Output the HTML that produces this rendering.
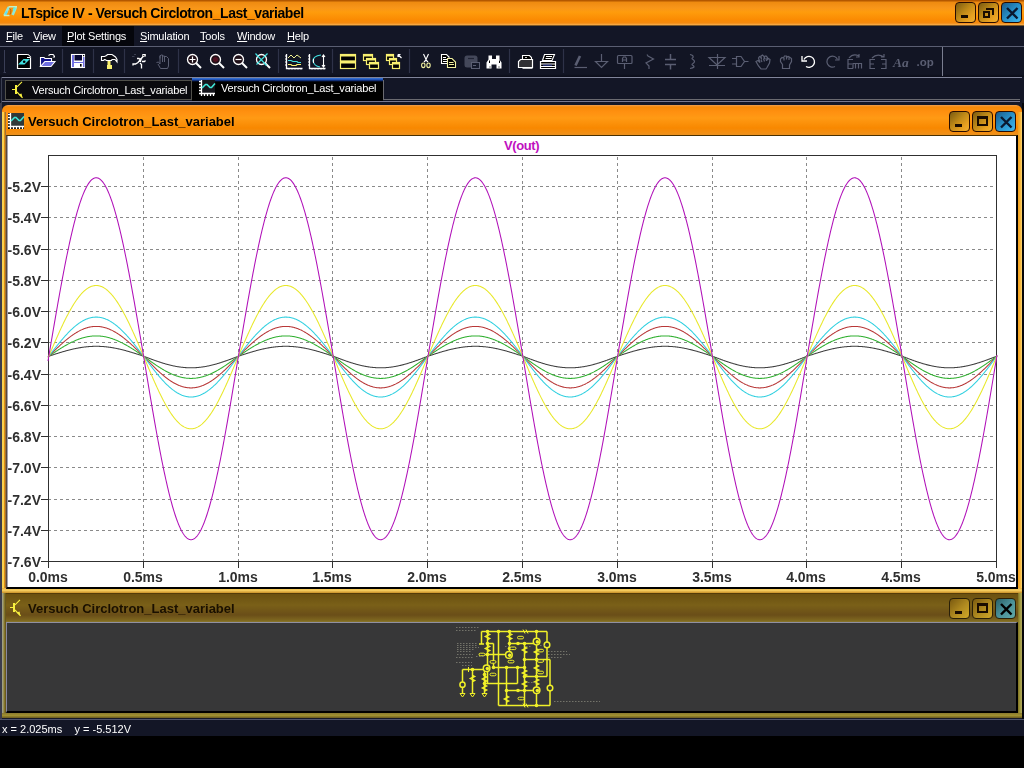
<!DOCTYPE html>
<html><head><meta charset="utf-8"><style>
*{margin:0;padding:0;box-sizing:border-box}
body{width:1024px;height:768px;overflow:hidden;background:#000;position:relative;font-family:"Liberation Sans",sans-serif;-webkit-font-smoothing:antialiased}
.mi,.tab,.wt,.yl,.xl,#ttl,#status div{will-change:transform}
.a{position:absolute}
.btn{width:21px;height:21px;border:1.5px solid #2a0c00;border-radius:4px}
#tb{left:0;top:0;width:1024px;height:26px;background:linear-gradient(#b45800 0,#b45800 1px,#ee8a10 2px,#f8961a 8px,#ff9c0c 12px,#fb8a02 20px,#f48a10 23px,#f8b050 25px,#000 26px)}
#ttl{left:21px;top:5px;font-size:14px;letter-spacing:-0.45px;font-weight:bold;color:#000;white-space:nowrap}
#menu{left:0;top:26px;width:1024px;height:20px;background:#131626}
.mi{position:absolute;top:4px;font-size:11px;color:#fff;white-space:nowrap;letter-spacing:-0.2px}
.mi u{text-decoration:underline}
#tool{left:0;top:46px;width:1024px;height:31px;background:linear-gradient(#121524 0,#121524 27px,#0a0c18 30px);border-top:1px solid #5a5e72}
#tabs{left:0;top:77px;width:1024px;height:27px;background:#131626}
#mdi{left:0;top:103px;width:1024px;height:617px;background:linear-gradient(90deg,#3c3c4c 0,#3c3c4c 2px,#151828 2px,#151828 1022px,#050508 1022px)}
.win{position:absolute;border-radius:6px 6px 0 0;overflow:hidden}
#w1{left:2px;top:105px;width:1020px;height:488px;background:linear-gradient(#f0a050 0,#f88a08 2px,#ff9010 7px,#ff9a14 13px,#f88800 23px,#f09018 29px,#e89020 30px)}
#w1in{left:4px;top:30px;width:1012px;height:454px;background:#fff;border-left:1px solid #5a4838;border-top:1px solid #4a3000;border-right:2px solid #000;border-bottom:2px solid #000;box-shadow:inset 1px 0 0 #a0a0b0}
#w2{left:2px;top:593px;width:1020px;height:125px;background:linear-gradient(#402800 0,#6a5010 1px,#7a6018 12px,#6a4e18 22px,#806a20 28px,#8a7a30 29px)}
#w2in{left:4px;top:29px;width:1012px;height:91px;background:#373738;border-top:1px solid #9090a0;border-left:1px solid #8888a0;border-right:2px solid #000;border-bottom:2px solid #000}
.lft{position:absolute;left:0;width:4px;background:linear-gradient(90deg,#f8d050 0,#f8d050 1.5px,#e09010 2.5px,#e09840 3px,#604830 4px)}
.rgt{position:absolute;right:0;width:4px;background:linear-gradient(90deg,#f0a020,#f8b030 50%,#f8d878)}
.bot{position:absolute;left:0;bottom:0;width:1020px;height:5px;background:linear-gradient(#e8b040,#f8d060 45%,#c89028)}
.wt{position:absolute;left:26px;top:9px;font-size:13px;font-weight:bold;white-space:nowrap}
#status{left:0;top:719px;width:1024px;height:17px;background:#131626;border-top:1px solid #50546a}
.yl{position:absolute;left:0;width:41px;text-align:right;font-size:14px;font-weight:bold;color:#303030}
.xl{position:absolute;top:431px;width:60px;text-align:center;font-size:14px;font-weight:bold;color:#303030}
.g{stroke:#8a8a8a;stroke-width:1;stroke-dasharray:3 3}
.f{stroke:#303030;stroke-width:1;fill:none}
.tab{position:absolute;font-size:11px;letter-spacing:-0.19px;color:#fff;white-space:nowrap}
</style></head><body>
<div id="tb" class="a"><div id="ttl" class="a">LTspice IV - Versuch Circlotron_Last_variabel</div>
<svg class="a" style="left:0;top:0" width="20" height="26"><path d="M4.5 15.5L8.8 7.2M16 7L12.6 15" stroke="#90e8d8" stroke-width="2.6" fill="none"/><path d="M8.5 6.8H17M3.8 15.6H9.5" stroke="#c8f0c0" stroke-width="1.5"/><path d="M14.8 7.5L13.5 10.5" stroke="#60f0e8" stroke-width="2"/><path d="M5.5 14.5L7 11.5" stroke="#60e0f0" stroke-width="2"/><path d="M9.6 8.4Q12 10 10 14.5" stroke="#a05010" stroke-width="0.8" fill="none"/></svg>
<div class="a btn" style="left:955px;top:2px;background:linear-gradient(135deg,#7a5a10,#c08a18 45%,#e8a020 75%,#f0b030);border-color:#2a0c00"><div class="a" style="left:5px;top:12px;width:7px;height:3px;background:#1a0c00"></div></div><div class="a btn" style="left:978px;top:2px;background:linear-gradient(135deg,#7a5a10,#c08a18 45%,#e8a020 75%,#f0b030);border-color:#2a0c00"><div class="a" style="left:7px;top:5px;width:8px;height:7px;border:2px solid #1a0c00;border-left:0;border-bottom:0"></div><div class="a" style="left:4px;top:8px;width:7px;height:7px;border:2px solid #1a0c00"></div></div><div class="a btn" style="left:1001px;top:2px;background:linear-gradient(135deg,#1a5a8a,#2890c8 50%,#40b8f0);border-color:#2a0c00"><svg class="a" style="left:0;top:0" width="21" height="21"><path d="M5 5L15.5 15.5M15.5 5L5 15.5" stroke="#0a1830" stroke-width="2.4"/></svg></div>
</div>
<div id="menu" class="a">
<div class="a" style="left:62px;top:0;width:72px;height:20px;background:#05060c"></div>
<div class="mi" style="left:6px"><u>F</u>ile</div>
<div class="mi" style="left:33px"><u>V</u>iew</div>
<div class="mi" style="left:67px"><u>P</u>lot Settings</div>
<div class="mi" style="left:140px"><u>S</u>imulation</div>
<div class="mi" style="left:200px"><u>T</u>ools</div>
<div class="mi" style="left:237px"><u>W</u>indow</div>
<div class="mi" style="left:287px"><u>H</u>elp</div>
</div>
<div id="tool" class="a"></div>
<div id="tabs" class="a">
 <div class="a" style="left:1px;top:0;width:1021px;height:1px;background:#80849a"></div>
 <div class="a" style="left:1px;top:0;width:1px;height:26px;background:#3a3e50"></div>
 <div class="a" style="left:383px;top:22px;width:637px;height:1px;background:#6a6a70"></div>
 <div class="a" style="left:383px;top:3px;width:1px;height:20px;background:#6a6a70"></div>
 <div class="a" style="left:5px;top:3px;width:187px;height:20px;background:#0a0a0e;border:1px solid #50504a"></div>
 <div class="tab" style="left:32px;top:7px">Versuch Circlotron_Last_variabel</div>
 <div class="a" style="left:192px;top:1px;width:191px;height:23px;background:linear-gradient(#3a78d8 0,#1848b0 2px,#0a1840 3px,#000 4px)"></div>
 <div class="a" style="left:2px;top:24px;width:1018px;height:1px;background:#7a7a90"></div>
 <div class="tab" style="left:221px;top:5px">Versuch Circlotron_Last_variabel</div>
 <svg class="a" style="left:0;top:-77px" width="240" height="104">
  <rect x="15" y="85" width="2" height="9" fill="#f8f040"/><path d="M12 89.5H15M17 86.8L22 81.8M17 92L22.5 97.8" stroke="#f8f040" stroke-width="1.1" fill="none"/><path d="M18.5 94.5L22.5 97.8L21.5 93.5z" fill="#f8f040"/>
  <rect x="202.0" y="80.0" width="13" height="13" fill="#16161c"/><path d="M201.5 80.0V96.0M199.0 93.5H215.0" stroke="#fff" stroke-width="1.3"/><path d="M199.0 81.5H201.5 M199.0 84.5H201.5 M199.0 87.5H201.5 M199.0 90.5H201.5 M204.5 93.5V96.0 M207.5 93.5V96.0 M210.5 93.5V96.0 M213.5 93.5V96.0" stroke="#fff" stroke-width="1.3"/><path d="M202.0 88.0L205.5 84.5H207.0L210.0 87.5H211.5L215.0 83.5" stroke="#40e8d8" stroke-width="1.6" fill="none"/>
 </svg>
</div>
<div id="mdi" class="a"></div>
<div id="w1" class="win">
 <div class="lft" style="top:7px;height:481px"></div><div class="rgt" style="top:7px;height:481px"></div><div class="bot"></div>
 <div class="wt">Versuch Circlotron_Last_variabel</div>
 <div id="w1in" class="a">
  <div class="a" style="left:497px;top:2px;font-size:13px;font-weight:bold;color:#c010c0;letter-spacing:-0.4px">V(out)</div>
 </div>
 <svg class="a" style="left:-2px;top:-105px" width="40" height="140">
  <rect x="8.0" y="113.0" width="16" height="16" fill="#000"/><rect x="11.0" y="113.0" width="13" height="13" fill="#303838"/><path d="M10.5 113.0V129.0M8.0 126.5H24.0" stroke="#fff" stroke-width="1.3"/><path d="M8.0 114.5H10.5 M8.0 117.5H10.5 M8.0 120.5H10.5 M8.0 123.5H10.5 M13.5 126.5V129.0 M16.5 126.5V129.0 M19.5 126.5V129.0 M22.5 126.5V129.0" stroke="#fff" stroke-width="1.3"/><path d="M11.0 121.0L14.5 117.5H16.0L19.0 120.5H20.5L24.0 116.5" stroke="#40e8d8" stroke-width="1.6" fill="none"/>
 </svg>
 <div class="a btn" style="left:947px;top:6px;background:linear-gradient(135deg,#7a5a10,#c08a18 45%,#e8a020 75%,#f0b030);border-color:#2a0c00"><div class="a" style="left:5px;top:12px;width:7px;height:3px;background:#1a0c00"></div></div><div class="a btn" style="left:970px;top:6px;background:linear-gradient(135deg,#7a5a10,#c08a18 45%,#e8a020 75%,#f0b030);border-color:#2a0c00"><div class="a" style="left:4px;top:4px;width:11px;height:10px;border:2px solid #1a0c00;border-top-width:3px"></div></div><div class="a btn" style="left:993px;top:6px;background:linear-gradient(135deg,#1a5a8a,#2890c8 50%,#40b8f0);border-color:#2a0c00"><svg class="a" style="left:0;top:0" width="21" height="21"><path d="M5 5L15.5 15.5M15.5 5L5 15.5" stroke="#0a1830" stroke-width="2.4"/></svg></div>
</div>
<div id="w2" class="win" style="border-radius:0">
 <div class="lft" style="top:0;height:125px;background:linear-gradient(90deg,#a0a080 0,#a0a080 1px,#8a7a30 2px,#807020 3px,#504020)"></div><div class="rgt" style="top:0;height:125px;background:linear-gradient(90deg,#807020,#a09a40 50%,#b0a860)"></div><div class="bot" style="height:5px;background:linear-gradient(#8a7a30,#a09030 50%,#6a5a20)"></div>
 <div class="wt" style="color:#1a1000;top:8px">Versuch Circlotron_Last_variabel</div>
 <div id="w2in" class="a"></div>
 <svg class="a" style="left:-2px;top:-593px" width="40" height="630">
  <rect x="13" y="603" width="2" height="9" fill="#f8f040"/><path d="M10 607.5H13M15 604.8L20 599.8M15 610L20.5 615.8" stroke="#f8f040" stroke-width="1.1" fill="none"/><path d="M16.5 612.5L20.5 615.8L19.5 611.5z" fill="#f8f040"/>
 </svg>
 <div class="a btn" style="left:947px;top:5px;background:linear-gradient(135deg,#7a5a10,#b08a20 55%,#d0a828);border-color:#2a2008"><div class="a" style="left:5px;top:12px;width:7px;height:3px;background:#1a0c00"></div></div><div class="a btn" style="left:970px;top:5px;background:linear-gradient(135deg,#7a5a10,#b08a20 55%,#d0a828);border-color:#2a2008"><div class="a" style="left:4px;top:4px;width:11px;height:10px;border:2px solid #1a0c00;border-top-width:3px"></div></div><div class="a btn" style="left:993px;top:5px;background:linear-gradient(135deg,#2a6068,#4a9098 50%,#60a8a8);border-color:#2a2008"><svg class="a" style="left:0;top:0" width="21" height="21"><path d="M5 5L15.5 15.5M15.5 5L5 15.5" stroke="#000" stroke-width="2.4"/></svg></div>
</div>
<svg class="a" style="left:0;top:0" width="1024" height="768">
<line x1="4.5" y1="50" x2="4.5" y2="73" stroke="#3a3e56" stroke-width="1"/>
<line x1="3.5" y1="72.5" x2="6" y2="72.5" stroke="#3a3e56"/>
<line x1="62.5" y1="49" x2="62.5" y2="73" stroke="#2e3248" stroke-width="1.2"/>
<line x1="93.5" y1="49" x2="93.5" y2="73" stroke="#2e3248" stroke-width="1.2"/>
<line x1="124.5" y1="49" x2="124.5" y2="73" stroke="#2e3248" stroke-width="1.2"/>
<line x1="178.5" y1="49" x2="178.5" y2="73" stroke="#2e3248" stroke-width="1.2"/>
<line x1="278.5" y1="49" x2="278.5" y2="73" stroke="#2e3248" stroke-width="1.2"/>
<line x1="332.5" y1="49" x2="332.5" y2="73" stroke="#2e3248" stroke-width="1.2"/>
<line x1="409.5" y1="49" x2="409.5" y2="73" stroke="#2e3248" stroke-width="1.2"/>
<line x1="509.5" y1="49" x2="509.5" y2="73" stroke="#2e3248" stroke-width="1.2"/>
<line x1="563.5" y1="49" x2="563.5" y2="73" stroke="#2e3248" stroke-width="1.2"/>
<line x1="942.5" y1="47" x2="942.5" y2="76" stroke="#7a7e90" stroke-width="1"/>
<path d="M17.5 54.5H28L30.5 57V68.5H17.5Z" fill="#000" stroke="#ffffff" stroke-width="1.2"/>
<path d="M27.5 54.5L31 58H27.5z" fill="#000"/><path d="M27 57.5h3.5" stroke="#ffffff" stroke-width="1"/>
<path d="M18 64.5L23.5 59H30L24.5 64.5Z" fill="#40e0e0"/><circle cx="24.2" cy="61.8" r="1.3" fill="#000"/>
<path d="M40.5 57.5h3.5l1 1h6.5v3h-6l-3 4.5h-2z" fill="#10108a" stroke="#ffffff" stroke-width="1.1"/>
<path d="M45 61.5H55L51 66.5H40.5Z" fill="#7070e0" stroke="#ffffff" stroke-width="1.1"/>
<path d="M48.5 55.5l1.5-1h3l1 1" fill="none" stroke="#ffffff" stroke-width="1.1"/><path d="M52.5 57.5h2.5v-2.5z" fill="#ffffff"/>
<rect x="71.5" y="54.5" width="13" height="13" fill="#ffffff" stroke="#ffffff" stroke-width="1.1"/>
<path d="M72 55h2v12h-2zM83 57h1.5v10h-1.5zM72 62h12.5v1h-12.5z" fill="#7070e0"/>
<rect x="74.5" y="55" width="7.5" height="5.5" fill="#080830"/><rect x="80" y="64" width="1.6" height="2.6" fill="#000"/><rect x="83" y="55" width="1.2" height="1.2" fill="#000"/>
<path d="M101.5 56.5H104.5L106.5 55.5L107.5 54.5H112L115.5 57L117 59.5V62L115 59.5H112L111.5 60.5H106.5L105 59.5H104.5L103.5 60.5H101.5Z" fill="#0a0a10" stroke="#ffffff" stroke-width="1.1"/>
<path d="M107.5 61h3v4h1.5v4h-5v-4h0.5z" fill="#f8f070"/>
<path d="M143.5 56L138 62.5L135.5 64H133V65.5M140 63L141.5 64.5V68.5M137 58.5H139L140 59.5M142 61.5H144.5L145.5 60.5" fill="none" stroke="#ffffff" stroke-width="1.3"/>
<rect x="142.3" y="54" width="3.5" height="2.6" fill="#ffffff"/><rect x="143.3" y="55" width="1" height="1" fill="#000"/><path d="M140 58.5L142 57.5L141 62L139 62z" fill="#ffffff"/>
<path d="M134 54.5h2M132 56.5h2.5" stroke="#3a3e50" stroke-width="1"/>
<path d="M156.5 62.5L158.5 62L160 64V55.5M160 58.5V56L161 55H162.5V62M162.5 56H164.5V62M164.5 56.5H166.5L168.5 58.5V66L167.5 68.5H160.5L158 64" fill="none" stroke="#5a5e72" stroke-width="1"/>
<circle cx="192.5" cy="59.5" r="5" fill="#201018" stroke="#ffffff" stroke-width="1.3"/>
<line x1="196.0" y1="63.0" x2="201.0" y2="68.0" stroke="#ffffff" stroke-width="2"/>
<path d="M189.5 59.5h6M192.5 56.5v6" stroke="#ffffff" stroke-width="1.2"/>
<circle cx="215.5" cy="59.5" r="5" fill="#201018" stroke="#ffffff" stroke-width="1.3"/>
<line x1="219.0" y1="63.0" x2="224.0" y2="68.0" stroke="#ffffff" stroke-width="2"/>
<circle cx="215.5" cy="59.5" r="2.5" fill="#501020"/>
<circle cx="238.5" cy="59.5" r="5" fill="#201018" stroke="#ffffff" stroke-width="1.3"/>
<line x1="242.0" y1="63.0" x2="247.0" y2="68.0" stroke="#ffffff" stroke-width="2"/>
<path d="M235.5 59.5h6" stroke="#ffffff" stroke-width="1.2"/>
<circle cx="261.5" cy="59.5" r="5" fill="#201018" stroke="#ffffff" stroke-width="1.3"/>
<line x1="265.0" y1="63.0" x2="270.0" y2="68.0" stroke="#ffffff" stroke-width="2"/>
<path d="M255.5 53.5l11 12M267.5 53.5l-11 11" stroke="#40e0e0" stroke-width="1.2"/>
<path d="M286.5 54v14.5h16" fill="none" stroke="#ffffff" stroke-width="1.3"/>
<path d="M288 58l3-3 3 3 3-3 4 3" fill="none" stroke="#f0f090" stroke-width="1"/>
<path d="M288 60.5h3l2 1h4l1 1h3" fill="none" stroke="#40e0e0" stroke-width="1.2"/>
<path d="M288 64.5h3l1 1h4l1-1h4" fill="none" stroke="#f8f070" stroke-width="1.2"/>
<path d="M285 56h1M285 59h1M285 62h1M285 65h1M289 69.5v-1M292 69.5v-1M295 69.5v-1M298 69.5v-1M301 69.5v-1" stroke="#ffffff" stroke-width="1"/>
<path d="M309.5 54v14.5h16" fill="none" stroke="#ffffff" stroke-width="1.3"/>
<path d="M321 55Q313 56 313 61Q314 66 320 67" fill="none" stroke="#40e0e0" stroke-width="1.2"/>
<path d="M323.5 55v12M322 57l1.5-2 1.5 2M322 65l1.5 2 1.5-2M313.5 59v4" fill="none" stroke="#ffffff" stroke-width="1.1"/>
<path d="M308 56h1M308 59h1M308 62h1M308 65h1M312 69.5v-1M315 69.5v-1M318 69.5v-1M321 69.5v-1M324 69.5v-1" stroke="#ffffff" stroke-width="1"/>
<rect x="340.5" y="54.5" width="15" height="6.5" fill="#000" stroke="#f8f070" stroke-width="1.2"/><rect x="340.5" y="54.5" width="15" height="2" fill="#f8f070"/>
<rect x="340.5" y="61.5" width="15" height="7" fill="#000" stroke="#f8f070" stroke-width="1.2"/><rect x="340.5" y="61.5" width="15" height="2" fill="#f8f070"/>
<rect x="363.5" y="54.5" width="9" height="6" fill="#000" stroke="#f8f070" stroke-width="1.2"/><rect x="363.5" y="54.5" width="9" height="2" fill="#f8f070"/>
<rect x="366.5" y="58.5" width="9" height="6" fill="#000" stroke="#f8f070" stroke-width="1.2"/><rect x="366.5" y="58.5" width="9" height="2" fill="#f8f070"/>
<rect x="369.5" y="62.5" width="9" height="6" fill="#000" stroke="#f8f070" stroke-width="1.2"/><rect x="369.5" y="62.5" width="9" height="2" fill="#f8f070"/>
<rect x="386.5" y="54.5" width="7" height="6" fill="#000" stroke="#f8f070" stroke-width="1.2"/><rect x="386.5" y="54.5" width="7" height="2" fill="#f8f070"/>
<rect x="389.5" y="58.5" width="7" height="6" fill="#000" stroke="#f8f070" stroke-width="1.2"/><rect x="389.5" y="58.5" width="7" height="2" fill="#f8f070"/>
<rect x="392.5" y="62.5" width="7" height="6" fill="#000" stroke="#f8f070" stroke-width="1.2"/><rect x="392.5" y="62.5" width="7" height="2" fill="#f8f070"/>
<path d="M398 54.5h2.5M398 54.5v2.5M398.5 55l3 3" stroke="#ffffff" stroke-width="1.2"/>
<path d="M423.5 54L426.5 60.5M428.5 54L425.5 60.5M424 62l1.5-1.5M428 62l-1.5-1.5" fill="none" stroke="#ffffff" stroke-width="1.1"/>
<ellipse cx="423.3" cy="65.3" rx="1.7" ry="2.3" fill="none" stroke="#f0f0a0" stroke-width="1.1"/><ellipse cx="428.5" cy="65.3" rx="1.7" ry="2.3" fill="none" stroke="#f0f0a0" stroke-width="1.1"/>
<path d="M441.5 54.5h5l2.5 2.5v6.5h-7.5z" fill="#000" stroke="#ffffff" stroke-width="1.1"/><path d="M443 57.5h3M443 59.5h4M443 61.5h4" stroke="#ffffff" stroke-width="1"/>
<path d="M447.5 58.5h4.5l3.5 3.5v5.5h-8z" fill="#000" stroke="#f0f0a0" stroke-width="1.1"/><path d="M449 62.5h4.5M449 64.5h5" stroke="#f0f0a0" stroke-width="1"/>
<rect x="464.5" y="55.5" width="13" height="12" rx="2.5" fill="#44485a"/><path d="M468 58.5h6" stroke="#202434" stroke-width="1.2"/><rect x="471.5" y="62.5" width="8" height="6" fill="#141828" stroke="#5a5e72" stroke-width="1"/><path d="M473 65.5h3" stroke="#5a5e72"/>
<path d="M488.5 55.5h3.5v3.5h4v-3.5h3.5v4l2 3v6h-5v-4h-5v4h-5v-6l2-3z" fill="#ffffff"/><path d="M489.5 60.5v2.5M499.5 60.5v2.5M490 66.5v1M499 66.5v1M494 56v2" stroke="#000" stroke-width="1"/>
<path d="M522.5 59V55.5H529.5L531.5 57.5V59" fill="#000" stroke="#ffffff" stroke-width="1.1"/><path d="M525 57l1 1 1-1" stroke="#ffffff" stroke-width="0.8" fill="none"/>
<path d="M520.5 59.5H532.5V67.5H518.5V61.5Z" fill="#303034" stroke="#ffffff" stroke-width="1.2"/><path d="M522.5 68h10" stroke="#ffffff" stroke-width="1.5"/>
<path d="M544.5 54.5H554.5L552 60.5H542.5Z" fill="#000" stroke="#ffffff" stroke-width="1.1"/><path d="M546 56.5h6M545.5 58.5h6" stroke="#ffffff" stroke-width="1"/>
<path d="M540.5 61.5H555.5V68.5H540.5Z" fill="#000" stroke="#ffffff" stroke-width="1.2"/><path d="M541 64h14M541 66.5h14" stroke="#ffffff" stroke-width="1"/><path d="M543 65.2h9" stroke="#3040a0"/>
<path d="M575.5 65.5L580 56" stroke="#5a5e72" stroke-width="2.6" fill="none"/><path d="M574.5 67.5h12.5" fill="none" stroke="#5a5e72" stroke-width="1.2"/>
<path d="M601.5 54v7.5M595.5 61.5h12l-6 6z" fill="none" stroke="#5a5e72" stroke-width="1.2"/>
<rect x="617.5" y="55.5" width="14.5" height="8" rx="1" fill="none" stroke="#5a5e72" stroke-width="1.2"/><path d="M622.5 62V58.5l1-1.5h2l1 1.5V62M622.5 60h4" fill="none" stroke="#5a5e72" stroke-width="1.2"/><path d="M624.5 64v5" fill="none" stroke="#5a5e72" stroke-width="1.2"/>
<path d="M647 54.5l1 1.5 5.5 3-7.5 4 3 3v3" fill="none" stroke="#5a5e72" stroke-width="1.2"/>
<path d="M670.5 54v5M670.5 64.5v5M665 59.5h11M665 64.5h11" fill="none" stroke="#5a5e72" stroke-width="1.5"/>
<path d="M690 54.5q4 1 3 3 -2 1 0 2 3 2 0 4 -2 1 0 2 3 2 -3 3" fill="none" stroke="#5a5e72" stroke-width="1.2"/>
<path d="M717.5 54v15M709 57.5h16l-8 7.5zM709 65.5h16" fill="none" stroke="#5a5e72" stroke-width="1.2"/>
<path d="M732 58.5h4M732 64h4M736.5 56.5v10h4.5l3.5-5-3.5-5zM744.5 61.5h4" fill="none" stroke="#5a5e72" stroke-width="1.2"/>
<path d="M756 61.5l2-1 2 2 -1.5-4.5 1-1.5 1.5 1 0.5 2 -0.5-3.5 1.5-1 1.5 1.5 0.5 2.5 0-2.5 1.5-0.5 1.5 1.5 0 2 1-1 1.5 1 -0.5 3.5 -2.5 4.5 -1 1.5h-5l-2.5-3z" fill="none" stroke="#5a5e72" stroke-width="1.2"/><path d="M761 60l1 2M763.5 58.5l1 3M766 58l0.5 3" fill="none" stroke="#5a5e72" stroke-width="1.2"/>
<path d="M782.5 64.5l-2-3 0-2.5 1.5-1.5 1.5 0.5 1-2h2l1 1 1-0.5 1.5 1 1.5 1v3l-2 3.5v3.5h-7z M784 58v2.5M786.5 56.5v3M789 57.5v2.5" fill="none" stroke="#5a5e72" stroke-width="1.2"/>
<path d="M804 59.5A5.5 5.5 0 1 1 806 66.5" fill="none" stroke="#ffffff" stroke-width="1.3"/><path d="M802 56v5h5" fill="none" stroke="#ffffff" stroke-width="1.3"/>
<path d="M837.5 59.5A5.5 5.5 0 1 0 835 66.5" fill="none" stroke="#5a5e72" stroke-width="1.2"/><path d="M839 56v4h-4" fill="none" stroke="#5a5e72" stroke-width="1.2"/>
<path d="M853 68.5h-5v-9h5M848 64h4M853 68.5v-5h8.5v5M855.5 63.5v5M858.5 63.5v5M849 58q4-5 10-2M859 54v3h-3" fill="none" stroke="#5a5e72" stroke-width="1.2"/>
<path d="M875 68.5h-5v-9h5M870 64h4M881 59.5h5v9h-5M886 64h-4M872 58q5-5 12-1M884 54v3h-3" fill="none" stroke="#5a5e72" stroke-width="1.2"/>
<text x="893" y="67" font-family="Liberation Serif" font-style="italic" font-weight="bold" font-size="13.5" fill="#5a5e72">Aa</text>
<text x="916.5" y="66" font-family="Liberation Sans" font-weight="bold" font-size="11.5" fill="#5a5e72">.op</text>
<line x1="48" y1="186.5" x2="996" y2="186.5" class="g"/>
<line x1="48" y1="217.5" x2="996" y2="217.5" class="g"/>
<line x1="48" y1="249.5" x2="996" y2="249.5" class="g"/>
<line x1="48" y1="280.5" x2="996" y2="280.5" class="g"/>
<line x1="48" y1="311.5" x2="996" y2="311.5" class="g"/>
<line x1="48" y1="342.5" x2="996" y2="342.5" class="g"/>
<line x1="48" y1="374.5" x2="996" y2="374.5" class="g"/>
<line x1="48" y1="405.5" x2="996" y2="405.5" class="g"/>
<line x1="48" y1="436.5" x2="996" y2="436.5" class="g"/>
<line x1="48" y1="467.5" x2="996" y2="467.5" class="g"/>
<line x1="48" y1="499.5" x2="996" y2="499.5" class="g"/>
<line x1="48" y1="530.5" x2="996" y2="530.5" class="g"/>
<line x1="143.5" y1="157" x2="143.5" y2="561" class="g"/>
<line x1="238.5" y1="157" x2="238.5" y2="561" class="g"/>
<line x1="332.5" y1="157" x2="332.5" y2="561" class="g"/>
<line x1="427.5" y1="157" x2="427.5" y2="561" class="g"/>
<line x1="522.5" y1="157" x2="522.5" y2="561" class="g"/>
<line x1="617.5" y1="157" x2="617.5" y2="561" class="g"/>
<line x1="712.5" y1="157" x2="712.5" y2="561" class="g"/>
<line x1="806.5" y1="157" x2="806.5" y2="561" class="g"/>
<line x1="901.5" y1="157" x2="901.5" y2="561" class="g"/>
<rect x="48.5" y="155.5" width="948" height="406" class="f"/>
<path d="M41 186.5H48 M41 217.5H48 M41 249.5H48 M41 280.5H48 M41 311.5H48 M41 342.5H48 M41 374.5H48 M41 405.5H48 M41 436.5H48 M41 467.5H48 M41 499.5H48 M41 530.5H48 M41 561.5H48 M48.5 561V568 M143.5 561V568 M238.5 561V568 M332.5 561V568 M427.5 561V568 M522.5 561V568 M617.5 561V568 M712.5 561V568 M806.5 561V568 M901.5 561V568 M996.5 561V568" class="f"/>
<polyline points="48.0,356.51 48.5,356.32 49.0,356.13 49.5,355.97 50.0,355.81 50.5,355.64 51.0,355.48 51.5,355.32 52.0,355.15 52.5,354.99 53.0,354.83 53.5,354.66 54.0,354.50 54.5,354.34 55.0,354.18 55.5,354.02 56.0,353.86 56.5,353.70 57.0,353.54 57.5,353.39 58.0,353.23 58.5,353.07 59.0,352.92 59.5,352.76 60.0,352.61 60.5,352.46 61.0,352.31 61.5,352.16 62.0,352.01 62.5,351.86 63.0,351.71 63.5,351.57 64.0,351.42 64.5,351.28 65.0,351.14 65.5,351.00 66.0,350.86 66.5,350.72 67.0,350.58 67.5,350.45 68.0,350.32 68.5,350.19 69.0,350.06 69.5,349.93 70.0,349.80 70.5,349.68 71.0,349.56 71.5,349.44 72.0,349.32 72.5,349.20 73.0,349.08 73.5,348.97 74.0,348.86 74.5,348.75 75.0,348.64 75.5,348.54 76.0,348.44 76.5,348.34 77.0,348.24 77.5,348.14 78.0,348.05 78.5,347.95 79.0,347.87 79.5,347.78 80.0,347.69 80.5,347.61 81.0,347.53 81.5,347.45 82.0,347.38 82.5,347.30 83.0,347.23 83.5,347.16 84.0,347.10 84.5,347.03 85.0,346.97 85.5,346.92 86.0,346.86 86.5,346.81 87.0,346.76 87.5,346.71 88.0,346.66 88.5,346.62 89.0,346.58 89.5,346.54 90.0,346.51 90.5,346.48 91.0,346.45 91.5,346.42 92.0,346.40 92.5,346.37 93.0,346.36 93.5,346.34 94.0,346.33 94.5,346.32 95.0,346.31 95.5,346.30 96.0,346.30 96.5,346.30 97.0,346.30 97.5,346.31 98.0,346.32 98.5,346.33 99.0,346.34 99.5,346.36 100.0,346.38 100.5,346.40 101.0,346.42 101.5,346.45 102.0,346.48 102.5,346.51 103.0,346.55 103.5,346.59 104.0,346.63 104.5,346.67 105.0,346.72 105.5,346.77 106.0,346.82 106.5,346.87 107.0,346.93 107.5,346.99 108.0,347.05 108.5,347.11 109.0,347.18 109.5,347.25 110.0,347.32 110.5,347.39 111.0,347.47 111.5,347.55 112.0,347.63 112.5,347.71 113.0,347.80 113.5,347.88 114.0,347.97 114.5,348.07 115.0,348.16 115.5,348.26 116.0,348.36 116.5,348.46 117.0,348.56 117.5,348.67 118.0,348.77 118.5,348.88 119.0,348.99 119.5,349.11 120.0,349.22 120.5,349.34 121.0,349.46 121.5,349.58 122.0,349.70 122.5,349.83 123.0,349.95 123.5,350.08 124.0,350.21 124.5,350.34 125.0,350.48 125.5,350.61 126.0,350.75 126.5,350.89 127.0,351.02 127.5,351.17 128.0,351.31 128.5,351.45 129.0,351.59 129.5,351.74 130.0,351.89 130.5,352.04 131.0,352.19 131.5,352.34 132.0,352.49 132.5,352.64 133.0,352.79 133.5,352.95 134.0,353.10 134.5,353.26 135.0,353.42 135.5,353.57 136.0,353.73 136.5,353.89 137.0,354.05 137.5,354.21 138.0,354.37 138.5,354.53 139.0,354.70 139.5,354.86 140.0,355.02 140.5,355.18 141.0,355.35 141.5,355.51 142.0,355.68 142.5,355.84 143.0,356.00 143.5,356.17 144.0,356.35 144.5,356.55 145.0,356.74 145.5,356.93 146.0,357.12 146.5,357.31 147.0,357.50 147.5,357.70 148.0,357.89 148.5,358.08 149.0,358.26 149.5,358.45 150.0,358.64 150.5,358.83 151.0,359.02 151.5,359.20 152.0,359.39 152.5,359.57 153.0,359.76 153.5,359.94 154.0,360.12 154.5,360.30 155.0,360.48 155.5,360.66 156.0,360.83 156.5,361.01 157.0,361.18 157.5,361.36 158.0,361.53 158.5,361.70 159.0,361.87 159.5,362.03 160.0,362.20 160.5,362.36 161.0,362.52 161.5,362.68 162.0,362.84 162.5,363.00 163.0,363.15 163.5,363.31 164.0,363.46 164.5,363.61 165.0,363.75 165.5,363.90 166.0,364.04 166.5,364.18 167.0,364.32 167.5,364.46 168.0,364.59 168.5,364.72 169.0,364.85 169.5,364.98 170.0,365.10 170.5,365.22 171.0,365.34 171.5,365.46 172.0,365.58 172.5,365.69 173.0,365.80 173.5,365.90 174.0,366.01 174.5,366.11 175.0,366.21 175.5,366.30 176.0,366.40 176.5,366.49 177.0,366.57 177.5,366.66 178.0,366.74 178.5,366.82 179.0,366.89 179.5,366.97 180.0,367.04 180.5,367.10 181.0,367.17 181.5,367.23 182.0,367.29 182.5,367.34 183.0,367.39 183.5,367.44 184.0,367.49 184.5,367.53 185.0,367.57 185.5,367.61 186.0,367.64 186.5,367.67 187.0,367.70 187.5,367.72 188.0,367.74 188.5,367.76 189.0,367.77 189.5,367.79 190.0,367.79 190.5,367.80 191.0,367.80 191.5,367.80 192.0,367.79 192.5,367.79 193.0,367.77 193.5,367.76 194.0,367.74 194.5,367.72 195.0,367.70 195.5,367.67 196.0,367.64 196.5,367.61 197.0,367.57 197.5,367.53 198.0,367.49 198.5,367.44 199.0,367.39 199.5,367.34 200.0,367.29 200.5,367.23 201.0,367.17 201.5,367.10 202.0,367.04 202.5,366.97 203.0,366.89 203.5,366.82 204.0,366.74 204.5,366.66 205.0,366.57 205.5,366.49 206.0,366.40 206.5,366.30 207.0,366.21 207.5,366.11 208.0,366.01 208.5,365.90 209.0,365.80 209.5,365.69 210.0,365.58 210.5,365.46 211.0,365.34 211.5,365.22 212.0,365.10 212.5,364.98 213.0,364.85 213.5,364.72 214.0,364.59 214.5,364.46 215.0,364.32 215.5,364.18 216.0,364.04 216.5,363.90 217.0,363.75 217.5,363.61 218.0,363.46 218.5,363.31 219.0,363.15 219.5,363.00 220.0,362.84 220.5,362.68 221.0,362.52 221.5,362.36 222.0,362.20 222.5,362.03 223.0,361.87 223.5,361.70 224.0,361.53 224.5,361.36 225.0,361.18 225.5,361.01 226.0,360.83 226.5,360.66 227.0,360.48 227.5,360.30 228.0,360.12 228.5,359.94 229.0,359.76 229.5,359.57 230.0,359.39 230.5,359.20 231.0,359.02 231.5,358.83 232.0,358.64 232.5,358.45 233.0,358.26 233.5,358.08 234.0,357.89 234.5,357.70 235.0,357.50 235.5,357.31 236.0,357.12 236.5,356.93 237.0,356.74 237.5,356.55 238.0,356.35 238.5,356.17 239.0,356.00 239.5,355.84 240.0,355.68 240.5,355.51 241.0,355.35 241.5,355.18 242.0,355.02 242.5,354.86 243.0,354.70 243.5,354.53 244.0,354.37 244.5,354.21 245.0,354.05 245.5,353.89 246.0,353.73 246.5,353.57 247.0,353.42 247.5,353.26 248.0,353.10 248.5,352.95 249.0,352.79 249.5,352.64 250.0,352.49 250.5,352.34 251.0,352.19 251.5,352.04 252.0,351.89 252.5,351.74 253.0,351.59 253.5,351.45 254.0,351.31 254.5,351.17 255.0,351.02 255.5,350.89 256.0,350.75 256.5,350.61 257.0,350.48 257.5,350.34 258.0,350.21 258.5,350.08 259.0,349.95 259.5,349.83 260.0,349.70 260.5,349.58 261.0,349.46 261.5,349.34 262.0,349.22 262.5,349.11 263.0,348.99 263.5,348.88 264.0,348.77 264.5,348.67 265.0,348.56 265.5,348.46 266.0,348.36 266.5,348.26 267.0,348.16 267.5,348.07 268.0,347.97 268.5,347.88 269.0,347.80 269.5,347.71 270.0,347.63 270.5,347.55 271.0,347.47 271.5,347.39 272.0,347.32 272.5,347.25 273.0,347.18 273.5,347.11 274.0,347.05 274.5,346.99 275.0,346.93 275.5,346.87 276.0,346.82 276.5,346.77 277.0,346.72 277.5,346.67 278.0,346.63 278.5,346.59 279.0,346.55 279.5,346.51 280.0,346.48 280.5,346.45 281.0,346.42 281.5,346.40 282.0,346.38 282.5,346.36 283.0,346.34 283.5,346.33 284.0,346.32 284.5,346.31 285.0,346.30 285.5,346.30 286.0,346.30 286.5,346.30 287.0,346.31 287.5,346.32 288.0,346.33 288.5,346.34 289.0,346.36 289.5,346.37 290.0,346.40 290.5,346.42 291.0,346.45 291.5,346.48 292.0,346.51 292.5,346.54 293.0,346.58 293.5,346.62 294.0,346.66 294.5,346.71 295.0,346.76 295.5,346.81 296.0,346.86 296.5,346.92 297.0,346.97 297.5,347.03 298.0,347.10 298.5,347.16 299.0,347.23 299.5,347.30 300.0,347.38 300.5,347.45 301.0,347.53 301.5,347.61 302.0,347.69 302.5,347.78 303.0,347.87 303.5,347.95 304.0,348.05 304.5,348.14 305.0,348.24 305.5,348.34 306.0,348.44 306.5,348.54 307.0,348.64 307.5,348.75 308.0,348.86 308.5,348.97 309.0,349.08 309.5,349.20 310.0,349.32 310.5,349.44 311.0,349.56 311.5,349.68 312.0,349.80 312.5,349.93 313.0,350.06 313.5,350.19 314.0,350.32 314.5,350.45 315.0,350.58 315.5,350.72 316.0,350.86 316.5,351.00 317.0,351.14 317.5,351.28 318.0,351.42 318.5,351.57 319.0,351.71 319.5,351.86 320.0,352.01 320.5,352.16 321.0,352.31 321.5,352.46 322.0,352.61 322.5,352.76 323.0,352.92 323.5,353.07 324.0,353.23 324.5,353.39 325.0,353.54 325.5,353.70 326.0,353.86 326.5,354.02 327.0,354.18 327.5,354.34 328.0,354.50 328.5,354.66 329.0,354.83 329.5,354.99 330.0,355.15 330.5,355.32 331.0,355.48 331.5,355.64 332.0,355.81 332.5,355.97 333.0,356.13 333.5,356.32 334.0,356.51 334.5,356.70 335.0,356.89 335.5,357.08 336.0,357.27 336.5,357.47 337.0,357.66 337.5,357.85 338.0,358.04 338.5,358.23 339.0,358.42 339.5,358.60 340.0,358.79 340.5,358.98 341.0,359.17 341.5,359.35 342.0,359.54 342.5,359.72 343.0,359.90 343.5,360.08 344.0,360.26 344.5,360.44 345.0,360.62 345.5,360.80 346.0,360.97 346.5,361.15 347.0,361.32 347.5,361.49 348.0,361.66 348.5,361.83 349.0,362.00 349.5,362.17 350.0,362.33 350.5,362.49 351.0,362.65 351.5,362.81 352.0,362.97 352.5,363.12 353.0,363.28 353.5,363.43 354.0,363.58 354.5,363.72 355.0,363.87 355.5,364.01 356.0,364.15 356.5,364.29 357.0,364.43 357.5,364.56 358.0,364.70 358.5,364.83 359.0,364.95 359.5,365.08 360.0,365.20 360.5,365.32 361.0,365.44 361.5,365.55 362.0,365.67 362.5,365.78 363.0,365.88 363.5,365.99 364.0,366.09 364.5,366.19 365.0,366.28 365.5,366.38 366.0,366.47 366.5,366.56 367.0,366.64 367.5,366.72 368.0,366.80 368.5,366.88 369.0,366.95 369.5,367.02 370.0,367.09 370.5,367.16 371.0,367.22 371.5,367.28 372.0,367.33 372.5,367.38 373.0,367.43 373.5,367.48 374.0,367.52 374.5,367.56 375.0,367.60 375.5,367.63 376.0,367.67 376.5,367.69 377.0,367.72 377.5,367.74 378.0,367.76 378.5,367.77 379.0,367.78 379.5,367.79 380.0,367.80 380.5,367.80 381.0,367.80 381.5,367.79 382.0,367.79 382.5,367.78 383.0,367.76 383.5,367.75 384.0,367.73 384.5,367.70 385.0,367.68 385.5,367.65 386.0,367.61 386.5,367.58 387.0,367.54 387.5,367.50 388.0,367.45 388.5,367.40 389.0,367.35 389.5,367.30 390.0,367.24 390.5,367.18 391.0,367.12 391.5,367.05 392.0,366.98 392.5,366.91 393.0,366.83 393.5,366.76 394.0,366.67 394.5,366.59 395.0,366.50 395.5,366.41 396.0,366.32 396.5,366.23 397.0,366.13 397.5,366.03 398.0,365.92 398.5,365.82 399.0,365.71 399.5,365.60 400.0,365.48 400.5,365.37 401.0,365.25 401.5,365.13 402.0,365.00 402.5,364.88 403.0,364.75 403.5,364.62 404.0,364.48 404.5,364.35 405.0,364.21 405.5,364.07 406.0,363.93 406.5,363.78 407.0,363.64 407.5,363.49 408.0,363.34 408.5,363.19 409.0,363.03 409.5,362.87 410.0,362.72 410.5,362.56 411.0,362.39 411.5,362.23 412.0,362.07 412.5,361.90 413.0,361.73 413.5,361.56 414.0,361.39 414.5,361.22 415.0,361.04 415.5,360.87 416.0,360.69 416.5,360.51 417.0,360.34 417.5,360.16 418.0,359.97 418.5,359.79 419.0,359.61 419.5,359.42 420.0,359.24 420.5,359.05 421.0,358.87 421.5,358.68 422.0,358.49 422.5,358.30 423.0,358.11 423.5,357.92 424.0,357.73 424.5,357.54 425.0,357.35 425.5,357.16 426.0,356.97 426.5,356.78 427.0,356.58 427.5,356.39 428.0,356.20 428.5,356.04 429.0,355.87 429.5,355.71 430.0,355.54 430.5,355.38 431.0,355.22 431.5,355.05 432.0,354.89 432.5,354.73 433.0,354.57 433.5,354.41 434.0,354.24 434.5,354.08 435.0,353.92 435.5,353.76 436.0,353.61 436.5,353.45 437.0,353.29 437.5,353.13 438.0,352.98 438.5,352.82 439.0,352.67 439.5,352.52 440.0,352.37 440.5,352.22 441.0,352.07 441.5,351.92 442.0,351.77 442.5,351.62 443.0,351.48 443.5,351.34 444.0,351.19 444.5,351.05 445.0,350.91 445.5,350.78 446.0,350.64 446.5,350.50 447.0,350.37 447.5,350.24 448.0,350.11 448.5,349.98 449.0,349.85 449.5,349.73 450.0,349.60 450.5,349.48 451.0,349.36 451.5,349.25 452.0,349.13 452.5,349.02 453.0,348.90 453.5,348.79 454.0,348.69 454.5,348.58 455.0,348.48 455.5,348.38 456.0,348.28 456.5,348.18 457.0,348.08 457.5,347.99 458.0,347.90 458.5,347.81 459.0,347.73 459.5,347.64 460.0,347.56 460.5,347.48 461.0,347.41 461.5,347.33 462.0,347.26 462.5,347.19 463.0,347.12 463.5,347.06 464.0,347.00 464.5,346.94 465.0,346.88 465.5,346.83 466.0,346.78 466.5,346.73 467.0,346.68 467.5,346.64 468.0,346.60 468.5,346.56 469.0,346.52 469.5,346.49 470.0,346.46 470.5,346.43 471.0,346.41 471.5,346.38 472.0,346.36 472.5,346.35 473.0,346.33 473.5,346.32 474.0,346.31 474.5,346.30 475.0,346.30 475.5,346.30 476.0,346.30 476.5,346.31 477.0,346.31 477.5,346.32 478.0,346.34 478.5,346.35 479.0,346.37 479.5,346.39 480.0,346.41 480.5,346.44 481.0,346.47 481.5,346.50 482.0,346.54 482.5,346.57 483.0,346.61 483.5,346.65 484.0,346.70 484.5,346.75 485.0,346.80 485.5,346.85 486.0,346.90 486.5,346.96 487.0,347.02 487.5,347.09 488.0,347.15 488.5,347.22 489.0,347.29 489.5,347.36 490.0,347.44 490.5,347.51 491.0,347.59 491.5,347.68 492.0,347.76 492.5,347.85 493.0,347.94 493.5,348.03 494.0,348.12 494.5,348.22 495.0,348.32 495.5,348.42 496.0,348.52 496.5,348.62 497.0,348.73 497.5,348.84 498.0,348.95 498.5,349.06 499.0,349.18 499.5,349.29 500.0,349.41 500.5,349.53 501.0,349.65 501.5,349.78 502.0,349.90 502.5,350.03 503.0,350.16 503.5,350.29 504.0,350.42 504.5,350.56 505.0,350.69 505.5,350.83 506.0,350.97 506.5,351.11 507.0,351.25 507.5,351.39 508.0,351.54 508.5,351.68 509.0,351.83 509.5,351.98 510.0,352.13 510.5,352.28 511.0,352.43 511.5,352.58 512.0,352.73 512.5,352.89 513.0,353.04 513.5,353.20 514.0,353.35 514.5,353.51 515.0,353.67 515.5,353.83 516.0,353.99 516.5,354.15 517.0,354.31 517.5,354.47 518.0,354.63 518.5,354.79 519.0,354.96 519.5,355.12 520.0,355.28 520.5,355.45 521.0,355.61 521.5,355.77 522.0,355.94 522.5,356.10 523.0,356.28 523.5,356.47 524.0,356.66 524.5,356.85 525.0,357.04 525.5,357.24 526.0,357.43 526.5,357.62 527.0,357.81 527.5,358.00 528.0,358.19 528.5,358.38 529.0,358.57 529.5,358.75 530.0,358.94 530.5,359.13 531.0,359.31 531.5,359.50 532.0,359.68 532.5,359.86 533.0,360.05 533.5,360.23 534.0,360.41 534.5,360.59 535.0,360.76 535.5,360.94 536.0,361.11 536.5,361.29 537.0,361.46 537.5,361.63 538.0,361.80 538.5,361.97 539.0,362.13 539.5,362.30 540.0,362.46 540.5,362.62 541.0,362.78 541.5,362.94 542.0,363.09 542.5,363.25 543.0,363.40 543.5,363.55 544.0,363.70 544.5,363.84 545.0,363.98 545.5,364.13 546.0,364.27 546.5,364.40 547.0,364.54 547.5,364.67 548.0,364.80 548.5,364.93 549.0,365.05 549.5,365.18 550.0,365.30 550.5,365.41 551.0,365.53 551.5,365.64 552.0,365.75 552.5,365.86 553.0,365.97 553.5,366.07 554.0,366.17 554.5,366.27 555.0,366.36 555.5,366.45 556.0,366.54 556.5,366.62 557.0,366.71 557.5,366.79 558.0,366.86 558.5,366.94 559.0,367.01 559.5,367.08 560.0,367.14 560.5,367.21 561.0,367.27 561.5,367.32 562.0,367.37 562.5,367.42 563.0,367.47 563.5,367.52 564.0,367.56 564.5,367.59 565.0,367.63 565.5,367.66 566.0,367.69 566.5,367.71 567.0,367.73 567.5,367.75 568.0,367.77 568.5,367.78 569.0,367.79 569.5,367.80 570.0,367.80 570.5,367.80 571.0,367.80 571.5,367.79 572.0,367.78 572.5,367.77 573.0,367.75 573.5,367.73 574.0,367.71 574.5,367.68 575.0,367.65 575.5,367.62 576.0,367.59 576.5,367.55 577.0,367.51 577.5,367.46 578.0,367.41 578.5,367.36 579.0,367.31 579.5,367.25 580.0,367.19 580.5,367.13 581.0,367.06 581.5,367.00 582.0,366.92 582.5,366.85 583.0,366.77 583.5,366.69 584.0,366.61 584.5,366.52 585.0,366.43 585.5,366.34 586.0,366.25 586.5,366.15 587.0,366.05 587.5,365.95 588.0,365.84 588.5,365.73 589.0,365.62 589.5,365.51 590.0,365.39 590.5,365.27 591.0,365.15 591.5,365.03 592.0,364.90 592.5,364.77 593.0,364.64 593.5,364.51 594.0,364.38 594.5,364.24 595.0,364.10 595.5,363.96 596.0,363.81 596.5,363.67 597.0,363.52 597.5,363.37 598.0,363.22 598.5,363.06 599.0,362.91 599.5,362.75 600.0,362.59 600.5,362.43 601.0,362.26 601.5,362.10 602.0,361.93 602.5,361.77 603.0,361.60 603.5,361.43 604.0,361.25 604.5,361.08 605.0,360.90 605.5,360.73 606.0,360.55 606.5,360.37 607.0,360.19 607.5,360.01 608.0,359.83 608.5,359.65 609.0,359.46 609.5,359.28 610.0,359.09 610.5,358.90 611.0,358.72 611.5,358.53 612.0,358.34 612.5,358.15 613.0,357.96 613.5,357.77 614.0,357.58 614.5,357.39 615.0,357.20 615.5,357.01 616.0,356.81 616.5,356.62 617.0,356.43 617.5,356.24 618.0,356.07 618.5,355.90 619.0,355.74 619.5,355.58 620.0,355.41 620.5,355.25 621.0,355.09 621.5,354.92 622.0,354.76 622.5,354.60 623.0,354.44 623.5,354.28 624.0,354.12 624.5,353.96 625.0,353.80 625.5,353.64 626.0,353.48 626.5,353.32 627.0,353.17 627.5,353.01 628.0,352.86 628.5,352.70 629.0,352.55 629.5,352.40 630.0,352.25 630.5,352.10 631.0,351.95 631.5,351.80 632.0,351.65 632.5,351.51 633.0,351.36 633.5,351.22 634.0,351.08 634.5,350.94 635.0,350.80 635.5,350.67 636.0,350.53 636.5,350.40 637.0,350.26 637.5,350.13 638.0,350.01 638.5,349.88 639.0,349.75 639.5,349.63 640.0,349.51 640.5,349.39 641.0,349.27 641.5,349.15 642.0,349.04 642.5,348.93 643.0,348.82 643.5,348.71 644.0,348.60 644.5,348.50 645.0,348.40 645.5,348.30 646.0,348.20 646.5,348.10 647.0,348.01 647.5,347.92 648.0,347.83 648.5,347.74 649.0,347.66 649.5,347.58 650.0,347.50 650.5,347.42 651.0,347.35 651.5,347.27 652.0,347.20 652.5,347.14 653.0,347.07 653.5,347.01 654.0,346.95 654.5,346.89 655.0,346.84 655.5,346.79 656.0,346.74 656.5,346.69 657.0,346.65 657.5,346.60 658.0,346.57 658.5,346.53 659.0,346.50 659.5,346.46 660.0,346.44 660.5,346.41 661.0,346.39 661.5,346.37 662.0,346.35 662.5,346.33 663.0,346.32 663.5,346.31 664.0,346.31 664.5,346.30 665.0,346.30 665.5,346.30 666.0,346.31 666.5,346.31 667.0,346.32 667.5,346.33 668.0,346.35 668.5,346.37 669.0,346.39 669.5,346.41 670.0,346.44 670.5,346.46 671.0,346.50 671.5,346.53 672.0,346.57 672.5,346.60 673.0,346.65 673.5,346.69 674.0,346.74 674.5,346.79 675.0,346.84 675.5,346.89 676.0,346.95 676.5,347.01 677.0,347.07 677.5,347.14 678.0,347.20 678.5,347.27 679.0,347.35 679.5,347.42 680.0,347.50 680.5,347.58 681.0,347.66 681.5,347.74 682.0,347.83 682.5,347.92 683.0,348.01 683.5,348.10 684.0,348.20 684.5,348.30 685.0,348.40 685.5,348.50 686.0,348.60 686.5,348.71 687.0,348.82 687.5,348.93 688.0,349.04 688.5,349.15 689.0,349.27 689.5,349.39 690.0,349.51 690.5,349.63 691.0,349.75 691.5,349.88 692.0,350.01 692.5,350.13 693.0,350.26 693.5,350.40 694.0,350.53 694.5,350.67 695.0,350.80 695.5,350.94 696.0,351.08 696.5,351.22 697.0,351.36 697.5,351.51 698.0,351.65 698.5,351.80 699.0,351.95 699.5,352.10 700.0,352.25 700.5,352.40 701.0,352.55 701.5,352.70 702.0,352.86 702.5,353.01 703.0,353.17 703.5,353.32 704.0,353.48 704.5,353.64 705.0,353.80 705.5,353.96 706.0,354.12 706.5,354.28 707.0,354.44 707.5,354.60 708.0,354.76 708.5,354.92 709.0,355.09 709.5,355.25 710.0,355.41 710.5,355.58 711.0,355.74 711.5,355.90 712.0,356.07 712.5,356.24 713.0,356.43 713.5,356.62 714.0,356.81 714.5,357.01 715.0,357.20 715.5,357.39 716.0,357.58 716.5,357.77 717.0,357.96 717.5,358.15 718.0,358.34 718.5,358.53 719.0,358.72 719.5,358.90 720.0,359.09 720.5,359.28 721.0,359.46 721.5,359.65 722.0,359.83 722.5,360.01 723.0,360.19 723.5,360.37 724.0,360.55 724.5,360.73 725.0,360.90 725.5,361.08 726.0,361.25 726.5,361.43 727.0,361.60 727.5,361.77 728.0,361.93 728.5,362.10 729.0,362.26 729.5,362.43 730.0,362.59 730.5,362.75 731.0,362.91 731.5,363.06 732.0,363.22 732.5,363.37 733.0,363.52 733.5,363.67 734.0,363.81 734.5,363.96 735.0,364.10 735.5,364.24 736.0,364.38 736.5,364.51 737.0,364.64 737.5,364.77 738.0,364.90 738.5,365.03 739.0,365.15 739.5,365.27 740.0,365.39 740.5,365.51 741.0,365.62 741.5,365.73 742.0,365.84 742.5,365.95 743.0,366.05 743.5,366.15 744.0,366.25 744.5,366.34 745.0,366.43 745.5,366.52 746.0,366.61 746.5,366.69 747.0,366.77 747.5,366.85 748.0,366.92 748.5,367.00 749.0,367.06 749.5,367.13 750.0,367.19 750.5,367.25 751.0,367.31 751.5,367.36 752.0,367.41 752.5,367.46 753.0,367.51 753.5,367.55 754.0,367.59 754.5,367.62 755.0,367.65 755.5,367.68 756.0,367.71 756.5,367.73 757.0,367.75 757.5,367.77 758.0,367.78 758.5,367.79 759.0,367.80 759.5,367.80 760.0,367.80 760.5,367.80 761.0,367.79 761.5,367.78 762.0,367.77 762.5,367.75 763.0,367.73 763.5,367.71 764.0,367.69 764.5,367.66 765.0,367.63 765.5,367.59 766.0,367.56 766.5,367.52 767.0,367.47 767.5,367.42 768.0,367.37 768.5,367.32 769.0,367.27 769.5,367.21 770.0,367.14 770.5,367.08 771.0,367.01 771.5,366.94 772.0,366.86 772.5,366.79 773.0,366.71 773.5,366.62 774.0,366.54 774.5,366.45 775.0,366.36 775.5,366.27 776.0,366.17 776.5,366.07 777.0,365.97 777.5,365.86 778.0,365.75 778.5,365.64 779.0,365.53 779.5,365.41 780.0,365.30 780.5,365.18 781.0,365.05 781.5,364.93 782.0,364.80 782.5,364.67 783.0,364.54 783.5,364.40 784.0,364.27 784.5,364.13 785.0,363.98 785.5,363.84 786.0,363.70 786.5,363.55 787.0,363.40 787.5,363.25 788.0,363.09 788.5,362.94 789.0,362.78 789.5,362.62 790.0,362.46 790.5,362.30 791.0,362.13 791.5,361.97 792.0,361.80 792.5,361.63 793.0,361.46 793.5,361.29 794.0,361.11 794.5,360.94 795.0,360.76 795.5,360.59 796.0,360.41 796.5,360.23 797.0,360.05 797.5,359.86 798.0,359.68 798.5,359.50 799.0,359.31 799.5,359.13 800.0,358.94 800.5,358.75 801.0,358.57 801.5,358.38 802.0,358.19 802.5,358.00 803.0,357.81 803.5,357.62 804.0,357.43 804.5,357.24 805.0,357.04 805.5,356.85 806.0,356.66 806.5,356.47 807.0,356.28 807.5,356.10 808.0,355.94 808.5,355.77 809.0,355.61 809.5,355.45 810.0,355.28 810.5,355.12 811.0,354.96 811.5,354.79 812.0,354.63 812.5,354.47 813.0,354.31 813.5,354.15 814.0,353.99 814.5,353.83 815.0,353.67 815.5,353.51 816.0,353.35 816.5,353.20 817.0,353.04 817.5,352.89 818.0,352.73 818.5,352.58 819.0,352.43 819.5,352.28 820.0,352.13 820.5,351.98 821.0,351.83 821.5,351.68 822.0,351.54 822.5,351.39 823.0,351.25 823.5,351.11 824.0,350.97 824.5,350.83 825.0,350.69 825.5,350.56 826.0,350.42 826.5,350.29 827.0,350.16 827.5,350.03 828.0,349.90 828.5,349.78 829.0,349.65 829.5,349.53 830.0,349.41 830.5,349.29 831.0,349.18 831.5,349.06 832.0,348.95 832.5,348.84 833.0,348.73 833.5,348.62 834.0,348.52 834.5,348.42 835.0,348.32 835.5,348.22 836.0,348.12 836.5,348.03 837.0,347.94 837.5,347.85 838.0,347.76 838.5,347.68 839.0,347.59 839.5,347.51 840.0,347.44 840.5,347.36 841.0,347.29 841.5,347.22 842.0,347.15 842.5,347.09 843.0,347.02 843.5,346.96 844.0,346.90 844.5,346.85 845.0,346.80 845.5,346.75 846.0,346.70 846.5,346.65 847.0,346.61 847.5,346.57 848.0,346.54 848.5,346.50 849.0,346.47 849.5,346.44 850.0,346.41 850.5,346.39 851.0,346.37 851.5,346.35 852.0,346.34 852.5,346.32 853.0,346.31 853.5,346.31 854.0,346.30 854.5,346.30 855.0,346.30 855.5,346.30 856.0,346.31 856.5,346.32 857.0,346.33 857.5,346.35 858.0,346.36 858.5,346.38 859.0,346.41 859.5,346.43 860.0,346.46 860.5,346.49 861.0,346.52 861.5,346.56 862.0,346.60 862.5,346.64 863.0,346.68 863.5,346.73 864.0,346.78 864.5,346.83 865.0,346.88 865.5,346.94 866.0,347.00 866.5,347.06 867.0,347.12 867.5,347.19 868.0,347.26 868.5,347.33 869.0,347.41 869.5,347.48 870.0,347.56 870.5,347.64 871.0,347.73 871.5,347.81 872.0,347.90 872.5,347.99 873.0,348.08 873.5,348.18 874.0,348.28 874.5,348.38 875.0,348.48 875.5,348.58 876.0,348.69 876.5,348.79 877.0,348.90 877.5,349.02 878.0,349.13 878.5,349.25 879.0,349.36 879.5,349.48 880.0,349.60 880.5,349.73 881.0,349.85 881.5,349.98 882.0,350.11 882.5,350.24 883.0,350.37 883.5,350.50 884.0,350.64 884.5,350.78 885.0,350.91 885.5,351.05 886.0,351.19 886.5,351.34 887.0,351.48 887.5,351.62 888.0,351.77 888.5,351.92 889.0,352.07 889.5,352.22 890.0,352.37 890.5,352.52 891.0,352.67 891.5,352.82 892.0,352.98 892.5,353.13 893.0,353.29 893.5,353.45 894.0,353.61 894.5,353.76 895.0,353.92 895.5,354.08 896.0,354.24 896.5,354.41 897.0,354.57 897.5,354.73 898.0,354.89 898.5,355.05 899.0,355.22 899.5,355.38 900.0,355.54 900.5,355.71 901.0,355.87 901.5,356.04 902.0,356.20 902.5,356.39 903.0,356.58 903.5,356.78 904.0,356.97 904.5,357.16 905.0,357.35 905.5,357.54 906.0,357.73 906.5,357.92 907.0,358.11 907.5,358.30 908.0,358.49 908.5,358.68 909.0,358.87 909.5,359.05 910.0,359.24 910.5,359.42 911.0,359.61 911.5,359.79 912.0,359.97 912.5,360.16 913.0,360.34 913.5,360.51 914.0,360.69 914.5,360.87 915.0,361.04 915.5,361.22 916.0,361.39 916.5,361.56 917.0,361.73 917.5,361.90 918.0,362.07 918.5,362.23 919.0,362.39 919.5,362.56 920.0,362.72 920.5,362.87 921.0,363.03 921.5,363.19 922.0,363.34 922.5,363.49 923.0,363.64 923.5,363.78 924.0,363.93 924.5,364.07 925.0,364.21 925.5,364.35 926.0,364.48 926.5,364.62 927.0,364.75 927.5,364.88 928.0,365.00 928.5,365.13 929.0,365.25 929.5,365.37 930.0,365.48 930.5,365.60 931.0,365.71 931.5,365.82 932.0,365.92 932.5,366.03 933.0,366.13 933.5,366.23 934.0,366.32 934.5,366.41 935.0,366.50 935.5,366.59 936.0,366.67 936.5,366.76 937.0,366.83 937.5,366.91 938.0,366.98 938.5,367.05 939.0,367.12 939.5,367.18 940.0,367.24 940.5,367.30 941.0,367.35 941.5,367.40 942.0,367.45 942.5,367.50 943.0,367.54 943.5,367.58 944.0,367.61 944.5,367.65 945.0,367.68 945.5,367.70 946.0,367.73 946.5,367.75 947.0,367.76 947.5,367.78 948.0,367.79 948.5,367.79 949.0,367.80 949.5,367.80 950.0,367.80 950.5,367.79 951.0,367.78 951.5,367.77 952.0,367.76 952.5,367.74 953.0,367.72 953.5,367.69 954.0,367.67 954.5,367.63 955.0,367.60 955.5,367.56 956.0,367.52 956.5,367.48 957.0,367.43 957.5,367.38 958.0,367.33 958.5,367.28 959.0,367.22 959.5,367.16 960.0,367.09 960.5,367.02 961.0,366.95 961.5,366.88 962.0,366.80 962.5,366.72 963.0,366.64 963.5,366.56 964.0,366.47 964.5,366.38 965.0,366.28 965.5,366.19 966.0,366.09 966.5,365.99 967.0,365.88 967.5,365.78 968.0,365.67 968.5,365.55 969.0,365.44 969.5,365.32 970.0,365.20 970.5,365.08 971.0,364.95 971.5,364.83 972.0,364.70 972.5,364.56 973.0,364.43 973.5,364.29 974.0,364.15 974.5,364.01 975.0,363.87 975.5,363.72 976.0,363.58 976.5,363.43 977.0,363.28 977.5,363.12 978.0,362.97 978.5,362.81 979.0,362.65 979.5,362.49 980.0,362.33 980.5,362.17 981.0,362.00 981.5,361.83 982.0,361.66 982.5,361.49 983.0,361.32 983.5,361.15 984.0,360.97 984.5,360.80 985.0,360.62 985.5,360.44 986.0,360.26 986.5,360.08 987.0,359.90 987.5,359.72 988.0,359.54 988.5,359.35 989.0,359.17 989.5,358.98 990.0,358.79 990.5,358.60 991.0,358.42 991.5,358.23 992.0,358.04 992.5,357.85 993.0,357.66 993.5,357.47 994.0,357.27 994.5,357.08 995.0,356.89 995.5,356.70 996.0,356.51 996.5,356.32 997.0,356.13" fill="none" stroke="#404040" stroke-width="1.05"/>
<polyline points="48.0,356.79 48.5,356.42 49.0,356.07 49.5,355.73 50.0,355.39 50.5,355.06 51.0,354.72 51.5,354.39 52.0,354.05 52.5,353.72 53.0,353.38 53.5,353.05 54.0,352.72 54.5,352.39 55.0,352.06 55.5,351.73 56.0,351.40 56.5,351.08 57.0,350.75 57.5,350.43 58.0,350.11 58.5,349.79 59.0,349.47 59.5,349.15 60.0,348.84 60.5,348.52 61.0,348.21 61.5,347.91 62.0,347.60 62.5,347.30 63.0,347.00 63.5,346.70 64.0,346.40 64.5,346.11 65.0,345.82 65.5,345.53 66.0,345.25 66.5,344.96 67.0,344.69 67.5,344.41 68.0,344.14 68.5,343.87 69.0,343.60 69.5,343.34 70.0,343.08 70.5,342.83 71.0,342.58 71.5,342.33 72.0,342.09 72.5,341.85 73.0,341.61 73.5,341.38 74.0,341.15 74.5,340.93 75.0,340.71 75.5,340.49 76.0,340.28 76.5,340.07 77.0,339.87 77.5,339.67 78.0,339.48 78.5,339.29 79.0,339.11 79.5,338.93 80.0,338.76 80.5,338.59 81.0,338.42 81.5,338.26 82.0,338.11 82.5,337.96 83.0,337.81 83.5,337.67 84.0,337.54 84.5,337.41 85.0,337.28 85.5,337.16 86.0,337.05 86.5,336.94 87.0,336.84 87.5,336.74 88.0,336.64 88.5,336.56 89.0,336.48 89.5,336.40 90.0,336.33 90.5,336.26 91.0,336.20 91.5,336.15 92.0,336.10 92.5,336.05 93.0,336.01 93.5,335.98 94.0,335.95 94.5,335.93 95.0,335.92 95.5,335.91 96.0,335.90 96.5,335.90 97.0,335.91 97.5,335.92 98.0,335.94 98.5,335.96 99.0,335.99 99.5,336.02 100.0,336.06 100.5,336.11 101.0,336.16 101.5,336.21 102.0,336.27 102.5,336.34 103.0,336.41 103.5,336.49 104.0,336.57 104.5,336.66 105.0,336.76 105.5,336.86 106.0,336.96 106.5,337.07 107.0,337.19 107.5,337.31 108.0,337.43 108.5,337.56 109.0,337.70 109.5,337.84 110.0,337.99 110.5,338.14 111.0,338.29 111.5,338.45 112.0,338.62 112.5,338.79 113.0,338.97 113.5,339.15 114.0,339.33 114.5,339.52 115.0,339.71 115.5,339.91 116.0,340.12 116.5,340.32 117.0,340.53 117.5,340.75 118.0,340.97 118.5,341.20 119.0,341.42 119.5,341.66 120.0,341.89 120.5,342.13 121.0,342.38 121.5,342.63 122.0,342.88 122.5,343.13 123.0,343.39 123.5,343.66 124.0,343.92 124.5,344.19 125.0,344.46 125.5,344.74 126.0,345.02 126.5,345.30 127.0,345.59 127.5,345.88 128.0,346.17 128.5,346.46 129.0,346.76 129.5,347.06 130.0,347.36 130.5,347.66 131.0,347.97 131.5,348.28 132.0,348.59 132.5,348.90 133.0,349.21 133.5,349.53 134.0,349.85 134.5,350.17 135.0,350.49 135.5,350.82 136.0,351.14 136.5,351.47 137.0,351.80 137.5,352.12 138.0,352.45 138.5,352.79 139.0,353.12 139.5,353.45 140.0,353.78 140.5,354.12 141.0,354.45 141.5,354.79 142.0,355.12 142.5,355.46 143.0,355.80 143.5,356.13 144.0,356.49 144.5,356.86 145.0,357.23 145.5,357.60 146.0,357.96 146.5,358.33 147.0,358.70 147.5,359.06 148.0,359.43 148.5,359.79 149.0,360.15 149.5,360.51 150.0,360.87 150.5,361.23 151.0,361.59 151.5,361.95 152.0,362.30 152.5,362.65 153.0,363.00 153.5,363.35 154.0,363.70 154.5,364.05 155.0,364.39 155.5,364.73 156.0,365.07 156.5,365.40 157.0,365.74 157.5,366.07 158.0,366.40 158.5,366.72 159.0,367.04 159.5,367.36 160.0,367.68 160.5,367.99 161.0,368.30 161.5,368.61 162.0,368.91 162.5,369.21 163.0,369.51 163.5,369.80 164.0,370.09 164.5,370.38 165.0,370.66 165.5,370.93 166.0,371.21 166.5,371.48 167.0,371.74 167.5,372.00 168.0,372.26 168.5,372.51 169.0,372.76 169.5,373.00 170.0,373.24 170.5,373.47 171.0,373.70 171.5,373.92 172.0,374.14 172.5,374.36 173.0,374.57 173.5,374.77 174.0,374.97 174.5,375.16 175.0,375.35 175.5,375.54 176.0,375.71 176.5,375.89 177.0,376.05 177.5,376.22 178.0,376.37 178.5,376.52 179.0,376.67 179.5,376.81 180.0,376.94 180.5,377.07 181.0,377.19 181.5,377.31 182.0,377.42 182.5,377.53 183.0,377.62 183.5,377.72 184.0,377.81 184.5,377.89 185.0,377.96 185.5,378.03 186.0,378.10 186.5,378.15 187.0,378.21 187.5,378.25 188.0,378.29 188.5,378.32 189.0,378.35 189.5,378.37 190.0,378.39 190.5,378.40 191.0,378.40 191.5,378.40 192.0,378.39 192.5,378.37 193.0,378.35 193.5,378.32 194.0,378.29 194.5,378.25 195.0,378.21 195.5,378.15 196.0,378.10 196.5,378.03 197.0,377.96 197.5,377.89 198.0,377.81 198.5,377.72 199.0,377.62 199.5,377.53 200.0,377.42 200.5,377.31 201.0,377.19 201.5,377.07 202.0,376.94 202.5,376.81 203.0,376.67 203.5,376.52 204.0,376.37 204.5,376.22 205.0,376.05 205.5,375.89 206.0,375.71 206.5,375.54 207.0,375.35 207.5,375.16 208.0,374.97 208.5,374.77 209.0,374.57 209.5,374.36 210.0,374.14 210.5,373.92 211.0,373.70 211.5,373.47 212.0,373.24 212.5,373.00 213.0,372.76 213.5,372.51 214.0,372.26 214.5,372.00 215.0,371.74 215.5,371.48 216.0,371.21 216.5,370.93 217.0,370.66 217.5,370.38 218.0,370.09 218.5,369.80 219.0,369.51 219.5,369.21 220.0,368.91 220.5,368.61 221.0,368.30 221.5,367.99 222.0,367.68 222.5,367.36 223.0,367.04 223.5,366.72 224.0,366.40 224.5,366.07 225.0,365.74 225.5,365.40 226.0,365.07 226.5,364.73 227.0,364.39 227.5,364.05 228.0,363.70 228.5,363.35 229.0,363.00 229.5,362.65 230.0,362.30 230.5,361.95 231.0,361.59 231.5,361.23 232.0,360.87 232.5,360.51 233.0,360.15 233.5,359.79 234.0,359.43 234.5,359.06 235.0,358.70 235.5,358.33 236.0,357.96 236.5,357.60 237.0,357.23 237.5,356.86 238.0,356.49 238.5,356.13 239.0,355.80 239.5,355.46 240.0,355.12 240.5,354.79 241.0,354.45 241.5,354.12 242.0,353.78 242.5,353.45 243.0,353.12 243.5,352.79 244.0,352.45 244.5,352.12 245.0,351.80 245.5,351.47 246.0,351.14 246.5,350.82 247.0,350.49 247.5,350.17 248.0,349.85 248.5,349.53 249.0,349.21 249.5,348.90 250.0,348.59 250.5,348.28 251.0,347.97 251.5,347.66 252.0,347.36 252.5,347.06 253.0,346.76 253.5,346.46 254.0,346.17 254.5,345.88 255.0,345.59 255.5,345.30 256.0,345.02 256.5,344.74 257.0,344.46 257.5,344.19 258.0,343.92 258.5,343.66 259.0,343.39 259.5,343.13 260.0,342.88 260.5,342.63 261.0,342.38 261.5,342.13 262.0,341.89 262.5,341.66 263.0,341.42 263.5,341.20 264.0,340.97 264.5,340.75 265.0,340.53 265.5,340.32 266.0,340.12 266.5,339.91 267.0,339.71 267.5,339.52 268.0,339.33 268.5,339.15 269.0,338.97 269.5,338.79 270.0,338.62 270.5,338.45 271.0,338.29 271.5,338.14 272.0,337.99 272.5,337.84 273.0,337.70 273.5,337.56 274.0,337.43 274.5,337.31 275.0,337.19 275.5,337.07 276.0,336.96 276.5,336.86 277.0,336.76 277.5,336.66 278.0,336.57 278.5,336.49 279.0,336.41 279.5,336.34 280.0,336.27 280.5,336.21 281.0,336.16 281.5,336.11 282.0,336.06 282.5,336.02 283.0,335.99 283.5,335.96 284.0,335.94 284.5,335.92 285.0,335.91 285.5,335.90 286.0,335.90 286.5,335.91 287.0,335.92 287.5,335.93 288.0,335.95 288.5,335.98 289.0,336.01 289.5,336.05 290.0,336.10 290.5,336.15 291.0,336.20 291.5,336.26 292.0,336.33 292.5,336.40 293.0,336.48 293.5,336.56 294.0,336.64 294.5,336.74 295.0,336.84 295.5,336.94 296.0,337.05 296.5,337.16 297.0,337.28 297.5,337.41 298.0,337.54 298.5,337.67 299.0,337.81 299.5,337.96 300.0,338.11 300.5,338.26 301.0,338.42 301.5,338.59 302.0,338.76 302.5,338.93 303.0,339.11 303.5,339.29 304.0,339.48 304.5,339.67 305.0,339.87 305.5,340.07 306.0,340.28 306.5,340.49 307.0,340.71 307.5,340.93 308.0,341.15 308.5,341.38 309.0,341.61 309.5,341.85 310.0,342.09 310.5,342.33 311.0,342.58 311.5,342.83 312.0,343.08 312.5,343.34 313.0,343.60 313.5,343.87 314.0,344.14 314.5,344.41 315.0,344.69 315.5,344.96 316.0,345.25 316.5,345.53 317.0,345.82 317.5,346.11 318.0,346.40 318.5,346.70 319.0,347.00 319.5,347.30 320.0,347.60 320.5,347.91 321.0,348.21 321.5,348.52 322.0,348.84 322.5,349.15 323.0,349.47 323.5,349.79 324.0,350.11 324.5,350.43 325.0,350.75 325.5,351.08 326.0,351.40 326.5,351.73 327.0,352.06 327.5,352.39 328.0,352.72 328.5,353.05 329.0,353.38 329.5,353.72 330.0,354.05 330.5,354.39 331.0,354.72 331.5,355.06 332.0,355.39 332.5,355.73 333.0,356.07 333.5,356.42 334.0,356.79 334.5,357.16 335.0,357.52 335.5,357.89 336.0,358.26 336.5,358.62 337.0,358.99 337.5,359.35 338.0,359.72 338.5,360.08 339.0,360.44 339.5,360.80 340.0,361.16 340.5,361.52 341.0,361.87 341.5,362.23 342.0,362.58 342.5,362.93 343.0,363.28 343.5,363.63 344.0,363.98 344.5,364.32 345.0,364.66 345.5,365.00 346.0,365.34 346.5,365.67 347.0,366.00 347.5,366.33 348.0,366.66 348.5,366.98 349.0,367.30 349.5,367.62 350.0,367.93 350.5,368.24 351.0,368.55 351.5,368.85 352.0,369.15 352.5,369.45 353.0,369.74 353.5,370.03 354.0,370.32 354.5,370.60 355.0,370.88 355.5,371.15 356.0,371.42 356.5,371.69 357.0,371.95 357.5,372.21 358.0,372.46 358.5,372.71 359.0,372.95 359.5,373.19 360.0,373.42 360.5,373.65 361.0,373.88 361.5,374.10 362.0,374.31 362.5,374.52 363.0,374.73 363.5,374.93 364.0,375.12 364.5,375.31 365.0,375.50 365.5,375.68 366.0,375.85 366.5,376.02 367.0,376.18 367.5,376.34 368.0,376.49 368.5,376.64 369.0,376.78 369.5,376.91 370.0,377.04 370.5,377.17 371.0,377.29 371.5,377.40 372.0,377.50 372.5,377.61 373.0,377.70 373.5,377.79 374.0,377.87 374.5,377.95 375.0,378.02 375.5,378.08 376.0,378.14 376.5,378.20 377.0,378.24 377.5,378.28 378.0,378.32 378.5,378.35 379.0,378.37 379.5,378.39 380.0,378.40 380.5,378.40 381.0,378.40 381.5,378.39 382.0,378.38 382.5,378.36 383.0,378.33 383.5,378.30 384.0,378.26 384.5,378.21 385.0,378.16 385.5,378.11 386.0,378.05 386.5,377.98 387.0,377.90 387.5,377.82 388.0,377.74 388.5,377.64 389.0,377.55 389.5,377.44 390.0,377.33 390.5,377.22 391.0,377.09 391.5,376.97 392.0,376.83 392.5,376.70 393.0,376.55 393.5,376.40 394.0,376.25 394.5,376.09 395.0,375.92 395.5,375.75 396.0,375.57 396.5,375.39 397.0,375.20 397.5,375.01 398.0,374.81 398.5,374.61 399.0,374.40 399.5,374.19 400.0,373.97 400.5,373.75 401.0,373.52 401.5,373.28 402.0,373.05 402.5,372.81 403.0,372.56 403.5,372.31 404.0,372.05 404.5,371.79 405.0,371.53 405.5,371.26 406.0,370.99 406.5,370.71 407.0,370.43 407.5,370.15 408.0,369.86 408.5,369.57 409.0,369.27 409.5,368.97 410.0,368.67 410.5,368.36 411.0,368.06 411.5,367.74 412.0,367.43 412.5,367.11 413.0,366.79 413.5,366.46 414.0,366.13 414.5,365.80 415.0,365.47 415.5,365.14 416.0,364.80 416.5,364.46 417.0,364.11 417.5,363.77 418.0,363.42 418.5,363.07 419.0,362.72 419.5,362.37 420.0,362.02 420.5,361.66 421.0,361.30 421.5,360.95 422.0,360.59 422.5,360.22 423.0,359.86 423.5,359.50 424.0,359.13 424.5,358.77 425.0,358.40 425.5,358.04 426.0,357.67 426.5,357.30 427.0,356.94 427.5,356.57 428.0,356.20 428.5,355.86 429.0,355.53 429.5,355.19 430.0,354.86 430.5,354.52 431.0,354.19 431.5,353.85 432.0,353.52 432.5,353.18 433.0,352.85 433.5,352.52 434.0,352.19 434.5,351.86 435.0,351.53 435.5,351.21 436.0,350.88 436.5,350.56 437.0,350.23 437.5,349.91 438.0,349.60 438.5,349.28 439.0,348.96 439.5,348.65 440.0,348.34 440.5,348.03 441.0,347.72 441.5,347.42 442.0,347.12 442.5,346.82 443.0,346.52 443.5,346.23 444.0,345.93 444.5,345.64 445.0,345.36 445.5,345.08 446.0,344.80 446.5,344.52 447.0,344.25 447.5,343.98 448.0,343.71 448.5,343.45 449.0,343.19 449.5,342.93 450.0,342.68 450.5,342.43 451.0,342.18 451.5,341.94 452.0,341.70 452.5,341.47 453.0,341.24 453.5,341.02 454.0,340.79 454.5,340.58 455.0,340.36 455.5,340.16 456.0,339.95 456.5,339.75 457.0,339.56 457.5,339.37 458.0,339.18 458.5,339.00 459.0,338.82 459.5,338.65 460.0,338.49 460.5,338.32 461.0,338.17 461.5,338.02 462.0,337.87 462.5,337.73 463.0,337.59 463.5,337.46 464.0,337.33 464.5,337.21 465.0,337.09 465.5,336.98 466.0,336.88 466.5,336.78 467.0,336.68 467.5,336.59 468.0,336.51 468.5,336.43 469.0,336.35 469.5,336.29 470.0,336.22 470.5,336.17 471.0,336.12 471.5,336.07 472.0,336.03 472.5,335.99 473.0,335.96 473.5,335.94 474.0,335.92 474.5,335.91 475.0,335.90 475.5,335.90 476.0,335.90 476.5,335.91 477.0,335.93 477.5,335.95 478.0,335.98 478.5,336.01 479.0,336.04 479.5,336.09 480.0,336.14 480.5,336.19 481.0,336.25 481.5,336.31 482.0,336.38 482.5,336.46 483.0,336.54 483.5,336.63 484.0,336.72 484.5,336.82 485.0,336.92 485.5,337.03 486.0,337.14 486.5,337.26 487.0,337.38 487.5,337.51 488.0,337.64 488.5,337.78 489.0,337.93 489.5,338.08 490.0,338.23 490.5,338.39 491.0,338.55 491.5,338.72 492.0,338.89 492.5,339.07 493.0,339.26 493.5,339.44 494.0,339.64 494.5,339.83 495.0,340.03 495.5,340.24 496.0,340.45 496.5,340.66 497.0,340.88 497.5,341.11 498.0,341.33 498.5,341.56 499.0,341.80 499.5,342.04 500.0,342.28 500.5,342.53 501.0,342.78 501.5,343.03 502.0,343.29 502.5,343.55 503.0,343.82 503.5,344.08 504.0,344.36 504.5,344.63 505.0,344.91 505.5,345.19 506.0,345.47 506.5,345.76 507.0,346.05 507.5,346.34 508.0,346.64 508.5,346.94 509.0,347.24 509.5,347.54 510.0,347.85 510.5,348.15 511.0,348.46 511.5,348.77 512.0,349.09 512.5,349.40 513.0,349.72 513.5,350.04 514.0,350.36 514.5,350.69 515.0,351.01 515.5,351.34 516.0,351.66 516.5,351.99 517.0,352.32 517.5,352.65 518.0,352.98 518.5,353.32 519.0,353.65 519.5,353.98 520.0,354.32 520.5,354.65 521.0,354.99 521.5,355.33 522.0,355.66 522.5,356.00 523.0,356.35 523.5,356.71 524.0,357.08 524.5,357.45 525.0,357.82 525.5,358.18 526.0,358.55 526.5,358.92 527.0,359.28 527.5,359.64 528.0,360.01 528.5,360.37 529.0,360.73 529.5,361.09 530.0,361.45 530.5,361.80 531.0,362.16 531.5,362.51 532.0,362.86 532.5,363.21 533.0,363.56 533.5,363.91 534.0,364.25 534.5,364.59 535.0,364.93 535.5,365.27 536.0,365.60 536.5,365.94 537.0,366.27 537.5,366.59 538.0,366.92 538.5,367.24 539.0,367.55 539.5,367.87 540.0,368.18 540.5,368.49 541.0,368.79 541.5,369.09 542.0,369.39 542.5,369.69 543.0,369.98 543.5,370.26 544.0,370.54 544.5,370.82 545.0,371.10 545.5,371.37 546.0,371.64 546.5,371.90 547.0,372.16 547.5,372.41 548.0,372.66 548.5,372.90 549.0,373.14 549.5,373.38 550.0,373.61 550.5,373.83 551.0,374.06 551.5,374.27 552.0,374.48 552.5,374.69 553.0,374.89 553.5,375.09 554.0,375.28 554.5,375.46 555.0,375.64 555.5,375.82 556.0,375.99 556.5,376.15 557.0,376.31 557.5,376.46 558.0,376.61 558.5,376.75 559.0,376.89 559.5,377.02 560.0,377.14 560.5,377.26 561.0,377.38 561.5,377.48 562.0,377.59 562.5,377.68 563.0,377.77 563.5,377.86 564.0,377.93 564.5,378.01 565.0,378.07 565.5,378.13 566.0,378.19 566.5,378.23 567.0,378.28 567.5,378.31 568.0,378.34 568.5,378.36 569.0,378.38 569.5,378.39 570.0,378.40 570.5,378.40 571.0,378.39 571.5,378.38 572.0,378.36 572.5,378.34 573.0,378.30 573.5,378.27 574.0,378.22 574.5,378.17 575.0,378.12 575.5,378.06 576.0,377.99 576.5,377.92 577.0,377.84 577.5,377.75 578.0,377.66 578.5,377.57 579.0,377.46 579.5,377.35 580.0,377.24 580.5,377.12 581.0,376.99 581.5,376.86 582.0,376.72 582.5,376.58 583.0,376.43 583.5,376.28 584.0,376.12 584.5,375.95 585.0,375.78 585.5,375.61 586.0,375.43 586.5,375.24 587.0,375.05 587.5,374.85 588.0,374.65 588.5,374.44 589.0,374.23 589.5,374.01 590.0,373.79 590.5,373.56 591.0,373.33 591.5,373.10 592.0,372.85 592.5,372.61 593.0,372.36 593.5,372.10 594.0,371.85 594.5,371.58 595.0,371.32 595.5,371.04 596.0,370.77 596.5,370.49 597.0,370.21 597.5,369.92 598.0,369.63 598.5,369.33 599.0,369.03 599.5,368.73 600.0,368.43 600.5,368.12 601.0,367.81 601.5,367.49 602.0,367.17 602.5,366.85 603.0,366.53 603.5,366.20 604.0,365.87 604.5,365.54 605.0,365.20 605.5,364.87 606.0,364.53 606.5,364.18 607.0,363.84 607.5,363.49 608.0,363.14 608.5,362.79 609.0,362.44 609.5,362.09 610.0,361.73 610.5,361.38 611.0,361.02 611.5,360.66 612.0,360.30 612.5,359.93 613.0,359.57 613.5,359.21 614.0,358.84 614.5,358.48 615.0,358.11 615.5,357.74 616.0,357.38 616.5,357.01 617.0,356.64 617.5,356.27 618.0,355.93 618.5,355.59 619.0,355.26 619.5,354.92 620.0,354.59 620.5,354.25 621.0,353.92 621.5,353.58 622.0,353.25 622.5,352.92 623.0,352.59 623.5,352.26 624.0,351.93 624.5,351.60 625.0,351.27 625.5,350.95 626.0,350.62 626.5,350.30 627.0,349.98 627.5,349.66 628.0,349.34 628.5,349.03 629.0,348.71 629.5,348.40 630.0,348.09 630.5,347.78 631.0,347.48 631.5,347.18 632.0,346.88 632.5,346.58 633.0,346.28 633.5,345.99 634.0,345.70 634.5,345.42 635.0,345.13 635.5,344.85 636.0,344.57 636.5,344.30 637.0,344.03 637.5,343.76 638.0,343.50 638.5,343.24 639.0,342.98 639.5,342.73 640.0,342.48 640.5,342.23 641.0,341.99 641.5,341.75 642.0,341.52 642.5,341.29 643.0,341.06 643.5,340.84 644.0,340.62 644.5,340.41 645.0,340.20 645.5,339.99 646.0,339.79 646.5,339.60 647.0,339.41 647.5,339.22 648.0,339.04 648.5,338.86 649.0,338.69 649.5,338.52 650.0,338.36 650.5,338.20 651.0,338.05 651.5,337.90 652.0,337.75 652.5,337.62 653.0,337.48 653.5,337.36 654.0,337.23 654.5,337.12 655.0,337.00 655.5,336.90 656.0,336.80 656.5,336.70 657.0,336.61 657.5,336.52 658.0,336.44 658.5,336.37 659.0,336.30 659.5,336.24 660.0,336.18 660.5,336.13 661.0,336.08 661.5,336.04 662.0,336.00 662.5,335.97 663.0,335.94 663.5,335.93 664.0,335.91 664.5,335.90 665.0,335.90 665.5,335.90 666.0,335.91 666.5,335.93 667.0,335.94 667.5,335.97 668.0,336.00 668.5,336.04 669.0,336.08 669.5,336.13 670.0,336.18 670.5,336.24 671.0,336.30 671.5,336.37 672.0,336.44 672.5,336.52 673.0,336.61 673.5,336.70 674.0,336.80 674.5,336.90 675.0,337.00 675.5,337.12 676.0,337.23 676.5,337.36 677.0,337.48 677.5,337.62 678.0,337.75 678.5,337.90 679.0,338.05 679.5,338.20 680.0,338.36 680.5,338.52 681.0,338.69 681.5,338.86 682.0,339.04 682.5,339.22 683.0,339.41 683.5,339.60 684.0,339.79 684.5,339.99 685.0,340.20 685.5,340.41 686.0,340.62 686.5,340.84 687.0,341.06 687.5,341.29 688.0,341.52 688.5,341.75 689.0,341.99 689.5,342.23 690.0,342.48 690.5,342.73 691.0,342.98 691.5,343.24 692.0,343.50 692.5,343.76 693.0,344.03 693.5,344.30 694.0,344.57 694.5,344.85 695.0,345.13 695.5,345.42 696.0,345.70 696.5,345.99 697.0,346.28 697.5,346.58 698.0,346.88 698.5,347.18 699.0,347.48 699.5,347.78 700.0,348.09 700.5,348.40 701.0,348.71 701.5,349.03 702.0,349.34 702.5,349.66 703.0,349.98 703.5,350.30 704.0,350.62 704.5,350.95 705.0,351.27 705.5,351.60 706.0,351.93 706.5,352.26 707.0,352.59 707.5,352.92 708.0,353.25 708.5,353.58 709.0,353.92 709.5,354.25 710.0,354.59 710.5,354.92 711.0,355.26 711.5,355.59 712.0,355.93 712.5,356.27 713.0,356.64 713.5,357.01 714.0,357.38 714.5,357.74 715.0,358.11 715.5,358.48 716.0,358.84 716.5,359.21 717.0,359.57 717.5,359.93 718.0,360.30 718.5,360.66 719.0,361.02 719.5,361.38 720.0,361.73 720.5,362.09 721.0,362.44 721.5,362.79 722.0,363.14 722.5,363.49 723.0,363.84 723.5,364.18 724.0,364.53 724.5,364.87 725.0,365.20 725.5,365.54 726.0,365.87 726.5,366.20 727.0,366.53 727.5,366.85 728.0,367.17 728.5,367.49 729.0,367.81 729.5,368.12 730.0,368.43 730.5,368.73 731.0,369.03 731.5,369.33 732.0,369.63 732.5,369.92 733.0,370.21 733.5,370.49 734.0,370.77 734.5,371.04 735.0,371.32 735.5,371.58 736.0,371.85 736.5,372.10 737.0,372.36 737.5,372.61 738.0,372.85 738.5,373.10 739.0,373.33 739.5,373.56 740.0,373.79 740.5,374.01 741.0,374.23 741.5,374.44 742.0,374.65 742.5,374.85 743.0,375.05 743.5,375.24 744.0,375.43 744.5,375.61 745.0,375.78 745.5,375.95 746.0,376.12 746.5,376.28 747.0,376.43 747.5,376.58 748.0,376.72 748.5,376.86 749.0,376.99 749.5,377.12 750.0,377.24 750.5,377.35 751.0,377.46 751.5,377.57 752.0,377.66 752.5,377.75 753.0,377.84 753.5,377.92 754.0,377.99 754.5,378.06 755.0,378.12 755.5,378.17 756.0,378.22 756.5,378.27 757.0,378.30 757.5,378.34 758.0,378.36 758.5,378.38 759.0,378.39 759.5,378.40 760.0,378.40 760.5,378.39 761.0,378.38 761.5,378.36 762.0,378.34 762.5,378.31 763.0,378.28 763.5,378.23 764.0,378.19 764.5,378.13 765.0,378.07 765.5,378.01 766.0,377.93 766.5,377.86 767.0,377.77 767.5,377.68 768.0,377.59 768.5,377.48 769.0,377.38 769.5,377.26 770.0,377.14 770.5,377.02 771.0,376.89 771.5,376.75 772.0,376.61 772.5,376.46 773.0,376.31 773.5,376.15 774.0,375.99 774.5,375.82 775.0,375.64 775.5,375.46 776.0,375.28 776.5,375.09 777.0,374.89 777.5,374.69 778.0,374.48 778.5,374.27 779.0,374.06 779.5,373.83 780.0,373.61 780.5,373.38 781.0,373.14 781.5,372.90 782.0,372.66 782.5,372.41 783.0,372.16 783.5,371.90 784.0,371.64 784.5,371.37 785.0,371.10 785.5,370.82 786.0,370.54 786.5,370.26 787.0,369.98 787.5,369.69 788.0,369.39 788.5,369.09 789.0,368.79 789.5,368.49 790.0,368.18 790.5,367.87 791.0,367.55 791.5,367.24 792.0,366.92 792.5,366.59 793.0,366.27 793.5,365.94 794.0,365.60 794.5,365.27 795.0,364.93 795.5,364.59 796.0,364.25 796.5,363.91 797.0,363.56 797.5,363.21 798.0,362.86 798.5,362.51 799.0,362.16 799.5,361.80 800.0,361.45 800.5,361.09 801.0,360.73 801.5,360.37 802.0,360.01 802.5,359.64 803.0,359.28 803.5,358.92 804.0,358.55 804.5,358.18 805.0,357.82 805.5,357.45 806.0,357.08 806.5,356.71 807.0,356.35 807.5,356.00 808.0,355.66 808.5,355.33 809.0,354.99 809.5,354.65 810.0,354.32 810.5,353.98 811.0,353.65 811.5,353.32 812.0,352.98 812.5,352.65 813.0,352.32 813.5,351.99 814.0,351.66 814.5,351.34 815.0,351.01 815.5,350.69 816.0,350.36 816.5,350.04 817.0,349.72 817.5,349.40 818.0,349.09 818.5,348.77 819.0,348.46 819.5,348.15 820.0,347.85 820.5,347.54 821.0,347.24 821.5,346.94 822.0,346.64 822.5,346.34 823.0,346.05 823.5,345.76 824.0,345.47 824.5,345.19 825.0,344.91 825.5,344.63 826.0,344.36 826.5,344.08 827.0,343.82 827.5,343.55 828.0,343.29 828.5,343.03 829.0,342.78 829.5,342.53 830.0,342.28 830.5,342.04 831.0,341.80 831.5,341.56 832.0,341.33 832.5,341.11 833.0,340.88 833.5,340.66 834.0,340.45 834.5,340.24 835.0,340.03 835.5,339.83 836.0,339.64 836.5,339.44 837.0,339.26 837.5,339.07 838.0,338.89 838.5,338.72 839.0,338.55 839.5,338.39 840.0,338.23 840.5,338.08 841.0,337.93 841.5,337.78 842.0,337.64 842.5,337.51 843.0,337.38 843.5,337.26 844.0,337.14 844.5,337.03 845.0,336.92 845.5,336.82 846.0,336.72 846.5,336.63 847.0,336.54 847.5,336.46 848.0,336.38 848.5,336.31 849.0,336.25 849.5,336.19 850.0,336.14 850.5,336.09 851.0,336.04 851.5,336.01 852.0,335.98 852.5,335.95 853.0,335.93 853.5,335.91 854.0,335.90 854.5,335.90 855.0,335.90 855.5,335.91 856.0,335.92 856.5,335.94 857.0,335.96 857.5,335.99 858.0,336.03 858.5,336.07 859.0,336.12 859.5,336.17 860.0,336.22 860.5,336.29 861.0,336.35 861.5,336.43 862.0,336.51 862.5,336.59 863.0,336.68 863.5,336.78 864.0,336.88 864.5,336.98 865.0,337.09 865.5,337.21 866.0,337.33 866.5,337.46 867.0,337.59 867.5,337.73 868.0,337.87 868.5,338.02 869.0,338.17 869.5,338.32 870.0,338.49 870.5,338.65 871.0,338.82 871.5,339.00 872.0,339.18 872.5,339.37 873.0,339.56 873.5,339.75 874.0,339.95 874.5,340.16 875.0,340.36 875.5,340.58 876.0,340.79 876.5,341.02 877.0,341.24 877.5,341.47 878.0,341.70 878.5,341.94 879.0,342.18 879.5,342.43 880.0,342.68 880.5,342.93 881.0,343.19 881.5,343.45 882.0,343.71 882.5,343.98 883.0,344.25 883.5,344.52 884.0,344.80 884.5,345.08 885.0,345.36 885.5,345.64 886.0,345.93 886.5,346.23 887.0,346.52 887.5,346.82 888.0,347.12 888.5,347.42 889.0,347.72 889.5,348.03 890.0,348.34 890.5,348.65 891.0,348.96 891.5,349.28 892.0,349.60 892.5,349.91 893.0,350.23 893.5,350.56 894.0,350.88 894.5,351.21 895.0,351.53 895.5,351.86 896.0,352.19 896.5,352.52 897.0,352.85 897.5,353.18 898.0,353.52 898.5,353.85 899.0,354.19 899.5,354.52 900.0,354.86 900.5,355.19 901.0,355.53 901.5,355.86 902.0,356.20 902.5,356.57 903.0,356.94 903.5,357.30 904.0,357.67 904.5,358.04 905.0,358.40 905.5,358.77 906.0,359.13 906.5,359.50 907.0,359.86 907.5,360.22 908.0,360.59 908.5,360.95 909.0,361.30 909.5,361.66 910.0,362.02 910.5,362.37 911.0,362.72 911.5,363.07 912.0,363.42 912.5,363.77 913.0,364.11 913.5,364.46 914.0,364.80 914.5,365.14 915.0,365.47 915.5,365.80 916.0,366.13 916.5,366.46 917.0,366.79 917.5,367.11 918.0,367.43 918.5,367.74 919.0,368.06 919.5,368.36 920.0,368.67 920.5,368.97 921.0,369.27 921.5,369.57 922.0,369.86 922.5,370.15 923.0,370.43 923.5,370.71 924.0,370.99 924.5,371.26 925.0,371.53 925.5,371.79 926.0,372.05 926.5,372.31 927.0,372.56 927.5,372.81 928.0,373.05 928.5,373.28 929.0,373.52 929.5,373.75 930.0,373.97 930.5,374.19 931.0,374.40 931.5,374.61 932.0,374.81 932.5,375.01 933.0,375.20 933.5,375.39 934.0,375.57 934.5,375.75 935.0,375.92 935.5,376.09 936.0,376.25 936.5,376.40 937.0,376.55 937.5,376.70 938.0,376.83 938.5,376.97 939.0,377.09 939.5,377.22 940.0,377.33 940.5,377.44 941.0,377.55 941.5,377.64 942.0,377.74 942.5,377.82 943.0,377.90 943.5,377.98 944.0,378.05 944.5,378.11 945.0,378.16 945.5,378.21 946.0,378.26 946.5,378.30 947.0,378.33 947.5,378.36 948.0,378.38 948.5,378.39 949.0,378.40 949.5,378.40 950.0,378.40 950.5,378.39 951.0,378.37 951.5,378.35 952.0,378.32 952.5,378.28 953.0,378.24 953.5,378.20 954.0,378.14 954.5,378.08 955.0,378.02 955.5,377.95 956.0,377.87 956.5,377.79 957.0,377.70 957.5,377.61 958.0,377.50 958.5,377.40 959.0,377.29 959.5,377.17 960.0,377.04 960.5,376.91 961.0,376.78 961.5,376.64 962.0,376.49 962.5,376.34 963.0,376.18 963.5,376.02 964.0,375.85 964.5,375.68 965.0,375.50 965.5,375.31 966.0,375.12 966.5,374.93 967.0,374.73 967.5,374.52 968.0,374.31 968.5,374.10 969.0,373.88 969.5,373.65 970.0,373.42 970.5,373.19 971.0,372.95 971.5,372.71 972.0,372.46 972.5,372.21 973.0,371.95 973.5,371.69 974.0,371.42 974.5,371.15 975.0,370.88 975.5,370.60 976.0,370.32 976.5,370.03 977.0,369.74 977.5,369.45 978.0,369.15 978.5,368.85 979.0,368.55 979.5,368.24 980.0,367.93 980.5,367.62 981.0,367.30 981.5,366.98 982.0,366.66 982.5,366.33 983.0,366.00 983.5,365.67 984.0,365.34 984.5,365.00 985.0,364.66 985.5,364.32 986.0,363.98 986.5,363.63 987.0,363.28 987.5,362.93 988.0,362.58 988.5,362.23 989.0,361.87 989.5,361.52 990.0,361.16 990.5,360.80 991.0,360.44 991.5,360.08 992.0,359.72 992.5,359.35 993.0,358.99 993.5,358.62 994.0,358.26 994.5,357.89 995.0,357.52 995.5,357.16 996.0,356.79 996.5,356.42 997.0,356.07" fill="none" stroke="#30b030" stroke-width="1.05"/>
<polyline points="48.0,357.04 48.5,356.52 49.0,356.00 49.5,355.51 50.0,355.02 50.5,354.52 51.0,354.03 51.5,353.54 52.0,353.05 52.5,352.56 53.0,352.07 53.5,351.58 54.0,351.09 54.5,350.60 55.0,350.12 55.5,349.64 56.0,349.16 56.5,348.68 57.0,348.20 57.5,347.73 58.0,347.25 58.5,346.78 59.0,346.32 59.5,345.85 60.0,345.39 60.5,344.93 61.0,344.48 61.5,344.03 62.0,343.58 62.5,343.13 63.0,342.69 63.5,342.25 64.0,341.82 64.5,341.39 65.0,340.96 65.5,340.54 66.0,340.12 66.5,339.71 67.0,339.30 67.5,338.89 68.0,338.49 68.5,338.10 69.0,337.71 69.5,337.32 70.0,336.94 70.5,336.57 71.0,336.20 71.5,335.84 72.0,335.48 72.5,335.13 73.0,334.78 73.5,334.44 74.0,334.11 74.5,333.78 75.0,333.46 75.5,333.14 76.0,332.83 76.5,332.53 77.0,332.23 77.5,331.94 78.0,331.66 78.5,331.38 79.0,331.11 79.5,330.85 80.0,330.59 80.5,330.34 81.0,330.10 81.5,329.87 82.0,329.64 82.5,329.42 83.0,329.21 83.5,329.00 84.0,328.80 84.5,328.61 85.0,328.43 85.5,328.25 86.0,328.09 86.5,327.93 87.0,327.77 87.5,327.63 88.0,327.49 88.5,327.36 89.0,327.24 89.5,327.13 90.0,327.03 90.5,326.93 91.0,326.84 91.5,326.76 92.0,326.69 92.5,326.62 93.0,326.57 93.5,326.52 94.0,326.48 94.5,326.45 95.0,326.42 95.5,326.41 96.0,326.40 96.5,326.40 97.0,326.41 97.5,326.43 98.0,326.45 98.5,326.49 99.0,326.53 99.5,326.58 100.0,326.64 100.5,326.70 101.0,326.78 101.5,326.86 102.0,326.95 102.5,327.05 103.0,327.15 103.5,327.27 104.0,327.39 104.5,327.52 105.0,327.66 105.5,327.80 106.0,327.96 106.5,328.12 107.0,328.29 107.5,328.47 108.0,328.65 108.5,328.84 109.0,329.04 109.5,329.25 110.0,329.46 110.5,329.68 111.0,329.91 111.5,330.15 112.0,330.39 112.5,330.64 113.0,330.90 113.5,331.16 114.0,331.44 114.5,331.71 115.0,332.00 115.5,332.29 116.0,332.59 116.5,332.89 117.0,333.20 117.5,333.52 118.0,333.84 118.5,334.17 119.0,334.51 119.5,334.85 120.0,335.20 120.5,335.55 121.0,335.91 121.5,336.27 122.0,336.64 122.5,337.02 123.0,337.40 123.5,337.79 124.0,338.18 124.5,338.57 125.0,338.97 125.5,339.38 126.0,339.79 126.5,340.20 127.0,340.62 127.5,341.04 128.0,341.47 128.5,341.90 129.0,342.34 129.5,342.78 130.0,343.22 130.5,343.67 131.0,344.12 131.5,344.57 132.0,345.02 132.5,345.48 133.0,345.95 133.5,346.41 134.0,346.88 134.5,347.35 135.0,347.82 135.5,348.30 136.0,348.77 136.5,349.25 137.0,349.73 137.5,350.22 138.0,350.70 138.5,351.19 139.0,351.67 139.5,352.16 140.0,352.65 140.5,353.14 141.0,353.64 141.5,354.13 142.0,354.62 142.5,355.11 143.0,355.61 143.5,356.10 144.0,356.62 144.5,357.15 145.0,357.67 145.5,358.19 146.0,358.72 146.5,359.24 147.0,359.76 147.5,360.29 148.0,360.81 148.5,361.32 149.0,361.84 149.5,362.36 150.0,362.87 150.5,363.39 151.0,363.90 151.5,364.40 152.0,364.91 152.5,365.41 153.0,365.92 153.5,366.41 154.0,366.91 154.5,367.40 155.0,367.89 155.5,368.38 156.0,368.86 156.5,369.34 157.0,369.82 157.5,370.29 158.0,370.76 158.5,371.22 159.0,371.68 159.5,372.14 160.0,372.59 160.5,373.04 161.0,373.48 161.5,373.92 162.0,374.35 162.5,374.78 163.0,375.20 163.5,375.62 164.0,376.03 164.5,376.44 165.0,376.84 165.5,377.24 166.0,377.63 166.5,378.01 167.0,378.39 167.5,378.76 168.0,379.13 168.5,379.49 169.0,379.84 169.5,380.19 170.0,380.53 170.5,380.86 171.0,381.19 171.5,381.51 172.0,381.82 172.5,382.13 173.0,382.43 173.5,382.72 174.0,383.00 174.5,383.28 175.0,383.55 175.5,383.81 176.0,384.06 176.5,384.31 177.0,384.55 177.5,384.78 178.0,385.00 178.5,385.22 179.0,385.43 179.5,385.63 180.0,385.82 180.5,386.00 181.0,386.18 181.5,386.34 182.0,386.50 182.5,386.65 183.0,386.79 183.5,386.93 184.0,387.05 184.5,387.17 185.0,387.28 185.5,387.37 186.0,387.47 186.5,387.55 187.0,387.62 187.5,387.69 188.0,387.74 188.5,387.79 189.0,387.83 189.5,387.86 190.0,387.88 190.5,387.90 191.0,387.90 191.5,387.90 192.0,387.88 192.5,387.86 193.0,387.83 193.5,387.79 194.0,387.74 194.5,387.69 195.0,387.62 195.5,387.55 196.0,387.47 196.5,387.37 197.0,387.28 197.5,387.17 198.0,387.05 198.5,386.93 199.0,386.79 199.5,386.65 200.0,386.50 200.5,386.34 201.0,386.18 201.5,386.00 202.0,385.82 202.5,385.63 203.0,385.43 203.5,385.22 204.0,385.00 204.5,384.78 205.0,384.55 205.5,384.31 206.0,384.06 206.5,383.81 207.0,383.55 207.5,383.28 208.0,383.00 208.5,382.72 209.0,382.43 209.5,382.13 210.0,381.82 210.5,381.51 211.0,381.19 211.5,380.86 212.0,380.53 212.5,380.19 213.0,379.84 213.5,379.49 214.0,379.13 214.5,378.76 215.0,378.39 215.5,378.01 216.0,377.63 216.5,377.24 217.0,376.84 217.5,376.44 218.0,376.03 218.5,375.62 219.0,375.20 219.5,374.78 220.0,374.35 220.5,373.92 221.0,373.48 221.5,373.04 222.0,372.59 222.5,372.14 223.0,371.68 223.5,371.22 224.0,370.76 224.5,370.29 225.0,369.82 225.5,369.34 226.0,368.86 226.5,368.38 227.0,367.89 227.5,367.40 228.0,366.91 228.5,366.41 229.0,365.92 229.5,365.41 230.0,364.91 230.5,364.40 231.0,363.90 231.5,363.39 232.0,362.87 232.5,362.36 233.0,361.84 233.5,361.32 234.0,360.81 234.5,360.29 235.0,359.76 235.5,359.24 236.0,358.72 236.5,358.19 237.0,357.67 237.5,357.15 238.0,356.62 238.5,356.10 239.0,355.61 239.5,355.11 240.0,354.62 240.5,354.13 241.0,353.64 241.5,353.14 242.0,352.65 242.5,352.16 243.0,351.67 243.5,351.19 244.0,350.70 244.5,350.22 245.0,349.73 245.5,349.25 246.0,348.77 246.5,348.30 247.0,347.82 247.5,347.35 248.0,346.88 248.5,346.41 249.0,345.95 249.5,345.48 250.0,345.02 250.5,344.57 251.0,344.12 251.5,343.67 252.0,343.22 252.5,342.78 253.0,342.34 253.5,341.90 254.0,341.47 254.5,341.04 255.0,340.62 255.5,340.20 256.0,339.79 256.5,339.38 257.0,338.97 257.5,338.57 258.0,338.18 258.5,337.79 259.0,337.40 259.5,337.02 260.0,336.64 260.5,336.27 261.0,335.91 261.5,335.55 262.0,335.20 262.5,334.85 263.0,334.51 263.5,334.17 264.0,333.84 264.5,333.52 265.0,333.20 265.5,332.89 266.0,332.59 266.5,332.29 267.0,332.00 267.5,331.71 268.0,331.44 268.5,331.16 269.0,330.90 269.5,330.64 270.0,330.39 270.5,330.15 271.0,329.91 271.5,329.68 272.0,329.46 272.5,329.25 273.0,329.04 273.5,328.84 274.0,328.65 274.5,328.47 275.0,328.29 275.5,328.12 276.0,327.96 276.5,327.80 277.0,327.66 277.5,327.52 278.0,327.39 278.5,327.27 279.0,327.15 279.5,327.05 280.0,326.95 280.5,326.86 281.0,326.78 281.5,326.70 282.0,326.64 282.5,326.58 283.0,326.53 283.5,326.49 284.0,326.45 284.5,326.43 285.0,326.41 285.5,326.40 286.0,326.40 286.5,326.41 287.0,326.42 287.5,326.45 288.0,326.48 288.5,326.52 289.0,326.57 289.5,326.62 290.0,326.69 290.5,326.76 291.0,326.84 291.5,326.93 292.0,327.03 292.5,327.13 293.0,327.24 293.5,327.36 294.0,327.49 294.5,327.63 295.0,327.77 295.5,327.93 296.0,328.09 296.5,328.25 297.0,328.43 297.5,328.61 298.0,328.80 298.5,329.00 299.0,329.21 299.5,329.42 300.0,329.64 300.5,329.87 301.0,330.10 301.5,330.34 302.0,330.59 302.5,330.85 303.0,331.11 303.5,331.38 304.0,331.66 304.5,331.94 305.0,332.23 305.5,332.53 306.0,332.83 306.5,333.14 307.0,333.46 307.5,333.78 308.0,334.11 308.5,334.44 309.0,334.78 309.5,335.13 310.0,335.48 310.5,335.84 311.0,336.20 311.5,336.57 312.0,336.94 312.5,337.32 313.0,337.71 313.5,338.10 314.0,338.49 314.5,338.89 315.0,339.30 315.5,339.71 316.0,340.12 316.5,340.54 317.0,340.96 317.5,341.39 318.0,341.82 318.5,342.25 319.0,342.69 319.5,343.13 320.0,343.58 320.5,344.03 321.0,344.48 321.5,344.93 322.0,345.39 322.5,345.85 323.0,346.32 323.5,346.78 324.0,347.25 324.5,347.73 325.0,348.20 325.5,348.68 326.0,349.16 326.5,349.64 327.0,350.12 327.5,350.60 328.0,351.09 328.5,351.58 329.0,352.07 329.5,352.56 330.0,353.05 330.5,353.54 331.0,354.03 331.5,354.52 332.0,355.02 332.5,355.51 333.0,356.00 333.5,356.52 334.0,357.04 334.5,357.57 335.0,358.09 335.5,358.61 336.0,359.14 336.5,359.66 337.0,360.18 337.5,360.70 338.0,361.22 338.5,361.74 339.0,362.26 339.5,362.77 340.0,363.28 340.5,363.79 341.0,364.30 341.5,364.81 342.0,365.31 342.5,365.82 343.0,366.31 343.5,366.81 344.0,367.30 344.5,367.80 345.0,368.28 345.5,368.77 346.0,369.25 346.5,369.72 347.0,370.20 347.5,370.67 348.0,371.13 348.5,371.59 349.0,372.05 349.5,372.50 350.0,372.95 350.5,373.39 351.0,373.83 351.5,374.27 352.0,374.70 352.5,375.12 353.0,375.54 353.5,375.95 354.0,376.36 354.5,376.76 355.0,377.16 355.5,377.55 356.0,377.94 356.5,378.32 357.0,378.69 357.5,379.06 358.0,379.42 358.5,379.77 359.0,380.12 359.5,380.46 360.0,380.80 360.5,381.12 361.0,381.44 361.5,381.76 362.0,382.07 362.5,382.37 363.0,382.66 363.5,382.94 364.0,383.22 364.5,383.49 365.0,383.76 365.5,384.01 366.0,384.26 366.5,384.50 367.0,384.73 367.5,384.96 368.0,385.18 368.5,385.39 369.0,385.59 369.5,385.78 370.0,385.96 370.5,386.14 371.0,386.31 371.5,386.47 372.0,386.62 372.5,386.76 373.0,386.90 373.5,387.03 374.0,387.14 374.5,387.25 375.0,387.36 375.5,387.45 376.0,387.53 376.5,387.61 377.0,387.67 377.5,387.73 378.0,387.78 378.5,387.82 379.0,387.86 379.5,387.88 380.0,387.89 380.5,387.90 381.0,387.90 381.5,387.89 382.0,387.87 382.5,387.84 383.0,387.80 383.5,387.75 384.0,387.70 384.5,387.64 385.0,387.56 385.5,387.48 386.0,387.39 386.5,387.30 387.0,387.19 387.5,387.07 388.0,386.95 388.5,386.82 389.0,386.68 389.5,386.53 390.0,386.37 390.5,386.21 391.0,386.04 391.5,385.85 392.0,385.66 392.5,385.47 393.0,385.26 393.5,385.05 394.0,384.83 394.5,384.60 395.0,384.36 395.5,384.11 396.0,383.86 396.5,383.60 397.0,383.33 397.5,383.06 398.0,382.77 398.5,382.48 399.0,382.19 399.5,381.88 400.0,381.57 400.5,381.25 401.0,380.93 401.5,380.60 402.0,380.26 402.5,379.91 403.0,379.56 403.5,379.20 404.0,378.84 404.5,378.47 405.0,378.09 405.5,377.71 406.0,377.32 406.5,376.92 407.0,376.52 407.5,376.12 408.0,375.71 408.5,375.29 409.0,374.87 409.5,374.44 410.0,374.01 410.5,373.57 411.0,373.13 411.5,372.68 412.0,372.23 412.5,371.78 413.0,371.32 413.5,370.85 414.0,370.39 414.5,369.91 415.0,369.44 415.5,368.96 416.0,368.48 416.5,367.99 417.0,367.50 417.5,367.01 418.0,366.51 418.5,366.02 419.0,365.52 419.5,365.01 420.0,364.51 420.5,364.00 421.0,363.49 421.5,362.98 422.0,362.46 422.5,361.95 423.0,361.43 423.5,360.91 424.0,360.39 424.5,359.87 425.0,359.35 425.5,358.82 426.0,358.30 426.5,357.78 427.0,357.25 427.5,356.73 428.0,356.20 428.5,355.71 429.0,355.21 429.5,354.72 430.0,354.23 430.5,353.73 431.0,353.24 431.5,352.75 432.0,352.26 432.5,351.77 433.0,351.28 433.5,350.80 434.0,350.31 434.5,349.83 435.0,349.35 435.5,348.87 436.0,348.39 436.5,347.92 437.0,347.44 437.5,346.97 438.0,346.50 438.5,346.04 439.0,345.58 439.5,345.12 440.0,344.66 440.5,344.21 441.0,343.76 441.5,343.31 442.0,342.87 442.5,342.43 443.0,341.99 443.5,341.56 444.0,341.13 444.5,340.71 445.0,340.29 445.5,339.87 446.0,339.46 446.5,339.05 447.0,338.65 447.5,338.26 448.0,337.86 448.5,337.48 449.0,337.10 449.5,336.72 450.0,336.35 450.5,335.98 451.0,335.62 451.5,335.27 452.0,334.92 452.5,334.58 453.0,334.24 453.5,333.91 454.0,333.58 454.5,333.27 455.0,332.95 455.5,332.65 456.0,332.35 456.5,332.06 457.0,331.77 457.5,331.49 458.0,331.22 458.5,330.95 459.0,330.69 459.5,330.44 460.0,330.20 460.5,329.96 461.0,329.73 461.5,329.51 462.0,329.29 462.5,329.08 463.0,328.88 463.5,328.69 464.0,328.50 464.5,328.32 465.0,328.15 465.5,327.99 466.0,327.83 466.5,327.69 467.0,327.55 467.5,327.42 468.0,327.29 468.5,327.18 469.0,327.07 469.5,326.97 470.0,326.88 470.5,326.79 471.0,326.72 471.5,326.65 472.0,326.59 472.5,326.54 473.0,326.49 473.5,326.46 474.0,326.43 474.5,326.41 475.0,326.40 475.5,326.40 476.0,326.41 476.5,326.42 477.0,326.44 477.5,326.47 478.0,326.51 478.5,326.56 479.0,326.61 479.5,326.67 480.0,326.75 480.5,326.82 481.0,326.91 481.5,327.01 482.0,327.11 482.5,327.22 483.0,327.34 483.5,327.47 484.0,327.60 484.5,327.74 485.0,327.90 485.5,328.05 486.0,328.22 486.5,328.39 487.0,328.57 487.5,328.76 488.0,328.96 488.5,329.16 489.0,329.38 489.5,329.59 490.0,329.82 490.5,330.05 491.0,330.29 491.5,330.54 492.0,330.80 492.5,331.06 493.0,331.33 493.5,331.60 494.0,331.88 494.5,332.17 495.0,332.47 495.5,332.77 496.0,333.08 496.5,333.39 497.0,333.71 497.5,334.04 498.0,334.37 498.5,334.71 499.0,335.06 499.5,335.41 500.0,335.77 500.5,336.13 501.0,336.50 501.5,336.87 502.0,337.25 502.5,337.63 503.0,338.02 503.5,338.41 504.0,338.81 504.5,339.22 505.0,339.62 505.5,340.04 506.0,340.45 506.5,340.87 507.0,341.30 507.5,341.73 508.0,342.16 508.5,342.60 509.0,343.04 509.5,343.49 510.0,343.94 510.5,344.39 511.0,344.84 511.5,345.30 512.0,345.76 512.5,346.22 513.0,346.69 513.5,347.16 514.0,347.63 514.5,348.11 515.0,348.58 515.5,349.06 516.0,349.54 516.5,350.02 517.0,350.51 517.5,350.99 518.0,351.48 518.5,351.97 519.0,352.46 519.5,352.95 520.0,353.44 520.5,353.93 521.0,354.42 521.5,354.92 522.0,355.41 522.5,355.90 523.0,356.41 523.5,356.94 524.0,357.46 524.5,357.98 525.0,358.51 525.5,359.03 526.0,359.56 526.5,360.08 527.0,360.60 527.5,361.12 528.0,361.64 528.5,362.15 529.0,362.67 529.5,363.18 530.0,363.69 530.5,364.20 531.0,364.71 531.5,365.21 532.0,365.72 532.5,366.22 533.0,366.71 533.5,367.21 534.0,367.70 534.5,368.19 535.0,368.67 535.5,369.15 536.0,369.63 536.5,370.10 537.0,370.57 537.5,371.04 538.0,371.50 538.5,371.96 539.0,372.41 539.5,372.86 540.0,373.31 540.5,373.75 541.0,374.18 541.5,374.61 542.0,375.04 542.5,375.46 543.0,375.87 543.5,376.28 544.0,376.68 544.5,377.08 545.0,377.47 545.5,377.86 546.0,378.24 546.5,378.62 547.0,378.98 547.5,379.35 548.0,379.70 548.5,380.05 549.0,380.39 549.5,380.73 550.0,381.06 550.5,381.38 551.0,381.70 551.5,382.01 552.0,382.31 552.5,382.60 553.0,382.89 553.5,383.17 554.0,383.44 554.5,383.71 555.0,383.96 555.5,384.21 556.0,384.45 556.5,384.69 557.0,384.92 557.5,385.13 558.0,385.34 558.5,385.55 559.0,385.74 559.5,385.93 560.0,386.11 560.5,386.28 561.0,386.44 561.5,386.59 562.0,386.74 562.5,386.87 563.0,387.00 563.5,387.12 564.0,387.23 564.5,387.34 565.0,387.43 565.5,387.52 566.0,387.59 566.5,387.66 567.0,387.72 567.5,387.77 568.0,387.82 568.5,387.85 569.0,387.87 569.5,387.89 570.0,387.90 570.5,387.90 571.0,387.89 571.5,387.87 572.0,387.84 572.5,387.81 573.0,387.76 573.5,387.71 574.0,387.65 574.5,387.58 575.0,387.50 575.5,387.41 576.0,387.32 576.5,387.21 577.0,387.10 577.5,386.98 578.0,386.85 578.5,386.71 579.0,386.56 579.5,386.41 580.0,386.24 580.5,386.07 581.0,385.89 581.5,385.70 582.0,385.51 582.5,385.30 583.0,385.09 583.5,384.87 584.0,384.64 584.5,384.41 585.0,384.16 585.5,383.91 586.0,383.65 586.5,383.39 587.0,383.11 587.5,382.83 588.0,382.54 588.5,382.25 589.0,381.94 589.5,381.63 590.0,381.32 590.5,380.99 591.0,380.66 591.5,380.33 592.0,379.98 592.5,379.63 593.0,379.27 593.5,378.91 594.0,378.54 594.5,378.17 595.0,377.78 595.5,377.40 596.0,377.00 596.5,376.60 597.0,376.20 597.5,375.79 598.0,375.37 598.5,374.95 599.0,374.53 599.5,374.09 600.0,373.66 600.5,373.22 601.0,372.77 601.5,372.32 602.0,371.87 602.5,371.41 603.0,370.95 603.5,370.48 604.0,370.01 604.5,369.53 605.0,369.06 605.5,368.57 606.0,368.09 606.5,367.60 607.0,367.11 607.5,366.61 608.0,366.12 608.5,365.62 609.0,365.11 609.5,364.61 610.0,364.10 610.5,363.59 611.0,363.08 611.5,362.56 612.0,362.05 612.5,361.53 613.0,361.01 613.5,360.49 614.0,359.97 614.5,359.45 615.0,358.93 615.5,358.40 616.0,357.88 616.5,357.36 617.0,356.83 617.5,356.31 618.0,355.80 618.5,355.31 619.0,354.82 619.5,354.32 620.0,353.83 620.5,353.34 621.0,352.85 621.5,352.36 622.0,351.87 622.5,351.38 623.0,350.90 623.5,350.41 624.0,349.93 624.5,349.45 625.0,348.97 625.5,348.49 626.0,348.01 626.5,347.54 627.0,347.07 627.5,346.60 628.0,346.13 628.5,345.67 629.0,345.21 629.5,344.75 630.0,344.30 630.5,343.85 631.0,343.40 631.5,342.95 632.0,342.51 632.5,342.08 633.0,341.64 633.5,341.21 634.0,340.79 634.5,340.37 635.0,339.95 635.5,339.54 636.0,339.13 636.5,338.73 637.0,338.33 637.5,337.94 638.0,337.55 638.5,337.17 639.0,336.79 639.5,336.42 640.0,336.06 640.5,335.69 641.0,335.34 641.5,334.99 642.0,334.65 642.5,334.31 643.0,333.98 643.5,333.65 644.0,333.33 644.5,333.02 645.0,332.71 645.5,332.41 646.0,332.11 646.5,331.83 647.0,331.55 647.5,331.27 648.0,331.01 648.5,330.74 649.0,330.49 649.5,330.25 650.0,330.01 650.5,329.77 651.0,329.55 651.5,329.33 652.0,329.12 652.5,328.92 653.0,328.73 653.5,328.54 654.0,328.36 654.5,328.19 655.0,328.02 655.5,327.86 656.0,327.72 656.5,327.57 657.0,327.44 657.5,327.32 658.0,327.20 658.5,327.09 659.0,326.99 659.5,326.89 660.0,326.81 660.5,326.73 661.0,326.66 661.5,326.60 662.0,326.55 662.5,326.50 663.0,326.47 663.5,326.44 664.0,326.42 664.5,326.40 665.0,326.40 665.5,326.40 666.0,326.42 666.5,326.44 667.0,326.47 667.5,326.50 668.0,326.55 668.5,326.60 669.0,326.66 669.5,326.73 670.0,326.81 670.5,326.89 671.0,326.99 671.5,327.09 672.0,327.20 672.5,327.32 673.0,327.44 673.5,327.57 674.0,327.72 674.5,327.86 675.0,328.02 675.5,328.19 676.0,328.36 676.5,328.54 677.0,328.73 677.5,328.92 678.0,329.12 678.5,329.33 679.0,329.55 679.5,329.77 680.0,330.01 680.5,330.25 681.0,330.49 681.5,330.74 682.0,331.01 682.5,331.27 683.0,331.55 683.5,331.83 684.0,332.11 684.5,332.41 685.0,332.71 685.5,333.02 686.0,333.33 686.5,333.65 687.0,333.98 687.5,334.31 688.0,334.65 688.5,334.99 689.0,335.34 689.5,335.69 690.0,336.06 690.5,336.42 691.0,336.79 691.5,337.17 692.0,337.55 692.5,337.94 693.0,338.33 693.5,338.73 694.0,339.13 694.5,339.54 695.0,339.95 695.5,340.37 696.0,340.79 696.5,341.21 697.0,341.64 697.5,342.08 698.0,342.51 698.5,342.95 699.0,343.40 699.5,343.85 700.0,344.30 700.5,344.75 701.0,345.21 701.5,345.67 702.0,346.13 702.5,346.60 703.0,347.07 703.5,347.54 704.0,348.01 704.5,348.49 705.0,348.97 705.5,349.45 706.0,349.93 706.5,350.41 707.0,350.90 707.5,351.38 708.0,351.87 708.5,352.36 709.0,352.85 709.5,353.34 710.0,353.83 710.5,354.32 711.0,354.82 711.5,355.31 712.0,355.80 712.5,356.31 713.0,356.83 713.5,357.36 714.0,357.88 714.5,358.40 715.0,358.93 715.5,359.45 716.0,359.97 716.5,360.49 717.0,361.01 717.5,361.53 718.0,362.05 718.5,362.56 719.0,363.08 719.5,363.59 720.0,364.10 720.5,364.61 721.0,365.11 721.5,365.62 722.0,366.12 722.5,366.61 723.0,367.11 723.5,367.60 724.0,368.09 724.5,368.57 725.0,369.06 725.5,369.53 726.0,370.01 726.5,370.48 727.0,370.95 727.5,371.41 728.0,371.87 728.5,372.32 729.0,372.77 729.5,373.22 730.0,373.66 730.5,374.09 731.0,374.53 731.5,374.95 732.0,375.37 732.5,375.79 733.0,376.20 733.5,376.60 734.0,377.00 734.5,377.40 735.0,377.78 735.5,378.17 736.0,378.54 736.5,378.91 737.0,379.27 737.5,379.63 738.0,379.98 738.5,380.33 739.0,380.66 739.5,380.99 740.0,381.32 740.5,381.63 741.0,381.94 741.5,382.25 742.0,382.54 742.5,382.83 743.0,383.11 743.5,383.39 744.0,383.65 744.5,383.91 745.0,384.16 745.5,384.41 746.0,384.64 746.5,384.87 747.0,385.09 747.5,385.30 748.0,385.51 748.5,385.70 749.0,385.89 749.5,386.07 750.0,386.24 750.5,386.41 751.0,386.56 751.5,386.71 752.0,386.85 752.5,386.98 753.0,387.10 753.5,387.21 754.0,387.32 754.5,387.41 755.0,387.50 755.5,387.58 756.0,387.65 756.5,387.71 757.0,387.76 757.5,387.81 758.0,387.84 758.5,387.87 759.0,387.89 759.5,387.90 760.0,387.90 760.5,387.89 761.0,387.87 761.5,387.85 762.0,387.82 762.5,387.77 763.0,387.72 763.5,387.66 764.0,387.59 764.5,387.52 765.0,387.43 765.5,387.34 766.0,387.23 766.5,387.12 767.0,387.00 767.5,386.87 768.0,386.74 768.5,386.59 769.0,386.44 769.5,386.28 770.0,386.11 770.5,385.93 771.0,385.74 771.5,385.55 772.0,385.34 772.5,385.13 773.0,384.92 773.5,384.69 774.0,384.45 774.5,384.21 775.0,383.96 775.5,383.71 776.0,383.44 776.5,383.17 777.0,382.89 777.5,382.60 778.0,382.31 778.5,382.01 779.0,381.70 779.5,381.38 780.0,381.06 780.5,380.73 781.0,380.39 781.5,380.05 782.0,379.70 782.5,379.35 783.0,378.98 783.5,378.62 784.0,378.24 784.5,377.86 785.0,377.47 785.5,377.08 786.0,376.68 786.5,376.28 787.0,375.87 787.5,375.46 788.0,375.04 788.5,374.61 789.0,374.18 789.5,373.75 790.0,373.31 790.5,372.86 791.0,372.41 791.5,371.96 792.0,371.50 792.5,371.04 793.0,370.57 793.5,370.10 794.0,369.63 794.5,369.15 795.0,368.67 795.5,368.19 796.0,367.70 796.5,367.21 797.0,366.71 797.5,366.22 798.0,365.72 798.5,365.21 799.0,364.71 799.5,364.20 800.0,363.69 800.5,363.18 801.0,362.67 801.5,362.15 802.0,361.64 802.5,361.12 803.0,360.60 803.5,360.08 804.0,359.56 804.5,359.03 805.0,358.51 805.5,357.98 806.0,357.46 806.5,356.94 807.0,356.41 807.5,355.90 808.0,355.41 808.5,354.92 809.0,354.42 809.5,353.93 810.0,353.44 810.5,352.95 811.0,352.46 811.5,351.97 812.0,351.48 812.5,350.99 813.0,350.51 813.5,350.02 814.0,349.54 814.5,349.06 815.0,348.58 815.5,348.11 816.0,347.63 816.5,347.16 817.0,346.69 817.5,346.22 818.0,345.76 818.5,345.30 819.0,344.84 819.5,344.39 820.0,343.94 820.5,343.49 821.0,343.04 821.5,342.60 822.0,342.16 822.5,341.73 823.0,341.30 823.5,340.87 824.0,340.45 824.5,340.04 825.0,339.62 825.5,339.22 826.0,338.81 826.5,338.41 827.0,338.02 827.5,337.63 828.0,337.25 828.5,336.87 829.0,336.50 829.5,336.13 830.0,335.77 830.5,335.41 831.0,335.06 831.5,334.71 832.0,334.37 832.5,334.04 833.0,333.71 833.5,333.39 834.0,333.08 834.5,332.77 835.0,332.47 835.5,332.17 836.0,331.88 836.5,331.60 837.0,331.33 837.5,331.06 838.0,330.80 838.5,330.54 839.0,330.29 839.5,330.05 840.0,329.82 840.5,329.59 841.0,329.38 841.5,329.16 842.0,328.96 842.5,328.76 843.0,328.57 843.5,328.39 844.0,328.22 844.5,328.05 845.0,327.90 845.5,327.74 846.0,327.60 846.5,327.47 847.0,327.34 847.5,327.22 848.0,327.11 848.5,327.01 849.0,326.91 849.5,326.82 850.0,326.75 850.5,326.67 851.0,326.61 851.5,326.56 852.0,326.51 852.5,326.47 853.0,326.44 853.5,326.42 854.0,326.41 854.5,326.40 855.0,326.40 855.5,326.41 856.0,326.43 856.5,326.46 857.0,326.49 857.5,326.54 858.0,326.59 858.5,326.65 859.0,326.72 859.5,326.79 860.0,326.88 860.5,326.97 861.0,327.07 861.5,327.18 862.0,327.29 862.5,327.42 863.0,327.55 863.5,327.69 864.0,327.83 864.5,327.99 865.0,328.15 865.5,328.32 866.0,328.50 866.5,328.69 867.0,328.88 867.5,329.08 868.0,329.29 868.5,329.51 869.0,329.73 869.5,329.96 870.0,330.20 870.5,330.44 871.0,330.69 871.5,330.95 872.0,331.22 872.5,331.49 873.0,331.77 873.5,332.06 874.0,332.35 874.5,332.65 875.0,332.95 875.5,333.27 876.0,333.58 876.5,333.91 877.0,334.24 877.5,334.58 878.0,334.92 878.5,335.27 879.0,335.62 879.5,335.98 880.0,336.35 880.5,336.72 881.0,337.10 881.5,337.48 882.0,337.86 882.5,338.26 883.0,338.65 883.5,339.05 884.0,339.46 884.5,339.87 885.0,340.29 885.5,340.71 886.0,341.13 886.5,341.56 887.0,341.99 887.5,342.43 888.0,342.87 888.5,343.31 889.0,343.76 889.5,344.21 890.0,344.66 890.5,345.12 891.0,345.58 891.5,346.04 892.0,346.50 892.5,346.97 893.0,347.44 893.5,347.92 894.0,348.39 894.5,348.87 895.0,349.35 895.5,349.83 896.0,350.31 896.5,350.80 897.0,351.28 897.5,351.77 898.0,352.26 898.5,352.75 899.0,353.24 899.5,353.73 900.0,354.23 900.5,354.72 901.0,355.21 901.5,355.71 902.0,356.20 902.5,356.73 903.0,357.25 903.5,357.78 904.0,358.30 904.5,358.82 905.0,359.35 905.5,359.87 906.0,360.39 906.5,360.91 907.0,361.43 907.5,361.95 908.0,362.46 908.5,362.98 909.0,363.49 909.5,364.00 910.0,364.51 910.5,365.01 911.0,365.52 911.5,366.02 912.0,366.51 912.5,367.01 913.0,367.50 913.5,367.99 914.0,368.48 914.5,368.96 915.0,369.44 915.5,369.91 916.0,370.39 916.5,370.85 917.0,371.32 917.5,371.78 918.0,372.23 918.5,372.68 919.0,373.13 919.5,373.57 920.0,374.01 920.5,374.44 921.0,374.87 921.5,375.29 922.0,375.71 922.5,376.12 923.0,376.52 923.5,376.92 924.0,377.32 924.5,377.71 925.0,378.09 925.5,378.47 926.0,378.84 926.5,379.20 927.0,379.56 927.5,379.91 928.0,380.26 928.5,380.60 929.0,380.93 929.5,381.25 930.0,381.57 930.5,381.88 931.0,382.19 931.5,382.48 932.0,382.77 932.5,383.06 933.0,383.33 933.5,383.60 934.0,383.86 934.5,384.11 935.0,384.36 935.5,384.60 936.0,384.83 936.5,385.05 937.0,385.26 937.5,385.47 938.0,385.66 938.5,385.85 939.0,386.04 939.5,386.21 940.0,386.37 940.5,386.53 941.0,386.68 941.5,386.82 942.0,386.95 942.5,387.07 943.0,387.19 943.5,387.30 944.0,387.39 944.5,387.48 945.0,387.56 945.5,387.64 946.0,387.70 946.5,387.75 947.0,387.80 947.5,387.84 948.0,387.87 948.5,387.89 949.0,387.90 949.5,387.90 950.0,387.89 950.5,387.88 951.0,387.86 951.5,387.82 952.0,387.78 952.5,387.73 953.0,387.67 953.5,387.61 954.0,387.53 954.5,387.45 955.0,387.36 955.5,387.25 956.0,387.14 956.5,387.03 957.0,386.90 957.5,386.76 958.0,386.62 958.5,386.47 959.0,386.31 959.5,386.14 960.0,385.96 960.5,385.78 961.0,385.59 961.5,385.39 962.0,385.18 962.5,384.96 963.0,384.73 963.5,384.50 964.0,384.26 964.5,384.01 965.0,383.76 965.5,383.49 966.0,383.22 966.5,382.94 967.0,382.66 967.5,382.37 968.0,382.07 968.5,381.76 969.0,381.44 969.5,381.12 970.0,380.80 970.5,380.46 971.0,380.12 971.5,379.77 972.0,379.42 972.5,379.06 973.0,378.69 973.5,378.32 974.0,377.94 974.5,377.55 975.0,377.16 975.5,376.76 976.0,376.36 976.5,375.95 977.0,375.54 977.5,375.12 978.0,374.70 978.5,374.27 979.0,373.83 979.5,373.39 980.0,372.95 980.5,372.50 981.0,372.05 981.5,371.59 982.0,371.13 982.5,370.67 983.0,370.20 983.5,369.72 984.0,369.25 984.5,368.77 985.0,368.28 985.5,367.80 986.0,367.30 986.5,366.81 987.0,366.31 987.5,365.82 988.0,365.31 988.5,364.81 989.0,364.30 989.5,363.79 990.0,363.28 990.5,362.77 991.0,362.26 991.5,361.74 992.0,361.22 992.5,360.70 993.0,360.18 993.5,359.66 994.0,359.14 994.5,358.61 995.0,358.09 995.5,357.57 996.0,357.04 996.5,356.52 997.0,356.00" fill="none" stroke="#b83838" stroke-width="1.05"/>
<polyline points="48.0,357.28 48.5,356.61 49.0,355.94 49.5,355.29 50.0,354.65 50.5,354.00 51.0,353.35 51.5,352.71 52.0,352.06 52.5,351.42 53.0,350.78 53.5,350.13 54.0,349.50 54.5,348.86 55.0,348.22 55.5,347.59 56.0,346.96 56.5,346.33 57.0,345.71 57.5,345.08 58.0,344.46 58.5,343.85 59.0,343.23 59.5,342.62 60.0,342.02 60.5,341.42 61.0,340.82 61.5,340.23 62.0,339.64 62.5,339.05 63.0,338.47 63.5,337.90 64.0,337.33 64.5,336.76 65.0,336.20 65.5,335.65 66.0,335.10 66.5,334.56 67.0,334.02 67.5,333.49 68.0,332.97 68.5,332.45 69.0,331.94 69.5,331.43 70.0,330.93 70.5,330.44 71.0,329.96 71.5,329.48 72.0,329.01 72.5,328.55 73.0,328.10 73.5,327.65 74.0,327.21 74.5,326.78 75.0,326.36 75.5,325.94 76.0,325.54 76.5,325.14 77.0,324.75 77.5,324.37 78.0,324.00 78.5,323.64 79.0,323.28 79.5,322.94 80.0,322.60 80.5,322.27 81.0,321.96 81.5,321.65 82.0,321.35 82.5,321.06 83.0,320.78 83.5,320.51 84.0,320.25 84.5,320.00 85.0,319.76 85.5,319.53 86.0,319.31 86.5,319.10 87.0,318.90 87.5,318.71 88.0,318.53 88.5,318.37 89.0,318.21 89.5,318.06 90.0,317.92 90.5,317.80 91.0,317.68 91.5,317.57 92.0,317.48 92.5,317.39 93.0,317.32 93.5,317.26 94.0,317.20 94.5,317.16 95.0,317.13 95.5,317.11 96.0,317.10 96.5,317.10 97.0,317.11 97.5,317.14 98.0,317.17 98.5,317.21 99.0,317.27 99.5,317.33 100.0,317.41 100.5,317.50 101.0,317.59 101.5,317.70 102.0,317.82 102.5,317.95 103.0,318.09 103.5,318.24 104.0,318.40 104.5,318.57 105.0,318.75 105.5,318.94 106.0,319.14 106.5,319.36 107.0,319.58 107.5,319.81 108.0,320.05 108.5,320.30 109.0,320.57 109.5,320.84 110.0,321.12 110.5,321.41 111.0,321.71 111.5,322.02 112.0,322.34 112.5,322.67 113.0,323.00 113.5,323.35 114.0,323.71 114.5,324.07 115.0,324.45 115.5,324.83 116.0,325.22 116.5,325.62 117.0,326.03 117.5,326.44 118.0,326.87 118.5,327.30 119.0,327.74 119.5,328.19 120.0,328.64 120.5,329.11 121.0,329.58 121.5,330.06 122.0,330.54 122.5,331.03 123.0,331.53 123.5,332.04 124.0,332.55 124.5,333.07 125.0,333.60 125.5,334.13 126.0,334.67 126.5,335.21 127.0,335.76 127.5,336.31 128.0,336.87 128.5,337.44 129.0,338.01 129.5,338.59 130.0,339.17 130.5,339.75 131.0,340.34 131.5,340.94 132.0,341.54 132.5,342.14 133.0,342.75 133.5,343.36 134.0,343.97 134.5,344.59 135.0,345.21 135.5,345.83 136.0,346.46 136.5,347.08 137.0,347.72 137.5,348.35 138.0,348.99 138.5,349.62 139.0,350.26 139.5,350.90 140.0,351.55 140.5,352.19 141.0,352.84 141.5,353.48 142.0,354.13 142.5,354.78 143.0,355.42 143.5,356.07 144.0,356.74 144.5,357.42 145.0,358.09 145.5,358.77 146.0,359.44 146.5,360.11 147.0,360.79 147.5,361.46 148.0,362.13 148.5,362.80 149.0,363.46 149.5,364.13 150.0,364.79 150.5,365.45 151.0,366.11 151.5,366.76 152.0,367.41 152.5,368.06 153.0,368.70 153.5,369.35 154.0,369.98 154.5,370.62 155.0,371.25 155.5,371.88 156.0,372.50 156.5,373.12 157.0,373.73 157.5,374.34 158.0,374.94 158.5,375.54 159.0,376.13 159.5,376.72 160.0,377.30 160.5,377.87 161.0,378.44 161.5,379.01 162.0,379.56 162.5,380.12 163.0,380.66 163.5,381.20 164.0,381.73 164.5,382.25 165.0,382.77 165.5,383.28 166.0,383.78 166.5,384.28 167.0,384.76 167.5,385.24 168.0,385.71 168.5,386.17 169.0,386.63 169.5,387.07 170.0,387.51 170.5,387.94 171.0,388.36 171.5,388.77 172.0,389.18 172.5,389.57 173.0,389.95 173.5,390.33 174.0,390.69 174.5,391.05 175.0,391.40 175.5,391.73 176.0,392.06 176.5,392.38 177.0,392.69 177.5,392.98 178.0,393.27 178.5,393.55 179.0,393.82 179.5,394.07 180.0,394.32 180.5,394.55 181.0,394.78 181.5,394.99 182.0,395.20 182.5,395.39 183.0,395.57 183.5,395.75 184.0,395.91 184.5,396.06 185.0,396.20 185.5,396.32 186.0,396.44 186.5,396.55 187.0,396.64 187.5,396.73 188.0,396.80 188.5,396.86 189.0,396.91 189.5,396.95 190.0,396.98 190.5,396.99 191.0,397.00 191.5,396.99 192.0,396.98 192.5,396.95 193.0,396.91 193.5,396.86 194.0,396.80 194.5,396.73 195.0,396.64 195.5,396.55 196.0,396.44 196.5,396.32 197.0,396.20 197.5,396.06 198.0,395.91 198.5,395.75 199.0,395.57 199.5,395.39 200.0,395.20 200.5,394.99 201.0,394.78 201.5,394.55 202.0,394.32 202.5,394.07 203.0,393.82 203.5,393.55 204.0,393.27 204.5,392.98 205.0,392.69 205.5,392.38 206.0,392.06 206.5,391.73 207.0,391.40 207.5,391.05 208.0,390.69 208.5,390.33 209.0,389.95 209.5,389.57 210.0,389.18 210.5,388.77 211.0,388.36 211.5,387.94 212.0,387.51 212.5,387.07 213.0,386.63 213.5,386.17 214.0,385.71 214.5,385.24 215.0,384.76 215.5,384.28 216.0,383.78 216.5,383.28 217.0,382.77 217.5,382.25 218.0,381.73 218.5,381.20 219.0,380.66 219.5,380.12 220.0,379.56 220.5,379.01 221.0,378.44 221.5,377.87 222.0,377.30 222.5,376.72 223.0,376.13 223.5,375.54 224.0,374.94 224.5,374.34 225.0,373.73 225.5,373.12 226.0,372.50 226.5,371.88 227.0,371.25 227.5,370.62 228.0,369.98 228.5,369.35 229.0,368.70 229.5,368.06 230.0,367.41 230.5,366.76 231.0,366.11 231.5,365.45 232.0,364.79 232.5,364.13 233.0,363.46 233.5,362.80 234.0,362.13 234.5,361.46 235.0,360.79 235.5,360.11 236.0,359.44 236.5,358.77 237.0,358.09 237.5,357.42 238.0,356.74 238.5,356.07 239.0,355.42 239.5,354.78 240.0,354.13 240.5,353.48 241.0,352.84 241.5,352.19 242.0,351.55 242.5,350.90 243.0,350.26 243.5,349.62 244.0,348.99 244.5,348.35 245.0,347.72 245.5,347.08 246.0,346.46 246.5,345.83 247.0,345.21 247.5,344.59 248.0,343.97 248.5,343.36 249.0,342.75 249.5,342.14 250.0,341.54 250.5,340.94 251.0,340.34 251.5,339.75 252.0,339.17 252.5,338.59 253.0,338.01 253.5,337.44 254.0,336.87 254.5,336.31 255.0,335.76 255.5,335.21 256.0,334.67 256.5,334.13 257.0,333.60 257.5,333.07 258.0,332.55 258.5,332.04 259.0,331.53 259.5,331.03 260.0,330.54 260.5,330.06 261.0,329.58 261.5,329.11 262.0,328.64 262.5,328.19 263.0,327.74 263.5,327.30 264.0,326.87 264.5,326.44 265.0,326.03 265.5,325.62 266.0,325.22 266.5,324.83 267.0,324.45 267.5,324.07 268.0,323.71 268.5,323.35 269.0,323.00 269.5,322.67 270.0,322.34 270.5,322.02 271.0,321.71 271.5,321.41 272.0,321.12 272.5,320.84 273.0,320.57 273.5,320.30 274.0,320.05 274.5,319.81 275.0,319.58 275.5,319.36 276.0,319.14 276.5,318.94 277.0,318.75 277.5,318.57 278.0,318.40 278.5,318.24 279.0,318.09 279.5,317.95 280.0,317.82 280.5,317.70 281.0,317.59 281.5,317.50 282.0,317.41 282.5,317.33 283.0,317.27 283.5,317.21 284.0,317.17 284.5,317.14 285.0,317.11 285.5,317.10 286.0,317.10 286.5,317.11 287.0,317.13 287.5,317.16 288.0,317.20 288.5,317.26 289.0,317.32 289.5,317.39 290.0,317.48 290.5,317.57 291.0,317.68 291.5,317.80 292.0,317.92 292.5,318.06 293.0,318.21 293.5,318.37 294.0,318.53 294.5,318.71 295.0,318.90 295.5,319.10 296.0,319.31 296.5,319.53 297.0,319.76 297.5,320.00 298.0,320.25 298.5,320.51 299.0,320.78 299.5,321.06 300.0,321.35 300.5,321.65 301.0,321.96 301.5,322.27 302.0,322.60 302.5,322.94 303.0,323.28 303.5,323.64 304.0,324.00 304.5,324.37 305.0,324.75 305.5,325.14 306.0,325.54 306.5,325.94 307.0,326.36 307.5,326.78 308.0,327.21 308.5,327.65 309.0,328.10 309.5,328.55 310.0,329.01 310.5,329.48 311.0,329.96 311.5,330.44 312.0,330.93 312.5,331.43 313.0,331.94 313.5,332.45 314.0,332.97 314.5,333.49 315.0,334.02 315.5,334.56 316.0,335.10 316.5,335.65 317.0,336.20 317.5,336.76 318.0,337.33 318.5,337.90 319.0,338.47 319.5,339.05 320.0,339.64 320.5,340.23 321.0,340.82 321.5,341.42 322.0,342.02 322.5,342.62 323.0,343.23 323.5,343.85 324.0,344.46 324.5,345.08 325.0,345.71 325.5,346.33 326.0,346.96 326.5,347.59 327.0,348.22 327.5,348.86 328.0,349.50 328.5,350.13 329.0,350.78 329.5,351.42 330.0,352.06 330.5,352.71 331.0,353.35 331.5,354.00 332.0,354.65 332.5,355.29 333.0,355.94 333.5,356.61 334.0,357.28 334.5,357.96 335.0,358.63 335.5,359.31 336.0,359.98 336.5,360.65 337.0,361.32 337.5,361.99 338.0,362.66 338.5,363.33 339.0,363.99 339.5,364.66 340.0,365.32 340.5,365.97 341.0,366.63 341.5,367.28 342.0,367.93 342.5,368.58 343.0,369.22 343.5,369.86 344.0,370.49 344.5,371.12 345.0,371.75 345.5,372.37 346.0,372.99 346.5,373.61 347.0,374.22 347.5,374.82 348.0,375.42 348.5,376.01 349.0,376.60 349.5,377.18 350.0,377.76 350.5,378.33 351.0,378.90 351.5,379.45 352.0,380.01 352.5,380.55 353.0,381.09 353.5,381.62 354.0,382.15 354.5,382.67 355.0,383.18 355.5,383.68 356.0,384.18 356.5,384.67 357.0,385.15 357.5,385.62 358.0,386.08 358.5,386.54 359.0,386.99 359.5,387.43 360.0,387.86 360.5,388.28 361.0,388.69 361.5,389.10 362.0,389.49 362.5,389.88 363.0,390.25 363.5,390.62 364.0,390.98 364.5,391.33 365.0,391.67 365.5,392.00 366.0,392.32 366.5,392.63 367.0,392.93 367.5,393.22 368.0,393.49 368.5,393.76 369.0,394.02 369.5,394.27 370.0,394.51 370.5,394.74 371.0,394.95 371.5,395.16 372.0,395.35 372.5,395.54 373.0,395.71 373.5,395.88 374.0,396.03 374.5,396.17 375.0,396.30 375.5,396.42 376.0,396.53 376.5,396.62 377.0,396.71 377.5,396.78 378.0,396.85 378.5,396.90 379.0,396.94 379.5,396.97 380.0,396.99 380.5,397.00 381.0,397.00 381.5,396.98 382.0,396.96 382.5,396.92 383.0,396.87 383.5,396.81 384.0,396.74 384.5,396.66 385.0,396.57 385.5,396.46 386.0,396.35 386.5,396.22 387.0,396.09 387.5,395.94 388.0,395.78 388.5,395.61 389.0,395.43 389.5,395.24 390.0,395.04 390.5,394.82 391.0,394.60 391.5,394.37 392.0,394.12 392.5,393.87 393.0,393.60 393.5,393.33 394.0,393.04 394.5,392.75 395.0,392.44 395.5,392.13 396.0,391.80 396.5,391.47 397.0,391.12 397.5,390.77 398.0,390.40 398.5,390.03 399.0,389.65 399.5,389.26 400.0,388.85 400.5,388.44 401.0,388.03 401.5,387.60 402.0,387.16 402.5,386.72 403.0,386.27 403.5,385.80 404.0,385.34 404.5,384.86 405.0,384.37 405.5,383.88 406.0,383.38 406.5,382.87 407.0,382.36 407.5,381.83 408.0,381.30 408.5,380.77 409.0,380.23 409.5,379.68 410.0,379.12 410.5,378.56 411.0,377.99 411.5,377.41 412.0,376.83 412.5,376.25 413.0,375.66 413.5,375.06 414.0,374.46 414.5,373.85 415.0,373.24 415.5,372.62 416.0,372.00 416.5,371.38 417.0,370.75 417.5,370.11 418.0,369.47 418.5,368.83 419.0,368.19 419.5,367.54 420.0,366.89 420.5,366.24 421.0,365.58 421.5,364.92 422.0,364.26 422.5,363.60 423.0,362.93 423.5,362.26 424.0,361.59 424.5,360.92 425.0,360.25 425.5,359.58 426.0,358.90 426.5,358.23 427.0,357.55 427.5,356.88 428.0,356.20 428.5,355.55 429.0,354.90 429.5,354.26 430.0,353.61 430.5,352.96 431.0,352.32 431.5,351.68 432.0,351.03 432.5,350.39 433.0,349.75 433.5,349.11 434.0,348.48 434.5,347.84 435.0,347.21 435.5,346.58 436.0,345.96 436.5,345.33 437.0,344.71 437.5,344.09 438.0,343.48 438.5,342.87 439.0,342.26 439.5,341.66 440.0,341.06 440.5,340.46 441.0,339.87 441.5,339.29 442.0,338.70 442.5,338.13 443.0,337.55 443.5,336.99 444.0,336.43 444.5,335.87 445.0,335.32 445.5,334.77 446.0,334.24 446.5,333.70 447.0,333.18 447.5,332.66 448.0,332.14 448.5,331.63 449.0,331.13 449.5,330.64 450.0,330.15 450.5,329.67 451.0,329.20 451.5,328.74 452.0,328.28 452.5,327.83 453.0,327.39 453.5,326.95 454.0,326.53 454.5,326.11 455.0,325.70 455.5,325.30 456.0,324.91 456.5,324.52 457.0,324.15 457.5,323.78 458.0,323.42 458.5,323.07 459.0,322.73 459.5,322.40 460.0,322.08 460.5,321.77 461.0,321.47 461.5,321.18 462.0,320.89 462.5,320.62 463.0,320.36 463.5,320.10 464.0,319.86 464.5,319.62 465.0,319.40 465.5,319.19 466.0,318.98 466.5,318.79 467.0,318.61 467.5,318.43 468.0,318.27 468.5,318.12 469.0,317.98 469.5,317.84 470.0,317.72 470.5,317.61 471.0,317.51 471.5,317.43 472.0,317.35 472.5,317.28 473.0,317.22 473.5,317.18 474.0,317.14 474.5,317.12 475.0,317.10 475.5,317.10 476.0,317.11 476.5,317.13 477.0,317.15 477.5,317.19 478.0,317.25 478.5,317.31 479.0,317.38 479.5,317.46 480.0,317.55 480.5,317.66 481.0,317.77 481.5,317.90 482.0,318.03 482.5,318.18 483.0,318.33 483.5,318.50 484.0,318.68 484.5,318.86 485.0,319.06 485.5,319.27 486.0,319.49 486.5,319.72 487.0,319.95 487.5,320.20 488.0,320.46 488.5,320.73 489.0,321.00 489.5,321.29 490.0,321.59 490.5,321.89 491.0,322.21 491.5,322.53 492.0,322.87 492.5,323.21 493.0,323.56 493.5,323.93 494.0,324.30 494.5,324.67 495.0,325.06 495.5,325.46 496.0,325.86 496.5,326.28 497.0,326.70 497.5,327.13 498.0,327.56 498.5,328.01 499.0,328.46 499.5,328.92 500.0,329.39 500.5,329.86 501.0,330.35 501.5,330.84 502.0,331.33 502.5,331.84 503.0,332.35 503.5,332.86 504.0,333.39 504.5,333.91 505.0,334.45 505.5,334.99 506.0,335.54 506.5,336.09 507.0,336.65 507.5,337.21 508.0,337.78 508.5,338.36 509.0,338.94 509.5,339.52 510.0,340.11 510.5,340.70 511.0,341.30 511.5,341.90 512.0,342.50 512.5,343.11 513.0,343.72 513.5,344.34 514.0,344.96 514.5,345.58 515.0,346.21 515.5,346.83 516.0,347.46 516.5,348.10 517.0,348.73 517.5,349.37 518.0,350.01 518.5,350.65 519.0,351.29 519.5,351.93 520.0,352.58 520.5,353.22 521.0,353.87 521.5,354.52 522.0,355.16 522.5,355.81 523.0,356.47 523.5,357.15 524.0,357.82 524.5,358.50 525.0,359.17 525.5,359.85 526.0,360.52 526.5,361.19 527.0,361.86 527.5,362.53 528.0,363.20 528.5,363.86 529.0,364.52 529.5,365.18 530.0,365.84 530.5,366.50 531.0,367.15 531.5,367.80 532.0,368.45 532.5,369.09 533.0,369.73 533.5,370.37 534.0,371.00 534.5,371.63 535.0,372.25 535.5,372.87 536.0,373.48 536.5,374.09 537.0,374.70 537.5,375.30 538.0,375.89 538.5,376.48 539.0,377.07 539.5,377.64 540.0,378.22 540.5,378.78 541.0,379.34 541.5,379.90 542.0,380.44 542.5,380.98 543.0,381.52 543.5,382.04 544.0,382.56 544.5,383.08 545.0,383.58 545.5,384.08 546.0,384.57 546.5,385.05 547.0,385.52 547.5,385.99 548.0,386.45 548.5,386.90 549.0,387.34 549.5,387.77 550.0,388.19 550.5,388.61 551.0,389.02 551.5,389.41 552.0,389.80 552.5,390.18 553.0,390.55 553.5,390.91 554.0,391.26 554.5,391.60 555.0,391.93 555.5,392.25 556.0,392.57 556.5,392.87 557.0,393.16 557.5,393.44 558.0,393.71 558.5,393.97 559.0,394.22 559.5,394.46 560.0,394.69 560.5,394.91 561.0,395.12 561.5,395.32 562.0,395.50 562.5,395.68 563.0,395.84 563.5,396.00 564.0,396.14 564.5,396.27 565.0,396.40 565.5,396.51 566.0,396.61 566.5,396.69 567.0,396.77 567.5,396.84 568.0,396.89 568.5,396.94 569.0,396.97 569.5,396.99 570.0,397.00 570.5,397.00 571.0,396.99 571.5,396.96 572.0,396.93 572.5,396.88 573.0,396.82 573.5,396.76 574.0,396.68 574.5,396.59 575.0,396.48 575.5,396.37 576.0,396.25 576.5,396.11 577.0,395.97 577.5,395.81 578.0,395.64 578.5,395.47 579.0,395.28 579.5,395.08 580.0,394.87 580.5,394.65 581.0,394.41 581.5,394.17 582.0,393.92 582.5,393.66 583.0,393.38 583.5,393.10 584.0,392.81 584.5,392.50 585.0,392.19 585.5,391.87 586.0,391.53 586.5,391.19 587.0,390.84 587.5,390.48 588.0,390.11 588.5,389.72 589.0,389.33 589.5,388.94 590.0,388.53 590.5,388.11 591.0,387.69 591.5,387.25 592.0,386.81 592.5,386.36 593.0,385.90 593.5,385.43 594.0,384.95 594.5,384.47 595.0,383.98 595.5,383.48 596.0,382.97 596.5,382.46 597.0,381.94 597.5,381.41 598.0,380.88 598.5,380.33 599.0,379.79 599.5,379.23 600.0,378.67 600.5,378.10 601.0,377.53 601.5,376.95 602.0,376.37 602.5,375.77 603.0,375.18 603.5,374.58 604.0,373.97 604.5,373.36 605.0,372.75 605.5,372.13 606.0,371.50 606.5,370.87 607.0,370.24 607.5,369.60 608.0,368.96 608.5,368.32 609.0,367.67 609.5,367.02 610.0,366.37 610.5,365.71 611.0,365.05 611.5,364.39 612.0,363.73 612.5,363.06 613.0,362.40 613.5,361.73 614.0,361.06 614.5,360.38 615.0,359.71 615.5,359.04 616.0,358.36 616.5,357.69 617.0,357.01 617.5,356.34 618.0,355.68 618.5,355.03 619.0,354.39 619.5,353.74 620.0,353.09 620.5,352.45 621.0,351.80 621.5,351.16 622.0,350.52 622.5,349.88 623.0,349.24 623.5,348.60 624.0,347.97 624.5,347.34 625.0,346.71 625.5,346.08 626.0,345.46 626.5,344.83 627.0,344.22 627.5,343.60 628.0,342.99 628.5,342.38 629.0,341.78 629.5,341.18 630.0,340.58 630.5,339.99 631.0,339.40 631.5,338.82 632.0,338.24 632.5,337.67 633.0,337.10 633.5,336.54 634.0,335.98 634.5,335.43 635.0,334.88 635.5,334.34 636.0,333.81 636.5,333.28 637.0,332.76 637.5,332.24 638.0,331.73 638.5,331.23 639.0,330.74 639.5,330.25 640.0,329.77 640.5,329.29 641.0,328.83 641.5,328.37 642.0,327.92 642.5,327.47 643.0,327.04 643.5,326.61 644.0,326.19 644.5,325.78 645.0,325.38 645.5,324.98 646.0,324.60 646.5,324.22 647.0,323.85 647.5,323.49 648.0,323.14 648.5,322.80 649.0,322.47 649.5,322.15 650.0,321.83 650.5,321.53 651.0,321.23 651.5,320.95 652.0,320.67 652.5,320.41 653.0,320.15 653.5,319.91 654.0,319.67 654.5,319.44 655.0,319.23 655.5,319.02 656.0,318.83 656.5,318.64 657.0,318.47 657.5,318.30 658.0,318.15 658.5,318.00 659.0,317.87 659.5,317.75 660.0,317.64 660.5,317.53 661.0,317.44 661.5,317.36 662.0,317.29 662.5,317.23 663.0,317.19 663.5,317.15 664.0,317.12 664.5,317.11 665.0,317.10 665.5,317.11 666.0,317.12 666.5,317.15 667.0,317.19 667.5,317.23 668.0,317.29 668.5,317.36 669.0,317.44 669.5,317.53 670.0,317.64 670.5,317.75 671.0,317.87 671.5,318.00 672.0,318.15 672.5,318.30 673.0,318.47 673.5,318.64 674.0,318.83 674.5,319.02 675.0,319.23 675.5,319.44 676.0,319.67 676.5,319.91 677.0,320.15 677.5,320.41 678.0,320.67 678.5,320.95 679.0,321.23 679.5,321.53 680.0,321.83 680.5,322.15 681.0,322.47 681.5,322.80 682.0,323.14 682.5,323.49 683.0,323.85 683.5,324.22 684.0,324.60 684.5,324.98 685.0,325.38 685.5,325.78 686.0,326.19 686.5,326.61 687.0,327.04 687.5,327.47 688.0,327.92 688.5,328.37 689.0,328.83 689.5,329.29 690.0,329.77 690.5,330.25 691.0,330.74 691.5,331.23 692.0,331.73 692.5,332.24 693.0,332.76 693.5,333.28 694.0,333.81 694.5,334.34 695.0,334.88 695.5,335.43 696.0,335.98 696.5,336.54 697.0,337.10 697.5,337.67 698.0,338.24 698.5,338.82 699.0,339.40 699.5,339.99 700.0,340.58 700.5,341.18 701.0,341.78 701.5,342.38 702.0,342.99 702.5,343.60 703.0,344.22 703.5,344.83 704.0,345.46 704.5,346.08 705.0,346.71 705.5,347.34 706.0,347.97 706.5,348.60 707.0,349.24 707.5,349.88 708.0,350.52 708.5,351.16 709.0,351.80 709.5,352.45 710.0,353.09 710.5,353.74 711.0,354.39 711.5,355.03 712.0,355.68 712.5,356.34 713.0,357.01 713.5,357.69 714.0,358.36 714.5,359.04 715.0,359.71 715.5,360.38 716.0,361.06 716.5,361.73 717.0,362.40 717.5,363.06 718.0,363.73 718.5,364.39 719.0,365.05 719.5,365.71 720.0,366.37 720.5,367.02 721.0,367.67 721.5,368.32 722.0,368.96 722.5,369.60 723.0,370.24 723.5,370.87 724.0,371.50 724.5,372.13 725.0,372.75 725.5,373.36 726.0,373.97 726.5,374.58 727.0,375.18 727.5,375.77 728.0,376.37 728.5,376.95 729.0,377.53 729.5,378.10 730.0,378.67 730.5,379.23 731.0,379.79 731.5,380.33 732.0,380.88 732.5,381.41 733.0,381.94 733.5,382.46 734.0,382.97 734.5,383.48 735.0,383.98 735.5,384.47 736.0,384.95 736.5,385.43 737.0,385.90 737.5,386.36 738.0,386.81 738.5,387.25 739.0,387.69 739.5,388.11 740.0,388.53 740.5,388.94 741.0,389.33 741.5,389.72 742.0,390.11 742.5,390.48 743.0,390.84 743.5,391.19 744.0,391.53 744.5,391.87 745.0,392.19 745.5,392.50 746.0,392.81 746.5,393.10 747.0,393.38 747.5,393.66 748.0,393.92 748.5,394.17 749.0,394.41 749.5,394.65 750.0,394.87 750.5,395.08 751.0,395.28 751.5,395.47 752.0,395.64 752.5,395.81 753.0,395.97 753.5,396.11 754.0,396.25 754.5,396.37 755.0,396.48 755.5,396.59 756.0,396.68 756.5,396.76 757.0,396.82 757.5,396.88 758.0,396.93 758.5,396.96 759.0,396.99 759.5,397.00 760.0,397.00 760.5,396.99 761.0,396.97 761.5,396.94 762.0,396.89 762.5,396.84 763.0,396.77 763.5,396.69 764.0,396.61 764.5,396.51 765.0,396.40 765.5,396.27 766.0,396.14 766.5,396.00 767.0,395.84 767.5,395.68 768.0,395.50 768.5,395.32 769.0,395.12 769.5,394.91 770.0,394.69 770.5,394.46 771.0,394.22 771.5,393.97 772.0,393.71 772.5,393.44 773.0,393.16 773.5,392.87 774.0,392.57 774.5,392.25 775.0,391.93 775.5,391.60 776.0,391.26 776.5,390.91 777.0,390.55 777.5,390.18 778.0,389.80 778.5,389.41 779.0,389.02 779.5,388.61 780.0,388.19 780.5,387.77 781.0,387.34 781.5,386.90 782.0,386.45 782.5,385.99 783.0,385.52 783.5,385.05 784.0,384.57 784.5,384.08 785.0,383.58 785.5,383.08 786.0,382.56 786.5,382.04 787.0,381.52 787.5,380.98 788.0,380.44 788.5,379.90 789.0,379.34 789.5,378.78 790.0,378.22 790.5,377.64 791.0,377.07 791.5,376.48 792.0,375.89 792.5,375.30 793.0,374.70 793.5,374.09 794.0,373.48 794.5,372.87 795.0,372.25 795.5,371.63 796.0,371.00 796.5,370.37 797.0,369.73 797.5,369.09 798.0,368.45 798.5,367.80 799.0,367.15 799.5,366.50 800.0,365.84 800.5,365.18 801.0,364.52 801.5,363.86 802.0,363.20 802.5,362.53 803.0,361.86 803.5,361.19 804.0,360.52 804.5,359.85 805.0,359.17 805.5,358.50 806.0,357.82 806.5,357.15 807.0,356.47 807.5,355.81 808.0,355.16 808.5,354.52 809.0,353.87 809.5,353.22 810.0,352.58 810.5,351.93 811.0,351.29 811.5,350.65 812.0,350.01 812.5,349.37 813.0,348.73 813.5,348.10 814.0,347.46 814.5,346.83 815.0,346.21 815.5,345.58 816.0,344.96 816.5,344.34 817.0,343.72 817.5,343.11 818.0,342.50 818.5,341.90 819.0,341.30 819.5,340.70 820.0,340.11 820.5,339.52 821.0,338.94 821.5,338.36 822.0,337.78 822.5,337.21 823.0,336.65 823.5,336.09 824.0,335.54 824.5,334.99 825.0,334.45 825.5,333.91 826.0,333.39 826.5,332.86 827.0,332.35 827.5,331.84 828.0,331.33 828.5,330.84 829.0,330.35 829.5,329.86 830.0,329.39 830.5,328.92 831.0,328.46 831.5,328.01 832.0,327.56 832.5,327.13 833.0,326.70 833.5,326.28 834.0,325.86 834.5,325.46 835.0,325.06 835.5,324.67 836.0,324.30 836.5,323.93 837.0,323.56 837.5,323.21 838.0,322.87 838.5,322.53 839.0,322.21 839.5,321.89 840.0,321.59 840.5,321.29 841.0,321.00 841.5,320.73 842.0,320.46 842.5,320.20 843.0,319.95 843.5,319.72 844.0,319.49 844.5,319.27 845.0,319.06 845.5,318.86 846.0,318.68 846.5,318.50 847.0,318.33 847.5,318.18 848.0,318.03 848.5,317.90 849.0,317.77 849.5,317.66 850.0,317.55 850.5,317.46 851.0,317.38 851.5,317.31 852.0,317.25 852.5,317.19 853.0,317.15 853.5,317.13 854.0,317.11 854.5,317.10 855.0,317.10 855.5,317.12 856.0,317.14 856.5,317.18 857.0,317.22 857.5,317.28 858.0,317.35 858.5,317.43 859.0,317.51 859.5,317.61 860.0,317.72 860.5,317.84 861.0,317.98 861.5,318.12 862.0,318.27 862.5,318.43 863.0,318.61 863.5,318.79 864.0,318.98 864.5,319.19 865.0,319.40 865.5,319.62 866.0,319.86 866.5,320.10 867.0,320.36 867.5,320.62 868.0,320.89 868.5,321.18 869.0,321.47 869.5,321.77 870.0,322.08 870.5,322.40 871.0,322.73 871.5,323.07 872.0,323.42 872.5,323.78 873.0,324.15 873.5,324.52 874.0,324.91 874.5,325.30 875.0,325.70 875.5,326.11 876.0,326.53 876.5,326.95 877.0,327.39 877.5,327.83 878.0,328.28 878.5,328.74 879.0,329.20 879.5,329.67 880.0,330.15 880.5,330.64 881.0,331.13 881.5,331.63 882.0,332.14 882.5,332.66 883.0,333.18 883.5,333.70 884.0,334.24 884.5,334.77 885.0,335.32 885.5,335.87 886.0,336.43 886.5,336.99 887.0,337.55 887.5,338.13 888.0,338.70 888.5,339.29 889.0,339.87 889.5,340.46 890.0,341.06 890.5,341.66 891.0,342.26 891.5,342.87 892.0,343.48 892.5,344.09 893.0,344.71 893.5,345.33 894.0,345.96 894.5,346.58 895.0,347.21 895.5,347.84 896.0,348.48 896.5,349.11 897.0,349.75 897.5,350.39 898.0,351.03 898.5,351.68 899.0,352.32 899.5,352.96 900.0,353.61 900.5,354.26 901.0,354.90 901.5,355.55 902.0,356.20 902.5,356.88 903.0,357.55 903.5,358.23 904.0,358.90 904.5,359.58 905.0,360.25 905.5,360.92 906.0,361.59 906.5,362.26 907.0,362.93 907.5,363.60 908.0,364.26 908.5,364.92 909.0,365.58 909.5,366.24 910.0,366.89 910.5,367.54 911.0,368.19 911.5,368.83 912.0,369.47 912.5,370.11 913.0,370.75 913.5,371.38 914.0,372.00 914.5,372.62 915.0,373.24 915.5,373.85 916.0,374.46 916.5,375.06 917.0,375.66 917.5,376.25 918.0,376.83 918.5,377.41 919.0,377.99 919.5,378.56 920.0,379.12 920.5,379.68 921.0,380.23 921.5,380.77 922.0,381.30 922.5,381.83 923.0,382.36 923.5,382.87 924.0,383.38 924.5,383.88 925.0,384.37 925.5,384.86 926.0,385.34 926.5,385.80 927.0,386.27 927.5,386.72 928.0,387.16 928.5,387.60 929.0,388.03 929.5,388.44 930.0,388.85 930.5,389.26 931.0,389.65 931.5,390.03 932.0,390.40 932.5,390.77 933.0,391.12 933.5,391.47 934.0,391.80 934.5,392.13 935.0,392.44 935.5,392.75 936.0,393.04 936.5,393.33 937.0,393.60 937.5,393.87 938.0,394.12 938.5,394.37 939.0,394.60 939.5,394.82 940.0,395.04 940.5,395.24 941.0,395.43 941.5,395.61 942.0,395.78 942.5,395.94 943.0,396.09 943.5,396.22 944.0,396.35 944.5,396.46 945.0,396.57 945.5,396.66 946.0,396.74 946.5,396.81 947.0,396.87 947.5,396.92 948.0,396.96 948.5,396.98 949.0,397.00 949.5,397.00 950.0,396.99 950.5,396.97 951.0,396.94 951.5,396.90 952.0,396.85 952.5,396.78 953.0,396.71 953.5,396.62 954.0,396.53 954.5,396.42 955.0,396.30 955.5,396.17 956.0,396.03 956.5,395.88 957.0,395.71 957.5,395.54 958.0,395.35 958.5,395.16 959.0,394.95 959.5,394.74 960.0,394.51 960.5,394.27 961.0,394.02 961.5,393.76 962.0,393.49 962.5,393.22 963.0,392.93 963.5,392.63 964.0,392.32 964.5,392.00 965.0,391.67 965.5,391.33 966.0,390.98 966.5,390.62 967.0,390.25 967.5,389.88 968.0,389.49 968.5,389.10 969.0,388.69 969.5,388.28 970.0,387.86 970.5,387.43 971.0,386.99 971.5,386.54 972.0,386.08 972.5,385.62 973.0,385.15 973.5,384.67 974.0,384.18 974.5,383.68 975.0,383.18 975.5,382.67 976.0,382.15 976.5,381.62 977.0,381.09 977.5,380.55 978.0,380.01 978.5,379.45 979.0,378.90 979.5,378.33 980.0,377.76 980.5,377.18 981.0,376.60 981.5,376.01 982.0,375.42 982.5,374.82 983.0,374.22 983.5,373.61 984.0,372.99 984.5,372.37 985.0,371.75 985.5,371.12 986.0,370.49 986.5,369.86 987.0,369.22 987.5,368.58 988.0,367.93 988.5,367.28 989.0,366.63 989.5,365.97 990.0,365.32 990.5,364.66 991.0,363.99 991.5,363.33 992.0,362.66 992.5,361.99 993.0,361.32 993.5,360.65 994.0,359.98 994.5,359.31 995.0,358.63 995.5,357.96 996.0,357.28 996.5,356.61 997.0,355.94" fill="none" stroke="#30d0e0" stroke-width="1.05"/>
<polyline points="48.0,358.12 48.5,356.92 49.0,355.73 49.5,354.56 50.0,353.39 50.5,352.22 51.0,351.05 51.5,349.88 52.0,348.72 52.5,347.55 53.0,346.39 53.5,345.23 54.0,344.08 54.5,342.92 55.0,341.78 55.5,340.63 56.0,339.49 56.5,338.35 57.0,337.22 57.5,336.10 58.0,334.98 58.5,333.86 59.0,332.75 59.5,331.65 60.0,330.56 60.5,329.47 61.0,328.39 61.5,327.32 62.0,326.25 62.5,325.19 63.0,324.14 63.5,323.10 64.0,322.07 64.5,321.05 65.0,320.04 65.5,319.04 66.0,318.05 66.5,317.07 67.0,316.10 67.5,315.14 68.0,314.19 68.5,313.25 69.0,312.33 69.5,311.42 70.0,310.52 70.5,309.63 71.0,308.75 71.5,307.89 72.0,307.04 72.5,306.21 73.0,305.39 73.5,304.58 74.0,303.79 74.5,303.01 75.0,302.24 75.5,301.49 76.0,300.76 76.5,300.04 77.0,299.33 77.5,298.65 78.0,297.97 78.5,297.32 79.0,296.68 79.5,296.05 80.0,295.45 80.5,294.86 81.0,294.28 81.5,293.72 82.0,293.18 82.5,292.66 83.0,292.16 83.5,291.67 84.0,291.20 84.5,290.75 85.0,290.31 85.5,289.90 86.0,289.50 86.5,289.12 87.0,288.76 87.5,288.42 88.0,288.09 88.5,287.79 89.0,287.50 89.5,287.24 90.0,286.99 90.5,286.76 91.0,286.55 91.5,286.36 92.0,286.18 92.5,286.03 93.0,285.90 93.5,285.78 94.0,285.69 94.5,285.61 95.0,285.56 95.5,285.52 96.0,285.50 96.5,285.50 97.0,285.52 97.5,285.57 98.0,285.63 98.5,285.71 99.0,285.80 99.5,285.92 100.0,286.06 100.5,286.22 101.0,286.39 101.5,286.59 102.0,286.80 102.5,287.04 103.0,287.29 103.5,287.56 104.0,287.85 104.5,288.16 105.0,288.49 105.5,288.83 106.0,289.20 106.5,289.58 107.0,289.98 107.5,290.40 108.0,290.84 108.5,291.29 109.0,291.77 109.5,292.26 110.0,292.77 110.5,293.29 111.0,293.83 111.5,294.39 112.0,294.97 112.5,295.57 113.0,296.18 113.5,296.80 114.0,297.45 114.5,298.11 115.0,298.78 115.5,299.47 116.0,300.18 116.5,300.90 117.0,301.64 117.5,302.39 118.0,303.16 118.5,303.94 119.0,304.74 119.5,305.55 120.0,306.37 120.5,307.21 121.0,308.06 121.5,308.93 122.0,309.80 122.5,310.70 123.0,311.60 123.5,312.51 124.0,313.44 124.5,314.38 125.0,315.33 125.5,316.29 126.0,317.26 126.5,318.25 127.0,319.24 127.5,320.24 128.0,321.26 128.5,322.28 129.0,323.31 129.5,324.35 130.0,325.40 130.5,326.46 131.0,327.53 131.5,328.60 132.0,329.69 132.5,330.78 133.0,331.87 133.5,332.98 134.0,334.09 134.5,335.20 135.0,336.32 135.5,337.45 136.0,338.58 136.5,339.72 137.0,340.86 137.5,342.01 138.0,343.15 138.5,344.31 139.0,345.46 139.5,346.62 140.0,347.79 140.5,348.95 141.0,350.12 141.5,351.28 142.0,352.45 142.5,353.62 143.0,354.79 143.5,355.97 144.0,357.16 144.5,358.36 145.0,359.57 145.5,360.77 146.0,361.97 146.5,363.17 147.0,364.36 147.5,365.56 148.0,366.75 148.5,367.94 149.0,369.12 149.5,370.30 150.0,371.48 150.5,372.66 151.0,373.83 151.5,374.99 152.0,376.15 152.5,377.30 153.0,378.45 153.5,379.59 154.0,380.73 154.5,381.86 155.0,382.98 155.5,384.09 156.0,385.20 156.5,386.30 157.0,387.39 157.5,388.47 158.0,389.54 158.5,390.61 159.0,391.66 159.5,392.71 160.0,393.74 160.5,394.77 161.0,395.78 161.5,396.78 162.0,397.78 162.5,398.76 163.0,399.73 163.5,400.68 164.0,401.63 164.5,402.56 165.0,403.48 165.5,404.38 166.0,405.28 166.5,406.16 167.0,407.02 167.5,407.88 168.0,408.71 168.5,409.54 169.0,410.35 169.5,411.14 170.0,411.92 170.5,412.68 171.0,413.43 171.5,414.16 172.0,414.88 172.5,415.58 173.0,416.26 173.5,416.93 174.0,417.58 174.5,418.21 175.0,418.83 175.5,419.43 176.0,420.01 176.5,420.58 177.0,421.13 177.5,421.66 178.0,422.17 178.5,422.66 179.0,423.13 179.5,423.59 180.0,424.03 180.5,424.45 181.0,424.85 181.5,425.23 182.0,425.59 182.5,425.94 183.0,426.26 183.5,426.57 184.0,426.86 184.5,427.12 185.0,427.37 185.5,427.60 186.0,427.81 186.5,427.99 187.0,428.16 187.5,428.31 188.0,428.44 188.5,428.55 189.0,428.64 189.5,428.71 190.0,428.76 190.5,428.79 191.0,428.80 191.5,428.79 192.0,428.76 192.5,428.71 193.0,428.64 193.5,428.55 194.0,428.44 194.5,428.31 195.0,428.16 195.5,427.99 196.0,427.81 196.5,427.60 197.0,427.37 197.5,427.12 198.0,426.86 198.5,426.57 199.0,426.26 199.5,425.94 200.0,425.59 200.5,425.23 201.0,424.85 201.5,424.45 202.0,424.03 202.5,423.59 203.0,423.13 203.5,422.66 204.0,422.17 204.5,421.66 205.0,421.13 205.5,420.58 206.0,420.01 206.5,419.43 207.0,418.83 207.5,418.21 208.0,417.58 208.5,416.93 209.0,416.26 209.5,415.58 210.0,414.88 210.5,414.16 211.0,413.43 211.5,412.68 212.0,411.92 212.5,411.14 213.0,410.35 213.5,409.54 214.0,408.71 214.5,407.88 215.0,407.02 215.5,406.16 216.0,405.28 216.5,404.38 217.0,403.48 217.5,402.56 218.0,401.63 218.5,400.68 219.0,399.73 219.5,398.76 220.0,397.78 220.5,396.78 221.0,395.78 221.5,394.77 222.0,393.74 222.5,392.71 223.0,391.66 223.5,390.61 224.0,389.54 224.5,388.47 225.0,387.39 225.5,386.30 226.0,385.20 226.5,384.09 227.0,382.98 227.5,381.86 228.0,380.73 228.5,379.59 229.0,378.45 229.5,377.30 230.0,376.15 230.5,374.99 231.0,373.83 231.5,372.66 232.0,371.48 232.5,370.30 233.0,369.12 233.5,367.94 234.0,366.75 234.5,365.56 235.0,364.36 235.5,363.17 236.0,361.97 236.5,360.77 237.0,359.57 237.5,358.36 238.0,357.16 238.5,355.97 239.0,354.79 239.5,353.62 240.0,352.45 240.5,351.28 241.0,350.12 241.5,348.95 242.0,347.79 242.5,346.62 243.0,345.46 243.5,344.31 244.0,343.15 244.5,342.01 245.0,340.86 245.5,339.72 246.0,338.58 246.5,337.45 247.0,336.32 247.5,335.20 248.0,334.09 248.5,332.98 249.0,331.87 249.5,330.78 250.0,329.69 250.5,328.60 251.0,327.53 251.5,326.46 252.0,325.40 252.5,324.35 253.0,323.31 253.5,322.28 254.0,321.26 254.5,320.24 255.0,319.24 255.5,318.25 256.0,317.26 256.5,316.29 257.0,315.33 257.5,314.38 258.0,313.44 258.5,312.51 259.0,311.60 259.5,310.70 260.0,309.80 260.5,308.93 261.0,308.06 261.5,307.21 262.0,306.37 262.5,305.55 263.0,304.74 263.5,303.94 264.0,303.16 264.5,302.39 265.0,301.64 265.5,300.90 266.0,300.18 266.5,299.47 267.0,298.78 267.5,298.11 268.0,297.45 268.5,296.80 269.0,296.18 269.5,295.57 270.0,294.97 270.5,294.39 271.0,293.83 271.5,293.29 272.0,292.77 272.5,292.26 273.0,291.77 273.5,291.29 274.0,290.84 274.5,290.40 275.0,289.98 275.5,289.58 276.0,289.20 276.5,288.83 277.0,288.49 277.5,288.16 278.0,287.85 278.5,287.56 279.0,287.29 279.5,287.04 280.0,286.80 280.5,286.59 281.0,286.39 281.5,286.22 282.0,286.06 282.5,285.92 283.0,285.80 283.5,285.71 284.0,285.63 284.5,285.57 285.0,285.52 285.5,285.50 286.0,285.50 286.5,285.52 287.0,285.56 287.5,285.61 288.0,285.69 288.5,285.78 289.0,285.90 289.5,286.03 290.0,286.18 290.5,286.36 291.0,286.55 291.5,286.76 292.0,286.99 292.5,287.24 293.0,287.50 293.5,287.79 294.0,288.09 294.5,288.42 295.0,288.76 295.5,289.12 296.0,289.50 296.5,289.90 297.0,290.31 297.5,290.75 298.0,291.20 298.5,291.67 299.0,292.16 299.5,292.66 300.0,293.18 300.5,293.72 301.0,294.28 301.5,294.86 302.0,295.45 302.5,296.05 303.0,296.68 303.5,297.32 304.0,297.97 304.5,298.65 305.0,299.33 305.5,300.04 306.0,300.76 306.5,301.49 307.0,302.24 307.5,303.01 308.0,303.79 308.5,304.58 309.0,305.39 309.5,306.21 310.0,307.04 310.5,307.89 311.0,308.75 311.5,309.63 312.0,310.52 312.5,311.42 313.0,312.33 313.5,313.25 314.0,314.19 314.5,315.14 315.0,316.10 315.5,317.07 316.0,318.05 316.5,319.04 317.0,320.04 317.5,321.05 318.0,322.07 318.5,323.10 319.0,324.14 319.5,325.19 320.0,326.25 320.5,327.32 321.0,328.39 321.5,329.47 322.0,330.56 322.5,331.65 323.0,332.75 323.5,333.86 324.0,334.98 324.5,336.10 325.0,337.22 325.5,338.35 326.0,339.49 326.5,340.63 327.0,341.78 327.5,342.92 328.0,344.08 328.5,345.23 329.0,346.39 329.5,347.55 330.0,348.72 330.5,349.88 331.0,351.05 331.5,352.22 332.0,353.39 332.5,354.56 333.0,355.73 333.5,356.92 334.0,358.12 334.5,359.33 335.0,360.53 335.5,361.73 336.0,362.93 336.5,364.12 337.0,365.32 337.5,366.51 338.0,367.70 338.5,368.89 339.0,370.07 339.5,371.25 340.0,372.42 340.5,373.59 341.0,374.76 341.5,375.92 342.0,377.07 342.5,378.22 343.0,379.37 343.5,380.50 344.0,381.63 344.5,382.76 345.0,383.87 345.5,384.98 346.0,386.08 346.5,387.17 347.0,388.26 347.5,389.33 348.0,390.40 348.5,391.45 349.0,392.50 349.5,393.54 350.0,394.56 350.5,395.58 351.0,396.58 351.5,397.58 352.0,398.56 352.5,399.53 353.0,400.49 353.5,401.44 354.0,402.37 354.5,403.30 355.0,404.20 355.5,405.10 356.0,405.98 356.5,406.85 357.0,407.71 357.5,408.55 358.0,409.37 358.5,410.18 359.0,410.98 359.5,411.76 360.0,412.53 360.5,413.28 361.0,414.02 361.5,414.74 362.0,415.44 362.5,416.13 363.0,416.80 363.5,417.45 364.0,418.09 364.5,418.71 365.0,419.31 365.5,419.90 366.0,420.47 366.5,421.02 367.0,421.55 367.5,422.07 368.0,422.56 368.5,423.04 369.0,423.50 369.5,423.94 370.0,424.37 370.5,424.77 371.0,425.16 371.5,425.52 372.0,425.87 372.5,426.20 373.0,426.51 373.5,426.80 374.0,427.07 374.5,427.32 375.0,427.55 375.5,427.77 376.0,427.96 376.5,428.13 377.0,428.28 377.5,428.42 378.0,428.53 378.5,428.62 379.0,428.70 379.5,428.75 380.0,428.79 380.5,428.80 381.0,428.79 381.5,428.77 382.0,428.72 382.5,428.66 383.0,428.57 383.5,428.46 384.0,428.34 384.5,428.19 385.0,428.03 385.5,427.84 386.0,427.64 386.5,427.42 387.0,427.17 387.5,426.91 388.0,426.63 388.5,426.33 389.0,426.01 389.5,425.67 390.0,425.31 390.5,424.93 391.0,424.53 391.5,424.11 392.0,423.68 392.5,423.23 393.0,422.76 393.5,422.27 394.0,421.76 394.5,421.23 395.0,420.69 395.5,420.13 396.0,419.55 396.5,418.95 397.0,418.34 397.5,417.71 398.0,417.06 398.5,416.40 399.0,415.72 399.5,415.02 400.0,414.31 400.5,413.58 401.0,412.83 401.5,412.07 402.0,411.30 402.5,410.51 403.0,409.70 403.5,408.88 404.0,408.04 404.5,407.19 405.0,406.33 405.5,405.45 406.0,404.56 406.5,403.66 407.0,402.74 407.5,401.81 408.0,400.87 408.5,399.92 409.0,398.95 409.5,397.97 410.0,396.98 410.5,395.98 411.0,394.97 411.5,393.95 412.0,392.92 412.5,391.87 413.0,390.82 413.5,389.76 414.0,388.69 414.5,387.61 415.0,386.52 415.5,385.42 416.0,384.32 416.5,383.20 417.0,382.08 417.5,380.96 418.0,379.82 418.5,378.68 419.0,377.53 419.5,376.38 420.0,375.22 420.5,374.06 421.0,372.89 421.5,371.72 422.0,370.54 422.5,369.36 423.0,368.17 423.5,366.99 424.0,365.80 424.5,364.60 425.0,363.41 425.5,362.21 426.0,361.01 426.5,359.81 427.0,358.61 427.5,357.40 428.0,356.20 428.5,355.03 429.0,353.86 429.5,352.69 430.0,351.52 430.5,350.35 431.0,349.18 431.5,348.02 432.0,346.86 432.5,345.70 433.0,344.54 433.5,343.39 434.0,342.23 434.5,341.09 435.0,339.95 435.5,338.81 436.0,337.68 436.5,336.55 437.0,335.42 437.5,334.31 438.0,333.20 438.5,332.09 439.0,330.99 439.5,329.90 440.0,328.82 440.5,327.74 441.0,326.68 441.5,325.61 442.0,324.56 442.5,323.52 443.0,322.49 443.5,321.46 444.0,320.44 444.5,319.44 445.0,318.44 445.5,317.46 446.0,316.48 446.5,315.52 447.0,314.57 447.5,313.63 448.0,312.70 448.5,311.78 449.0,310.87 449.5,309.98 450.0,309.10 450.5,308.23 451.0,307.38 451.5,306.54 452.0,305.71 452.5,304.90 453.0,304.10 453.5,303.32 454.0,302.55 454.5,301.79 455.0,301.05 455.5,300.32 456.0,299.61 456.5,298.92 457.0,298.24 457.5,297.58 458.0,296.93 458.5,296.30 459.0,295.69 459.5,295.09 460.0,294.51 460.5,293.95 461.0,293.40 461.5,292.87 462.0,292.36 462.5,291.86 463.0,291.39 463.5,290.93 464.0,290.49 464.5,290.06 465.0,289.66 465.5,289.27 466.0,288.90 466.5,288.55 467.0,288.22 467.5,287.91 468.0,287.62 468.5,287.34 469.0,287.08 469.5,286.85 470.0,286.63 470.5,286.43 471.0,286.25 471.5,286.09 472.0,285.95 472.5,285.83 473.0,285.72 473.5,285.64 474.0,285.58 474.5,285.53 475.0,285.51 475.5,285.50 476.0,285.51 476.5,285.55 477.0,285.60 477.5,285.67 478.0,285.76 478.5,285.87 479.0,286.00 479.5,286.15 480.0,286.32 480.5,286.51 481.0,286.71 481.5,286.94 482.0,287.18 482.5,287.45 483.0,287.73 483.5,288.03 484.0,288.35 484.5,288.69 485.0,289.05 485.5,289.42 486.0,289.82 486.5,290.23 487.0,290.66 487.5,291.11 488.0,291.57 488.5,292.06 489.0,292.56 489.5,293.08 490.0,293.62 490.5,294.17 491.0,294.74 491.5,295.33 492.0,295.93 492.5,296.55 493.0,297.19 493.5,297.84 494.0,298.51 494.5,299.20 495.0,299.90 495.5,300.61 496.0,301.34 496.5,302.09 497.0,302.85 497.5,303.63 498.0,304.42 498.5,305.22 499.0,306.04 499.5,306.87 500.0,307.72 500.5,308.58 501.0,309.45 501.5,310.34 502.0,311.24 502.5,312.15 503.0,313.07 503.5,314.00 504.0,314.95 504.5,315.90 505.0,316.87 505.5,317.85 506.0,318.84 506.5,319.84 507.0,320.85 507.5,321.87 508.0,322.90 508.5,323.94 509.0,324.98 509.5,326.04 510.0,327.10 510.5,328.17 511.0,329.25 511.5,330.34 512.0,331.43 512.5,332.53 513.0,333.64 513.5,334.75 514.0,335.87 514.5,337.00 515.0,338.13 515.5,339.26 516.0,340.40 516.5,341.55 517.0,342.69 517.5,343.85 518.0,345.00 518.5,346.16 519.0,347.32 519.5,348.48 520.0,349.65 520.5,350.82 521.0,351.99 521.5,353.16 522.0,354.33 522.5,355.50 523.0,356.68 523.5,357.88 524.0,359.09 524.5,360.29 525.0,361.49 525.5,362.69 526.0,363.88 526.5,365.08 527.0,366.27 527.5,367.46 528.0,368.65 528.5,369.83 529.0,371.01 529.5,372.19 530.0,373.36 530.5,374.53 531.0,375.69 531.5,376.84 532.0,377.99 532.5,379.14 533.0,380.28 533.5,381.41 534.0,382.53 534.5,383.65 535.0,384.76 535.5,385.86 536.0,386.95 536.5,388.04 537.0,389.12 537.5,390.18 538.0,391.24 538.5,392.29 539.0,393.33 539.5,394.36 540.0,395.38 540.5,396.38 541.0,397.38 541.5,398.37 542.0,399.34 542.5,400.30 543.0,401.25 543.5,402.19 544.0,403.11 544.5,404.02 545.0,404.92 545.5,405.81 546.0,406.68 546.5,407.54 547.0,408.38 547.5,409.21 548.0,410.02 548.5,410.82 549.0,411.61 549.5,412.38 550.0,413.13 550.5,413.87 551.0,414.59 551.5,415.30 552.0,415.99 552.5,416.66 553.0,417.32 553.5,417.96 554.0,418.59 554.5,419.19 555.0,419.78 555.5,420.35 556.0,420.91 556.5,421.45 557.0,421.96 557.5,422.46 558.0,422.95 558.5,423.41 559.0,423.86 559.5,424.28 560.0,424.69 560.5,425.08 561.0,425.45 561.5,425.80 562.0,426.14 562.5,426.45 563.0,426.74 563.5,427.02 564.0,427.27 564.5,427.51 565.0,427.72 565.5,427.92 566.0,428.10 566.5,428.25 567.0,428.39 567.5,428.51 568.0,428.61 568.5,428.68 569.0,428.74 569.5,428.78 570.0,428.80 570.5,428.80 571.0,428.77 571.5,428.73 572.0,428.67 572.5,428.59 573.0,428.49 573.5,428.37 574.0,428.23 574.5,428.06 575.0,427.88 575.5,427.68 576.0,427.46 576.5,427.22 577.0,426.96 577.5,426.69 578.0,426.39 578.5,426.07 579.0,425.73 579.5,425.38 580.0,425.00 580.5,424.61 581.0,424.20 581.5,423.77 582.0,423.32 582.5,422.85 583.0,422.37 583.5,421.86 584.0,421.34 584.5,420.80 585.0,420.24 585.5,419.67 586.0,419.07 586.5,418.46 587.0,417.84 587.5,417.19 588.0,416.53 588.5,415.85 589.0,415.16 589.5,414.45 590.0,413.72 590.5,412.98 591.0,412.23 591.5,411.45 592.0,410.66 592.5,409.86 593.0,409.04 593.5,408.21 594.0,407.37 594.5,406.51 595.0,405.63 595.5,404.74 596.0,403.84 596.5,402.93 597.0,402.00 597.5,401.06 598.0,400.11 598.5,399.15 599.0,398.17 599.5,397.18 600.0,396.18 600.5,395.17 601.0,394.15 601.5,393.12 602.0,392.08 602.5,391.03 603.0,389.97 603.5,388.90 604.0,387.82 604.5,386.74 605.0,385.64 605.5,384.54 606.0,383.43 606.5,382.31 607.0,381.18 607.5,380.05 608.0,378.91 608.5,377.76 609.0,376.61 609.5,375.45 610.0,374.29 610.5,373.12 611.0,371.95 611.5,370.78 612.0,369.60 612.5,368.41 613.0,367.22 613.5,366.03 614.0,364.84 614.5,363.65 615.0,362.45 615.5,361.25 616.0,360.05 616.5,358.85 617.0,357.64 617.5,356.44 618.0,355.26 618.5,354.09 619.0,352.92 619.5,351.75 620.0,350.58 620.5,349.42 621.0,348.25 621.5,347.09 622.0,345.93 622.5,344.77 623.0,343.62 623.5,342.46 624.0,341.32 624.5,340.17 625.0,339.04 625.5,337.90 626.0,336.77 626.5,335.65 627.0,334.53 627.5,333.42 628.0,332.31 628.5,331.21 629.0,330.12 629.5,329.04 630.0,327.96 630.5,326.89 631.0,325.83 631.5,324.77 632.0,323.73 632.5,322.69 633.0,321.66 633.5,320.65 634.0,319.64 634.5,318.64 635.0,317.65 635.5,316.68 636.0,315.71 636.5,314.76 637.0,313.81 637.5,312.88 638.0,311.96 638.5,311.05 639.0,310.16 639.5,309.28 640.0,308.41 640.5,307.55 641.0,306.71 641.5,305.88 642.0,305.06 642.5,304.26 643.0,303.47 643.5,302.70 644.0,301.94 644.5,301.20 645.0,300.47 645.5,299.76 646.0,299.06 646.5,298.38 647.0,297.71 647.5,297.06 648.0,296.43 648.5,295.81 649.0,295.21 649.5,294.62 650.0,294.06 650.5,293.51 651.0,292.97 651.5,292.46 652.0,291.96 652.5,291.48 653.0,291.02 653.5,290.57 654.0,290.15 654.5,289.74 655.0,289.35 655.5,288.97 656.0,288.62 656.5,288.29 657.0,287.97 657.5,287.67 658.0,287.39 658.5,287.13 659.0,286.89 659.5,286.67 660.0,286.47 660.5,286.28 661.0,286.12 661.5,285.98 662.0,285.85 662.5,285.74 663.0,285.66 663.5,285.59 664.0,285.54 664.5,285.51 665.0,285.50 665.5,285.51 666.0,285.54 666.5,285.59 667.0,285.66 667.5,285.74 668.0,285.85 668.5,285.98 669.0,286.12 669.5,286.28 670.0,286.47 670.5,286.67 671.0,286.89 671.5,287.13 672.0,287.39 672.5,287.67 673.0,287.97 673.5,288.29 674.0,288.62 674.5,288.97 675.0,289.35 675.5,289.74 676.0,290.15 676.5,290.57 677.0,291.02 677.5,291.48 678.0,291.96 678.5,292.46 679.0,292.97 679.5,293.51 680.0,294.06 680.5,294.62 681.0,295.21 681.5,295.81 682.0,296.43 682.5,297.06 683.0,297.71 683.5,298.38 684.0,299.06 684.5,299.76 685.0,300.47 685.5,301.20 686.0,301.94 686.5,302.70 687.0,303.47 687.5,304.26 688.0,305.06 688.5,305.88 689.0,306.71 689.5,307.55 690.0,308.41 690.5,309.28 691.0,310.16 691.5,311.05 692.0,311.96 692.5,312.88 693.0,313.81 693.5,314.76 694.0,315.71 694.5,316.68 695.0,317.65 695.5,318.64 696.0,319.64 696.5,320.65 697.0,321.66 697.5,322.69 698.0,323.73 698.5,324.77 699.0,325.83 699.5,326.89 700.0,327.96 700.5,329.04 701.0,330.12 701.5,331.21 702.0,332.31 702.5,333.42 703.0,334.53 703.5,335.65 704.0,336.77 704.5,337.90 705.0,339.04 705.5,340.17 706.0,341.32 706.5,342.46 707.0,343.62 707.5,344.77 708.0,345.93 708.5,347.09 709.0,348.25 709.5,349.42 710.0,350.58 710.5,351.75 711.0,352.92 711.5,354.09 712.0,355.26 712.5,356.44 713.0,357.64 713.5,358.85 714.0,360.05 714.5,361.25 715.0,362.45 715.5,363.65 716.0,364.84 716.5,366.03 717.0,367.22 717.5,368.41 718.0,369.60 718.5,370.78 719.0,371.95 719.5,373.12 720.0,374.29 720.5,375.45 721.0,376.61 721.5,377.76 722.0,378.91 722.5,380.05 723.0,381.18 723.5,382.31 724.0,383.43 724.5,384.54 725.0,385.64 725.5,386.74 726.0,387.82 726.5,388.90 727.0,389.97 727.5,391.03 728.0,392.08 728.5,393.12 729.0,394.15 729.5,395.17 730.0,396.18 730.5,397.18 731.0,398.17 731.5,399.15 732.0,400.11 732.5,401.06 733.0,402.00 733.5,402.93 734.0,403.84 734.5,404.74 735.0,405.63 735.5,406.51 736.0,407.37 736.5,408.21 737.0,409.04 737.5,409.86 738.0,410.66 738.5,411.45 739.0,412.23 739.5,412.98 740.0,413.72 740.5,414.45 741.0,415.16 741.5,415.85 742.0,416.53 742.5,417.19 743.0,417.84 743.5,418.46 744.0,419.07 744.5,419.67 745.0,420.24 745.5,420.80 746.0,421.34 746.5,421.86 747.0,422.37 747.5,422.85 748.0,423.32 748.5,423.77 749.0,424.20 749.5,424.61 750.0,425.00 750.5,425.38 751.0,425.73 751.5,426.07 752.0,426.39 752.5,426.69 753.0,426.96 753.5,427.22 754.0,427.46 754.5,427.68 755.0,427.88 755.5,428.06 756.0,428.23 756.5,428.37 757.0,428.49 757.5,428.59 758.0,428.67 758.5,428.73 759.0,428.77 759.5,428.80 760.0,428.80 760.5,428.78 761.0,428.74 761.5,428.68 762.0,428.61 762.5,428.51 763.0,428.39 763.5,428.25 764.0,428.10 764.5,427.92 765.0,427.72 765.5,427.51 766.0,427.27 766.5,427.02 767.0,426.74 767.5,426.45 768.0,426.14 768.5,425.80 769.0,425.45 769.5,425.08 770.0,424.69 770.5,424.28 771.0,423.86 771.5,423.41 772.0,422.95 772.5,422.46 773.0,421.96 773.5,421.45 774.0,420.91 774.5,420.35 775.0,419.78 775.5,419.19 776.0,418.59 776.5,417.96 777.0,417.32 777.5,416.66 778.0,415.99 778.5,415.30 779.0,414.59 779.5,413.87 780.0,413.13 780.5,412.38 781.0,411.61 781.5,410.82 782.0,410.02 782.5,409.21 783.0,408.38 783.5,407.54 784.0,406.68 784.5,405.81 785.0,404.92 785.5,404.02 786.0,403.11 786.5,402.19 787.0,401.25 787.5,400.30 788.0,399.34 788.5,398.37 789.0,397.38 789.5,396.38 790.0,395.38 790.5,394.36 791.0,393.33 791.5,392.29 792.0,391.24 792.5,390.18 793.0,389.12 793.5,388.04 794.0,386.95 794.5,385.86 795.0,384.76 795.5,383.65 796.0,382.53 796.5,381.41 797.0,380.28 797.5,379.14 798.0,377.99 798.5,376.84 799.0,375.69 799.5,374.53 800.0,373.36 800.5,372.19 801.0,371.01 801.5,369.83 802.0,368.65 802.5,367.46 803.0,366.27 803.5,365.08 804.0,363.88 804.5,362.69 805.0,361.49 805.5,360.29 806.0,359.09 806.5,357.88 807.0,356.68 807.5,355.50 808.0,354.33 808.5,353.16 809.0,351.99 809.5,350.82 810.0,349.65 810.5,348.48 811.0,347.32 811.5,346.16 812.0,345.00 812.5,343.85 813.0,342.69 813.5,341.55 814.0,340.40 814.5,339.26 815.0,338.13 815.5,337.00 816.0,335.87 816.5,334.75 817.0,333.64 817.5,332.53 818.0,331.43 818.5,330.34 819.0,329.25 819.5,328.17 820.0,327.10 820.5,326.04 821.0,324.98 821.5,323.94 822.0,322.90 822.5,321.87 823.0,320.85 823.5,319.84 824.0,318.84 824.5,317.85 825.0,316.87 825.5,315.90 826.0,314.95 826.5,314.00 827.0,313.07 827.5,312.15 828.0,311.24 828.5,310.34 829.0,309.45 829.5,308.58 830.0,307.72 830.5,306.87 831.0,306.04 831.5,305.22 832.0,304.42 832.5,303.63 833.0,302.85 833.5,302.09 834.0,301.34 834.5,300.61 835.0,299.90 835.5,299.20 836.0,298.51 836.5,297.84 837.0,297.19 837.5,296.55 838.0,295.93 838.5,295.33 839.0,294.74 839.5,294.17 840.0,293.62 840.5,293.08 841.0,292.56 841.5,292.06 842.0,291.57 842.5,291.11 843.0,290.66 843.5,290.23 844.0,289.82 844.5,289.42 845.0,289.05 845.5,288.69 846.0,288.35 846.5,288.03 847.0,287.73 847.5,287.45 848.0,287.18 848.5,286.94 849.0,286.71 849.5,286.51 850.0,286.32 850.5,286.15 851.0,286.00 851.5,285.87 852.0,285.76 852.5,285.67 853.0,285.60 853.5,285.55 854.0,285.51 854.5,285.50 855.0,285.51 855.5,285.53 856.0,285.58 856.5,285.64 857.0,285.72 857.5,285.83 858.0,285.95 858.5,286.09 859.0,286.25 859.5,286.43 860.0,286.63 860.5,286.85 861.0,287.08 861.5,287.34 862.0,287.62 862.5,287.91 863.0,288.22 863.5,288.55 864.0,288.90 864.5,289.27 865.0,289.66 865.5,290.06 866.0,290.49 866.5,290.93 867.0,291.39 867.5,291.86 868.0,292.36 868.5,292.87 869.0,293.40 869.5,293.95 870.0,294.51 870.5,295.09 871.0,295.69 871.5,296.30 872.0,296.93 872.5,297.58 873.0,298.24 873.5,298.92 874.0,299.61 874.5,300.32 875.0,301.05 875.5,301.79 876.0,302.55 876.5,303.32 877.0,304.10 877.5,304.90 878.0,305.71 878.5,306.54 879.0,307.38 879.5,308.23 880.0,309.10 880.5,309.98 881.0,310.87 881.5,311.78 882.0,312.70 882.5,313.63 883.0,314.57 883.5,315.52 884.0,316.48 884.5,317.46 885.0,318.44 885.5,319.44 886.0,320.44 886.5,321.46 887.0,322.49 887.5,323.52 888.0,324.56 888.5,325.61 889.0,326.68 889.5,327.74 890.0,328.82 890.5,329.90 891.0,330.99 891.5,332.09 892.0,333.20 892.5,334.31 893.0,335.42 893.5,336.55 894.0,337.68 894.5,338.81 895.0,339.95 895.5,341.09 896.0,342.23 896.5,343.39 897.0,344.54 897.5,345.70 898.0,346.86 898.5,348.02 899.0,349.18 899.5,350.35 900.0,351.52 900.5,352.69 901.0,353.86 901.5,355.03 902.0,356.20 902.5,357.40 903.0,358.61 903.5,359.81 904.0,361.01 904.5,362.21 905.0,363.41 905.5,364.60 906.0,365.80 906.5,366.99 907.0,368.17 907.5,369.36 908.0,370.54 908.5,371.72 909.0,372.89 909.5,374.06 910.0,375.22 910.5,376.38 911.0,377.53 911.5,378.68 912.0,379.82 912.5,380.96 913.0,382.08 913.5,383.20 914.0,384.32 914.5,385.42 915.0,386.52 915.5,387.61 916.0,388.69 916.5,389.76 917.0,390.82 917.5,391.87 918.0,392.92 918.5,393.95 919.0,394.97 919.5,395.98 920.0,396.98 920.5,397.97 921.0,398.95 921.5,399.92 922.0,400.87 922.5,401.81 923.0,402.74 923.5,403.66 924.0,404.56 924.5,405.45 925.0,406.33 925.5,407.19 926.0,408.04 926.5,408.88 927.0,409.70 927.5,410.51 928.0,411.30 928.5,412.07 929.0,412.83 929.5,413.58 930.0,414.31 930.5,415.02 931.0,415.72 931.5,416.40 932.0,417.06 932.5,417.71 933.0,418.34 933.5,418.95 934.0,419.55 934.5,420.13 935.0,420.69 935.5,421.23 936.0,421.76 936.5,422.27 937.0,422.76 937.5,423.23 938.0,423.68 938.5,424.11 939.0,424.53 939.5,424.93 940.0,425.31 940.5,425.67 941.0,426.01 941.5,426.33 942.0,426.63 942.5,426.91 943.0,427.17 943.5,427.42 944.0,427.64 944.5,427.84 945.0,428.03 945.5,428.19 946.0,428.34 946.5,428.46 947.0,428.57 947.5,428.66 948.0,428.72 948.5,428.77 949.0,428.79 949.5,428.80 950.0,428.79 950.5,428.75 951.0,428.70 951.5,428.62 952.0,428.53 952.5,428.42 953.0,428.28 953.5,428.13 954.0,427.96 954.5,427.77 955.0,427.55 955.5,427.32 956.0,427.07 956.5,426.80 957.0,426.51 957.5,426.20 958.0,425.87 958.5,425.52 959.0,425.16 959.5,424.77 960.0,424.37 960.5,423.94 961.0,423.50 961.5,423.04 962.0,422.56 962.5,422.07 963.0,421.55 963.5,421.02 964.0,420.47 964.5,419.90 965.0,419.31 965.5,418.71 966.0,418.09 966.5,417.45 967.0,416.80 967.5,416.13 968.0,415.44 968.5,414.74 969.0,414.02 969.5,413.28 970.0,412.53 970.5,411.76 971.0,410.98 971.5,410.18 972.0,409.37 972.5,408.55 973.0,407.71 973.5,406.85 974.0,405.98 974.5,405.10 975.0,404.20 975.5,403.30 976.0,402.37 976.5,401.44 977.0,400.49 977.5,399.53 978.0,398.56 978.5,397.58 979.0,396.58 979.5,395.58 980.0,394.56 980.5,393.54 981.0,392.50 981.5,391.45 982.0,390.40 982.5,389.33 983.0,388.26 983.5,387.17 984.0,386.08 984.5,384.98 985.0,383.87 985.5,382.76 986.0,381.63 986.5,380.50 987.0,379.37 987.5,378.22 988.0,377.07 988.5,375.92 989.0,374.76 989.5,373.59 990.0,372.42 990.5,371.25 991.0,370.07 991.5,368.89 992.0,367.70 992.5,366.51 993.0,365.32 993.5,364.12 994.0,362.93 994.5,361.73 995.0,360.53 995.5,359.33 996.0,358.12 996.5,356.92 997.0,355.73" fill="none" stroke="#e8e828" stroke-width="1.05"/>
<polyline points="48.0,361.06 48.5,358.02 49.0,355.02 49.5,352.06 50.0,349.11 50.5,346.15 51.0,343.21 51.5,340.26 52.0,337.32 52.5,334.38 53.0,331.45 53.5,328.53 54.0,325.61 54.5,322.70 55.0,319.80 55.5,316.91 56.0,314.04 56.5,311.17 57.0,308.32 57.5,305.47 58.0,302.65 58.5,299.84 59.0,297.04 59.5,294.26 60.0,291.50 60.5,288.75 61.0,286.02 61.5,283.31 62.0,280.63 62.5,277.96 63.0,275.31 63.5,272.69 64.0,270.09 64.5,267.51 65.0,264.96 65.5,262.43 66.0,259.93 66.5,257.46 67.0,255.01 67.5,252.59 68.0,250.19 68.5,247.83 69.0,245.50 69.5,243.20 70.0,240.92 70.5,238.68 71.0,236.48 71.5,234.30 72.0,232.16 72.5,230.05 73.0,227.98 73.5,225.94 74.0,223.94 74.5,221.97 75.0,220.05 75.5,218.15 76.0,216.30 76.5,214.49 77.0,212.71 77.5,210.97 78.0,209.28 78.5,207.62 79.0,206.00 79.5,204.43 80.0,202.90 80.5,201.41 81.0,199.96 81.5,198.55 82.0,197.19 82.5,195.87 83.0,194.60 83.5,193.37 84.0,192.18 84.5,191.04 85.0,189.95 85.5,188.90 86.0,187.90 86.5,186.94 87.0,186.03 87.5,185.16 88.0,184.35 88.5,183.58 89.0,182.85 89.5,182.18 90.0,181.55 90.5,180.97 91.0,180.44 91.5,179.96 92.0,179.53 92.5,179.14 93.0,178.80 93.5,178.51 94.0,178.27 94.5,178.08 95.0,177.94 95.5,177.85 96.0,177.80 96.5,177.81 97.0,177.86 97.5,177.97 98.0,178.12 98.5,178.32 99.0,178.57 99.5,178.87 100.0,179.21 100.5,179.61 101.0,180.05 101.5,180.54 102.0,181.09 102.5,181.67 103.0,182.31 103.5,182.99 104.0,183.73 104.5,184.51 105.0,185.33 105.5,186.21 106.0,187.13 106.5,188.09 107.0,189.10 107.5,190.16 108.0,191.27 108.5,192.42 109.0,193.61 109.5,194.85 110.0,196.13 110.5,197.46 111.0,198.83 111.5,200.24 112.0,201.70 112.5,203.20 113.0,204.74 113.5,206.32 114.0,207.95 114.5,209.61 115.0,211.32 115.5,213.06 116.0,214.85 116.5,216.67 117.0,218.53 117.5,220.43 118.0,222.36 118.5,224.34 119.0,226.35 119.5,228.39 120.0,230.47 120.5,232.59 121.0,234.73 121.5,236.91 122.0,239.13 122.5,241.38 123.0,243.65 123.5,245.96 124.0,248.30 124.5,250.67 125.0,253.07 125.5,255.49 126.0,257.95 126.5,260.43 127.0,262.94 127.5,265.47 128.0,268.03 128.5,270.61 129.0,273.21 129.5,275.84 130.0,278.49 130.5,281.16 131.0,283.85 131.5,286.57 132.0,289.30 132.5,292.05 133.0,294.81 133.5,297.60 134.0,300.40 134.5,303.21 135.0,306.04 135.5,308.89 136.0,311.74 136.5,314.61 137.0,317.49 137.5,320.38 138.0,323.28 138.5,326.19 139.0,329.11 139.5,332.04 140.0,334.97 140.5,337.90 141.0,340.85 141.5,343.79 142.0,346.75 142.5,349.70 143.0,352.65 143.5,355.61 144.0,358.63 144.5,361.67 145.0,364.71 145.5,367.75 146.0,370.78 146.5,373.81 147.0,376.83 147.5,379.85 148.0,382.86 148.5,385.87 149.0,388.86 149.5,391.85 150.0,394.83 150.5,397.79 151.0,400.75 151.5,403.69 152.0,406.62 152.5,409.54 153.0,412.44 153.5,415.33 154.0,418.20 154.5,421.05 155.0,423.89 155.5,426.70 156.0,429.50 156.5,432.28 157.0,435.03 157.5,437.77 158.0,440.48 158.5,443.17 159.0,445.84 159.5,448.48 160.0,451.09 160.5,453.68 161.0,456.24 161.5,458.78 162.0,461.29 162.5,463.76 163.0,466.21 163.5,468.63 164.0,471.02 164.5,473.37 165.0,475.70 165.5,477.99 166.0,480.25 166.5,482.47 167.0,484.66 167.5,486.81 168.0,488.93 168.5,491.01 169.0,493.05 169.5,495.06 170.0,497.03 170.5,498.96 171.0,500.85 171.5,502.70 172.0,504.51 172.5,506.28 173.0,508.01 173.5,509.70 174.0,511.34 174.5,512.94 175.0,514.50 175.5,516.02 176.0,517.49 176.5,518.92 177.0,520.30 177.5,521.64 178.0,522.93 178.5,524.18 179.0,525.38 179.5,526.53 180.0,527.64 180.5,528.70 181.0,529.72 181.5,530.68 182.0,531.60 182.5,532.47 183.0,533.29 183.5,534.06 184.0,534.78 184.5,535.46 185.0,536.08 185.5,536.66 186.0,537.19 186.5,537.66 187.0,538.09 187.5,538.47 188.0,538.79 188.5,539.07 189.0,539.30 189.5,539.47 190.0,539.60 190.5,539.67 191.0,539.70 191.5,539.67 192.0,539.60 192.5,539.47 193.0,539.30 193.5,539.07 194.0,538.79 194.5,538.47 195.0,538.09 195.5,537.66 196.0,537.19 196.5,536.66 197.0,536.08 197.5,535.46 198.0,534.78 198.5,534.06 199.0,533.29 199.5,532.47 200.0,531.60 200.5,530.68 201.0,529.72 201.5,528.70 202.0,527.64 202.5,526.53 203.0,525.38 203.5,524.18 204.0,522.93 204.5,521.64 205.0,520.30 205.5,518.92 206.0,517.49 206.5,516.02 207.0,514.50 207.5,512.94 208.0,511.34 208.5,509.70 209.0,508.01 209.5,506.28 210.0,504.51 210.5,502.70 211.0,500.85 211.5,498.96 212.0,497.03 212.5,495.06 213.0,493.05 213.5,491.01 214.0,488.93 214.5,486.81 215.0,484.66 215.5,482.47 216.0,480.25 216.5,477.99 217.0,475.70 217.5,473.37 218.0,471.02 218.5,468.63 219.0,466.21 219.5,463.76 220.0,461.29 220.5,458.78 221.0,456.24 221.5,453.68 222.0,451.09 222.5,448.48 223.0,445.84 223.5,443.17 224.0,440.48 224.5,437.77 225.0,435.03 225.5,432.28 226.0,429.50 226.5,426.70 227.0,423.89 227.5,421.05 228.0,418.20 228.5,415.33 229.0,412.44 229.5,409.54 230.0,406.62 230.5,403.69 231.0,400.75 231.5,397.79 232.0,394.83 232.5,391.85 233.0,388.86 233.5,385.87 234.0,382.86 234.5,379.85 235.0,376.83 235.5,373.81 236.0,370.78 236.5,367.75 237.0,364.71 237.5,361.67 238.0,358.63 238.5,355.61 239.0,352.65 239.5,349.70 240.0,346.75 240.5,343.79 241.0,340.85 241.5,337.90 242.0,334.97 242.5,332.04 243.0,329.11 243.5,326.19 244.0,323.28 244.5,320.38 245.0,317.49 245.5,314.61 246.0,311.74 246.5,308.89 247.0,306.04 247.5,303.21 248.0,300.40 248.5,297.60 249.0,294.81 249.5,292.05 250.0,289.30 250.5,286.57 251.0,283.85 251.5,281.16 252.0,278.49 252.5,275.84 253.0,273.21 253.5,270.61 254.0,268.03 254.5,265.47 255.0,262.94 255.5,260.43 256.0,257.95 256.5,255.49 257.0,253.07 257.5,250.67 258.0,248.30 258.5,245.96 259.0,243.65 259.5,241.38 260.0,239.13 260.5,236.91 261.0,234.73 261.5,232.59 262.0,230.47 262.5,228.39 263.0,226.35 263.5,224.34 264.0,222.36 264.5,220.43 265.0,218.53 265.5,216.67 266.0,214.85 266.5,213.06 267.0,211.32 267.5,209.61 268.0,207.95 268.5,206.32 269.0,204.74 269.5,203.20 270.0,201.70 270.5,200.24 271.0,198.83 271.5,197.46 272.0,196.13 272.5,194.85 273.0,193.61 273.5,192.42 274.0,191.27 274.5,190.16 275.0,189.10 275.5,188.09 276.0,187.13 276.5,186.21 277.0,185.33 277.5,184.51 278.0,183.73 278.5,182.99 279.0,182.31 279.5,181.67 280.0,181.09 280.5,180.54 281.0,180.05 281.5,179.61 282.0,179.21 282.5,178.87 283.0,178.57 283.5,178.32 284.0,178.12 284.5,177.97 285.0,177.86 285.5,177.81 286.0,177.80 286.5,177.85 287.0,177.94 287.5,178.08 288.0,178.27 288.5,178.51 289.0,178.80 289.5,179.14 290.0,179.53 290.5,179.96 291.0,180.44 291.5,180.97 292.0,181.55 292.5,182.18 293.0,182.85 293.5,183.58 294.0,184.35 294.5,185.16 295.0,186.03 295.5,186.94 296.0,187.90 296.5,188.90 297.0,189.95 297.5,191.04 298.0,192.18 298.5,193.37 299.0,194.60 299.5,195.87 300.0,197.19 300.5,198.55 301.0,199.96 301.5,201.41 302.0,202.90 302.5,204.43 303.0,206.00 303.5,207.62 304.0,209.28 304.5,210.97 305.0,212.71 305.5,214.49 306.0,216.30 306.5,218.15 307.0,220.05 307.5,221.97 308.0,223.94 308.5,225.94 309.0,227.98 309.5,230.05 310.0,232.16 310.5,234.30 311.0,236.48 311.5,238.68 312.0,240.92 312.5,243.20 313.0,245.50 313.5,247.83 314.0,250.19 314.5,252.59 315.0,255.01 315.5,257.46 316.0,259.93 316.5,262.43 317.0,264.96 317.5,267.51 318.0,270.09 318.5,272.69 319.0,275.31 319.5,277.96 320.0,280.63 320.5,283.31 321.0,286.02 321.5,288.75 322.0,291.50 322.5,294.26 323.0,297.04 323.5,299.84 324.0,302.65 324.5,305.47 325.0,308.32 325.5,311.17 326.0,314.04 326.5,316.91 327.0,319.80 327.5,322.70 328.0,325.61 328.5,328.53 329.0,331.45 329.5,334.38 330.0,337.32 330.5,340.26 331.0,343.21 331.5,346.15 332.0,349.11 332.5,352.06 333.0,355.02 333.5,358.02 334.0,361.06 334.5,364.10 335.0,367.14 335.5,370.17 336.0,373.20 336.5,376.23 337.0,379.25 337.5,382.26 338.0,385.27 338.5,388.26 339.0,391.25 339.5,394.23 340.0,397.20 340.5,400.16 341.0,403.11 341.5,406.04 342.0,408.96 342.5,411.86 343.0,414.75 343.5,417.63 344.0,420.48 344.5,423.32 345.0,426.14 345.5,428.94 346.0,431.72 346.5,434.48 347.0,437.22 347.5,439.94 348.0,442.63 348.5,445.30 349.0,447.95 349.5,450.57 350.0,453.16 350.5,455.73 351.0,458.27 351.5,460.79 352.0,463.27 352.5,465.72 353.0,468.15 353.5,470.54 354.0,472.90 354.5,475.23 355.0,477.53 355.5,479.80 356.0,482.03 356.5,484.22 357.0,486.38 357.5,488.51 358.0,490.60 358.5,492.65 359.0,494.66 359.5,496.64 360.0,498.58 360.5,500.47 361.0,502.33 361.5,504.15 362.0,505.93 362.5,507.67 363.0,509.36 363.5,511.02 364.0,512.63 364.5,514.20 365.0,515.72 365.5,517.20 366.0,518.64 366.5,520.03 367.0,521.38 367.5,522.68 368.0,523.93 368.5,525.14 369.0,526.31 369.5,527.42 370.0,528.49 370.5,529.52 371.0,530.49 371.5,531.42 372.0,532.30 372.5,533.13 373.0,533.91 373.5,534.64 374.0,535.33 374.5,535.96 375.0,536.55 375.5,537.09 376.0,537.57 376.5,538.01 377.0,538.40 377.5,538.73 378.0,539.02 378.5,539.26 379.0,539.44 379.5,539.58 380.0,539.66 380.5,539.70 381.0,539.68 381.5,539.62 382.0,539.50 382.5,539.34 383.0,539.12 383.5,538.85 384.0,538.54 384.5,538.17 385.0,537.75 385.5,537.29 386.0,536.77 386.5,536.20 387.0,535.59 387.5,534.92 388.0,534.21 388.5,533.45 389.0,532.64 389.5,531.78 390.0,530.87 390.5,529.91 391.0,528.91 391.5,527.86 392.0,526.76 392.5,525.62 393.0,524.42 393.5,523.19 394.0,521.90 394.5,520.57 395.0,519.20 395.5,517.78 396.0,516.32 396.5,514.81 397.0,513.26 397.5,511.67 398.0,510.03 398.5,508.35 399.0,506.63 399.5,504.87 400.0,503.07 400.5,501.22 401.0,499.34 401.5,497.42 402.0,495.46 402.5,493.46 403.0,491.42 403.5,489.35 404.0,487.24 404.5,485.09 405.0,482.91 405.5,480.69 406.0,478.44 406.5,476.16 407.0,473.84 407.5,471.49 408.0,469.11 408.5,466.70 409.0,464.26 409.5,461.78 410.0,459.28 410.5,456.75 411.0,454.20 411.5,451.61 412.0,449.00 412.5,446.37 413.0,443.71 413.5,441.02 414.0,438.31 414.5,435.58 415.0,432.83 415.5,430.06 416.0,427.26 416.5,424.45 417.0,421.62 417.5,418.77 418.0,415.90 418.5,413.02 419.0,410.12 419.5,407.21 420.0,404.28 420.5,401.34 421.0,398.39 421.5,395.42 422.0,392.45 422.5,389.46 423.0,386.47 423.5,383.46 424.0,380.45 424.5,377.44 425.0,374.41 425.5,371.39 426.0,368.35 426.5,365.32 427.0,362.28 427.5,359.24 428.0,356.20 428.5,353.24 429.0,350.29 429.5,347.34 430.0,344.38 430.5,341.44 431.0,338.49 431.5,335.55 432.0,332.62 432.5,329.69 433.0,326.77 433.5,323.86 434.0,320.96 434.5,318.07 435.0,315.19 435.5,312.31 436.0,309.46 436.5,306.61 437.0,303.78 437.5,300.96 438.0,298.16 438.5,295.37 439.0,292.60 439.5,289.85 440.0,287.11 440.5,284.40 441.0,281.70 441.5,279.02 442.0,276.37 442.5,273.74 443.0,271.13 443.5,268.54 444.0,265.98 444.5,263.44 445.0,260.93 445.5,258.44 446.0,255.98 446.5,253.55 447.0,251.15 447.5,248.77 448.0,246.43 448.5,244.11 449.0,241.83 449.5,239.58 450.0,237.36 450.5,235.17 451.0,233.01 451.5,230.89 452.0,228.80 452.5,226.75 453.0,224.74 453.5,222.76 454.0,220.81 454.5,218.91 455.0,217.04 455.5,215.21 456.0,213.42 456.5,211.66 457.0,209.95 457.5,208.28 458.0,206.65 458.5,205.05 459.0,203.51 459.5,202.00 460.0,200.53 460.5,199.11 461.0,197.73 461.5,196.39 462.0,195.10 462.5,193.85 463.0,192.65 463.5,191.49 464.0,190.38 464.5,189.31 465.0,188.29 465.5,187.32 466.0,186.39 466.5,185.50 467.0,184.67 467.5,183.88 468.0,183.14 468.5,182.44 469.0,181.80 469.5,181.20 470.0,180.65 470.5,180.15 471.0,179.69 471.5,179.29 472.0,178.93 472.5,178.62 473.0,178.36 473.5,178.15 474.0,177.99 474.5,177.88 475.0,177.82 475.5,177.80 476.0,177.84 476.5,177.92 477.0,178.05 477.5,178.23 478.0,178.46 478.5,178.74 479.0,179.07 479.5,179.44 480.0,179.87 480.5,180.34 481.0,180.86 481.5,181.43 482.0,182.05 482.5,182.72 483.0,183.43 483.5,184.19 484.0,185.00 484.5,185.85 485.0,186.75 485.5,187.70 486.0,188.69 486.5,189.73 487.0,190.82 487.5,191.95 488.0,193.13 488.5,194.35 489.0,195.61 489.5,196.92 490.0,198.28 490.5,199.67 491.0,201.11 491.5,202.60 492.0,204.12 492.5,205.69 493.0,207.29 493.5,208.94 494.0,210.63 494.5,212.36 495.0,214.13 495.5,215.93 496.0,217.78 496.5,219.66 497.0,221.59 497.5,223.54 498.0,225.54 498.5,227.57 499.0,229.63 499.5,231.74 500.0,233.87 500.5,236.04 501.0,238.24 501.5,240.47 502.0,242.74 502.5,245.04 503.0,247.36 503.5,249.72 504.0,252.11 504.5,254.52 505.0,256.96 505.5,259.43 506.0,261.93 506.5,264.45 507.0,267.00 507.5,269.57 508.0,272.17 508.5,274.79 509.0,277.43 509.5,280.09 510.0,282.78 510.5,285.48 511.0,288.20 511.5,290.94 512.0,293.70 512.5,296.48 513.0,299.28 513.5,302.08 514.0,304.91 514.5,307.75 515.0,310.60 515.5,313.46 516.0,316.34 516.5,319.22 517.0,322.12 517.5,325.03 518.0,327.94 518.5,330.86 519.0,333.79 519.5,336.73 520.0,339.67 520.5,342.62 521.0,345.56 521.5,348.52 522.0,351.47 522.5,354.43 523.0,357.42 523.5,360.46 524.0,363.50 524.5,366.53 525.0,369.57 525.5,372.60 526.0,375.62 526.5,378.64 527.0,381.66 527.5,384.67 528.0,387.67 528.5,390.66 529.0,393.64 529.5,396.61 530.0,399.57 530.5,402.52 531.0,405.45 531.5,408.38 532.0,411.28 532.5,414.18 533.0,417.05 533.5,419.91 534.0,422.75 534.5,425.58 535.0,428.38 535.5,431.17 536.0,433.93 536.5,436.68 537.0,439.40 537.5,442.10 538.0,444.77 538.5,447.42 539.0,450.05 539.5,452.65 540.0,455.22 540.5,457.77 541.0,460.29 541.5,462.78 542.0,465.24 542.5,467.67 543.0,470.07 543.5,472.43 544.0,474.77 544.5,477.08 545.0,479.35 545.5,481.58 546.0,483.79 546.5,485.95 547.0,488.09 547.5,490.18 548.0,492.24 548.5,494.26 549.0,496.25 549.5,498.19 550.0,500.10 550.5,501.97 551.0,503.79 551.5,505.58 552.0,507.32 552.5,509.03 553.0,510.69 553.5,512.31 554.0,513.89 554.5,515.42 555.0,516.91 555.5,518.35 556.0,519.75 556.5,521.11 557.0,522.42 557.5,523.69 558.0,524.91 558.5,526.08 559.0,527.21 559.5,528.28 560.0,529.32 560.5,530.30 561.0,531.24 561.5,532.13 562.0,532.97 562.5,533.76 563.0,534.50 563.5,535.20 564.0,535.84 564.5,536.44 565.0,536.98 565.5,537.48 566.0,537.93 566.5,538.32 567.0,538.67 567.5,538.97 568.0,539.21 568.5,539.41 569.0,539.55 569.5,539.65 570.0,539.70 570.5,539.69 571.0,539.64 571.5,539.53 572.0,539.37 572.5,539.17 573.0,538.91 573.5,538.60 574.0,538.25 574.5,537.84 575.0,537.38 575.5,536.88 576.0,536.32 576.5,535.72 577.0,535.06 577.5,534.36 578.0,533.60 578.5,532.80 579.0,531.95 579.5,531.05 580.0,530.11 580.5,529.11 581.0,528.07 581.5,526.98 582.0,525.85 582.5,524.67 583.0,523.44 583.5,522.16 584.0,520.84 584.5,519.48 585.0,518.07 585.5,516.61 586.0,515.12 586.5,513.57 587.0,511.99 587.5,510.36 588.0,508.69 588.5,506.98 589.0,505.22 589.5,503.43 590.0,501.60 590.5,499.72 591.0,497.81 591.5,495.85 592.0,493.86 592.5,491.83 593.0,489.77 593.5,487.66 594.0,485.52 594.5,483.35 595.0,481.14 595.5,478.90 596.0,476.62 596.5,474.31 597.0,471.96 597.5,469.59 598.0,467.18 598.5,464.75 599.0,462.28 599.5,459.78 600.0,457.26 600.5,454.71 601.0,452.13 601.5,449.53 602.0,446.89 602.5,444.24 603.0,441.56 603.5,438.86 604.0,436.13 604.5,433.38 605.0,430.61 605.5,427.82 606.0,425.02 606.5,422.19 607.0,419.34 607.5,416.48 608.0,413.60 608.5,410.70 609.0,407.79 609.5,404.87 610.0,401.93 610.5,398.98 611.0,396.02 611.5,393.04 612.0,390.06 612.5,387.07 613.0,384.06 613.5,381.06 614.0,378.04 614.5,375.02 615.0,371.99 615.5,368.96 616.0,365.93 616.5,362.89 617.0,359.85 617.5,356.81 618.0,353.84 618.5,350.88 619.0,347.93 619.5,344.97 620.0,342.03 620.5,339.08 621.0,336.14 621.5,333.21 622.0,330.28 622.5,327.36 623.0,324.45 623.5,321.54 624.0,318.65 624.5,315.76 625.0,312.89 625.5,310.03 626.0,307.18 626.5,304.34 627.0,301.52 627.5,298.72 628.0,295.92 628.5,293.15 629.0,290.39 629.5,287.66 630.0,284.94 630.5,282.24 631.0,279.56 631.5,276.90 632.0,274.26 632.5,271.65 633.0,269.06 633.5,266.49 634.0,263.95 634.5,261.43 635.0,258.94 635.5,256.47 636.0,254.04 636.5,251.63 637.0,249.25 637.5,246.89 638.0,244.57 638.5,242.28 639.0,240.02 639.5,237.80 640.0,235.60 640.5,233.44 641.0,231.31 641.5,229.22 642.0,227.16 642.5,225.14 643.0,223.15 643.5,221.20 644.0,219.28 644.5,217.41 645.0,215.57 645.5,213.77 646.0,212.01 646.5,210.29 647.0,208.61 647.5,206.97 648.0,205.37 648.5,203.81 649.0,202.30 649.5,200.82 650.0,199.39 650.5,198.00 651.0,196.66 651.5,195.36 652.0,194.10 652.5,192.89 653.0,191.72 653.5,190.60 654.0,189.52 654.5,188.49 655.0,187.51 655.5,186.57 656.0,185.68 656.5,184.83 657.0,184.03 657.5,183.28 658.0,182.58 658.5,181.92 659.0,181.31 659.5,180.76 660.0,180.24 660.5,179.78 661.0,179.37 661.5,179.00 662.0,178.68 662.5,178.41 663.0,178.19 663.5,178.02 664.0,177.90 664.5,177.82 665.0,177.80 665.5,177.82 666.0,177.90 666.5,178.02 667.0,178.19 667.5,178.41 668.0,178.68 668.5,179.00 669.0,179.37 669.5,179.78 670.0,180.24 670.5,180.76 671.0,181.31 671.5,181.92 672.0,182.58 672.5,183.28 673.0,184.03 673.5,184.83 674.0,185.68 674.5,186.57 675.0,187.51 675.5,188.49 676.0,189.52 676.5,190.60 677.0,191.72 677.5,192.89 678.0,194.10 678.5,195.36 679.0,196.66 679.5,198.00 680.0,199.39 680.5,200.82 681.0,202.30 681.5,203.81 682.0,205.37 682.5,206.97 683.0,208.61 683.5,210.29 684.0,212.01 684.5,213.77 685.0,215.57 685.5,217.41 686.0,219.28 686.5,221.20 687.0,223.15 687.5,225.14 688.0,227.16 688.5,229.22 689.0,231.31 689.5,233.44 690.0,235.60 690.5,237.80 691.0,240.02 691.5,242.28 692.0,244.57 692.5,246.89 693.0,249.25 693.5,251.63 694.0,254.04 694.5,256.47 695.0,258.94 695.5,261.43 696.0,263.95 696.5,266.49 697.0,269.06 697.5,271.65 698.0,274.26 698.5,276.90 699.0,279.56 699.5,282.24 700.0,284.94 700.5,287.66 701.0,290.39 701.5,293.15 702.0,295.92 702.5,298.72 703.0,301.52 703.5,304.34 704.0,307.18 704.5,310.03 705.0,312.89 705.5,315.76 706.0,318.65 706.5,321.54 707.0,324.45 707.5,327.36 708.0,330.28 708.5,333.21 709.0,336.14 709.5,339.08 710.0,342.03 710.5,344.97 711.0,347.93 711.5,350.88 712.0,353.84 712.5,356.81 713.0,359.85 713.5,362.89 714.0,365.93 714.5,368.96 715.0,371.99 715.5,375.02 716.0,378.04 716.5,381.06 717.0,384.06 717.5,387.07 718.0,390.06 718.5,393.04 719.0,396.02 719.5,398.98 720.0,401.93 720.5,404.87 721.0,407.79 721.5,410.70 722.0,413.60 722.5,416.48 723.0,419.34 723.5,422.19 724.0,425.02 724.5,427.82 725.0,430.61 725.5,433.38 726.0,436.13 726.5,438.86 727.0,441.56 727.5,444.24 728.0,446.89 728.5,449.53 729.0,452.13 729.5,454.71 730.0,457.26 730.5,459.78 731.0,462.28 731.5,464.75 732.0,467.18 732.5,469.59 733.0,471.96 733.5,474.31 734.0,476.62 734.5,478.90 735.0,481.14 735.5,483.35 736.0,485.52 736.5,487.66 737.0,489.77 737.5,491.83 738.0,493.86 738.5,495.85 739.0,497.81 739.5,499.72 740.0,501.60 740.5,503.43 741.0,505.22 741.5,506.98 742.0,508.69 742.5,510.36 743.0,511.99 743.5,513.57 744.0,515.12 744.5,516.61 745.0,518.07 745.5,519.48 746.0,520.84 746.5,522.16 747.0,523.44 747.5,524.67 748.0,525.85 748.5,526.98 749.0,528.07 749.5,529.11 750.0,530.11 750.5,531.05 751.0,531.95 751.5,532.80 752.0,533.60 752.5,534.36 753.0,535.06 753.5,535.72 754.0,536.32 754.5,536.88 755.0,537.38 755.5,537.84 756.0,538.25 756.5,538.60 757.0,538.91 757.5,539.17 758.0,539.37 758.5,539.53 759.0,539.64 759.5,539.69 760.0,539.70 760.5,539.65 761.0,539.55 761.5,539.41 762.0,539.21 762.5,538.97 763.0,538.67 763.5,538.32 764.0,537.93 764.5,537.48 765.0,536.98 765.5,536.44 766.0,535.84 766.5,535.20 767.0,534.50 767.5,533.76 768.0,532.97 768.5,532.13 769.0,531.24 769.5,530.30 770.0,529.32 770.5,528.28 771.0,527.21 771.5,526.08 772.0,524.91 772.5,523.69 773.0,522.42 773.5,521.11 774.0,519.75 774.5,518.35 775.0,516.91 775.5,515.42 776.0,513.89 776.5,512.31 777.0,510.69 777.5,509.03 778.0,507.32 778.5,505.58 779.0,503.79 779.5,501.97 780.0,500.10 780.5,498.19 781.0,496.25 781.5,494.26 782.0,492.24 782.5,490.18 783.0,488.09 783.5,485.95 784.0,483.79 784.5,481.58 785.0,479.35 785.5,477.08 786.0,474.77 786.5,472.43 787.0,470.07 787.5,467.67 788.0,465.24 788.5,462.78 789.0,460.29 789.5,457.77 790.0,455.22 790.5,452.65 791.0,450.05 791.5,447.42 792.0,444.77 792.5,442.10 793.0,439.40 793.5,436.68 794.0,433.93 794.5,431.17 795.0,428.38 795.5,425.58 796.0,422.75 796.5,419.91 797.0,417.05 797.5,414.18 798.0,411.28 798.5,408.38 799.0,405.45 799.5,402.52 800.0,399.57 800.5,396.61 801.0,393.64 801.5,390.66 802.0,387.67 802.5,384.67 803.0,381.66 803.5,378.64 804.0,375.62 804.5,372.60 805.0,369.57 805.5,366.53 806.0,363.50 806.5,360.46 807.0,357.42 807.5,354.43 808.0,351.47 808.5,348.52 809.0,345.56 809.5,342.62 810.0,339.67 810.5,336.73 811.0,333.79 811.5,330.86 812.0,327.94 812.5,325.03 813.0,322.12 813.5,319.22 814.0,316.34 814.5,313.46 815.0,310.60 815.5,307.75 816.0,304.91 816.5,302.08 817.0,299.28 817.5,296.48 818.0,293.70 818.5,290.94 819.0,288.20 819.5,285.48 820.0,282.78 820.5,280.09 821.0,277.43 821.5,274.79 822.0,272.17 822.5,269.57 823.0,267.00 823.5,264.45 824.0,261.93 824.5,259.43 825.0,256.96 825.5,254.52 826.0,252.11 826.5,249.72 827.0,247.36 827.5,245.04 828.0,242.74 828.5,240.47 829.0,238.24 829.5,236.04 830.0,233.87 830.5,231.74 831.0,229.63 831.5,227.57 832.0,225.54 832.5,223.54 833.0,221.59 833.5,219.66 834.0,217.78 834.5,215.93 835.0,214.13 835.5,212.36 836.0,210.63 836.5,208.94 837.0,207.29 837.5,205.69 838.0,204.12 838.5,202.60 839.0,201.11 839.5,199.67 840.0,198.28 840.5,196.92 841.0,195.61 841.5,194.35 842.0,193.13 842.5,191.95 843.0,190.82 843.5,189.73 844.0,188.69 844.5,187.70 845.0,186.75 845.5,185.85 846.0,185.00 846.5,184.19 847.0,183.43 847.5,182.72 848.0,182.05 848.5,181.43 849.0,180.86 849.5,180.34 850.0,179.87 850.5,179.44 851.0,179.07 851.5,178.74 852.0,178.46 852.5,178.23 853.0,178.05 853.5,177.92 854.0,177.84 854.5,177.80 855.0,177.82 855.5,177.88 856.0,177.99 856.5,178.15 857.0,178.36 857.5,178.62 858.0,178.93 858.5,179.29 859.0,179.69 859.5,180.15 860.0,180.65 860.5,181.20 861.0,181.80 861.5,182.44 862.0,183.14 862.5,183.88 863.0,184.67 863.5,185.50 864.0,186.39 864.5,187.32 865.0,188.29 865.5,189.31 866.0,190.38 866.5,191.49 867.0,192.65 867.5,193.85 868.0,195.10 868.5,196.39 869.0,197.73 869.5,199.11 870.0,200.53 870.5,202.00 871.0,203.51 871.5,205.05 872.0,206.65 872.5,208.28 873.0,209.95 873.5,211.66 874.0,213.42 874.5,215.21 875.0,217.04 875.5,218.91 876.0,220.81 876.5,222.76 877.0,224.74 877.5,226.75 878.0,228.80 878.5,230.89 879.0,233.01 879.5,235.17 880.0,237.36 880.5,239.58 881.0,241.83 881.5,244.11 882.0,246.43 882.5,248.77 883.0,251.15 883.5,253.55 884.0,255.98 884.5,258.44 885.0,260.93 885.5,263.44 886.0,265.98 886.5,268.54 887.0,271.13 887.5,273.74 888.0,276.37 888.5,279.02 889.0,281.70 889.5,284.40 890.0,287.11 890.5,289.85 891.0,292.60 891.5,295.37 892.0,298.16 892.5,300.96 893.0,303.78 893.5,306.61 894.0,309.46 894.5,312.31 895.0,315.19 895.5,318.07 896.0,320.96 896.5,323.86 897.0,326.77 897.5,329.69 898.0,332.62 898.5,335.55 899.0,338.49 899.5,341.44 900.0,344.38 900.5,347.34 901.0,350.29 901.5,353.24 902.0,356.20 902.5,359.24 903.0,362.28 903.5,365.32 904.0,368.35 904.5,371.39 905.0,374.41 905.5,377.44 906.0,380.45 906.5,383.46 907.0,386.47 907.5,389.46 908.0,392.45 908.5,395.42 909.0,398.39 909.5,401.34 910.0,404.28 910.5,407.21 911.0,410.12 911.5,413.02 912.0,415.90 912.5,418.77 913.0,421.62 913.5,424.45 914.0,427.26 914.5,430.06 915.0,432.83 915.5,435.58 916.0,438.31 916.5,441.02 917.0,443.71 917.5,446.37 918.0,449.00 918.5,451.61 919.0,454.20 919.5,456.75 920.0,459.28 920.5,461.78 921.0,464.26 921.5,466.70 922.0,469.11 922.5,471.49 923.0,473.84 923.5,476.16 924.0,478.44 924.5,480.69 925.0,482.91 925.5,485.09 926.0,487.24 926.5,489.35 927.0,491.42 927.5,493.46 928.0,495.46 928.5,497.42 929.0,499.34 929.5,501.22 930.0,503.07 930.5,504.87 931.0,506.63 931.5,508.35 932.0,510.03 932.5,511.67 933.0,513.26 933.5,514.81 934.0,516.32 934.5,517.78 935.0,519.20 935.5,520.57 936.0,521.90 936.5,523.19 937.0,524.42 937.5,525.62 938.0,526.76 938.5,527.86 939.0,528.91 939.5,529.91 940.0,530.87 940.5,531.78 941.0,532.64 941.5,533.45 942.0,534.21 942.5,534.92 943.0,535.59 943.5,536.20 944.0,536.77 944.5,537.29 945.0,537.75 945.5,538.17 946.0,538.54 946.5,538.85 947.0,539.12 947.5,539.34 948.0,539.50 948.5,539.62 949.0,539.68 949.5,539.70 950.0,539.66 950.5,539.58 951.0,539.44 951.5,539.26 952.0,539.02 952.5,538.73 953.0,538.40 953.5,538.01 954.0,537.57 954.5,537.09 955.0,536.55 955.5,535.96 956.0,535.33 956.5,534.64 957.0,533.91 957.5,533.13 958.0,532.30 958.5,531.42 959.0,530.49 959.5,529.52 960.0,528.49 960.5,527.42 961.0,526.31 961.5,525.14 962.0,523.93 962.5,522.68 963.0,521.38 963.5,520.03 964.0,518.64 964.5,517.20 965.0,515.72 965.5,514.20 966.0,512.63 966.5,511.02 967.0,509.36 967.5,507.67 968.0,505.93 968.5,504.15 969.0,502.33 969.5,500.47 970.0,498.58 970.5,496.64 971.0,494.66 971.5,492.65 972.0,490.60 972.5,488.51 973.0,486.38 973.5,484.22 974.0,482.03 974.5,479.80 975.0,477.53 975.5,475.23 976.0,472.90 976.5,470.54 977.0,468.15 977.5,465.72 978.0,463.27 978.5,460.79 979.0,458.27 979.5,455.73 980.0,453.16 980.5,450.57 981.0,447.95 981.5,445.30 982.0,442.63 982.5,439.94 983.0,437.22 983.5,434.48 984.0,431.72 984.5,428.94 985.0,426.14 985.5,423.32 986.0,420.48 986.5,417.63 987.0,414.75 987.5,411.86 988.0,408.96 988.5,406.04 989.0,403.11 989.5,400.16 990.0,397.20 990.5,394.23 991.0,391.25 991.5,388.26 992.0,385.27 992.5,382.26 993.0,379.25 993.5,376.23 994.0,373.20 994.5,370.17 995.0,367.14 995.5,364.10 996.0,361.06 996.5,358.02 997.0,355.02" fill="none" stroke="#b010b8" stroke-width="1.05"/>
<g stroke="#f0f028" stroke-width="1.5" fill="none"><line x1="481.5" y1="631.5" x2="547" y2="631.5"/>
<line x1="481.5" y1="631.5" x2="481.5" y2="644"/>
<line x1="479" y1="644" x2="484" y2="644"/>
<line x1="487.5" y1="631.5" x2="487.5" y2="683.5"/>
<line x1="487.5" y1="643.5" x2="493.5" y2="643.5"/>
<line x1="493.5" y1="643.5" x2="493.5" y2="667.5"/>
<line x1="498.5" y1="631.5" x2="498.5" y2="705.5"/>
<line x1="498.5" y1="705.5" x2="550" y2="705.5"/>
<line x1="509.5" y1="631.5" x2="509.5" y2="651"/>
<line x1="486" y1="654.5" x2="505" y2="654.5"/>
<line x1="479" y1="654.5" x2="487.5" y2="654.5"/>
<line x1="462.5" y1="669.5" x2="483" y2="669.5"/>
<line x1="462.5" y1="669.5" x2="462.5" y2="694"/>
<line x1="472.5" y1="669.5" x2="472.5" y2="694"/>
<line x1="484.5" y1="671" x2="484.5" y2="694"/>
<line x1="484.5" y1="683.5" x2="517.5" y2="683.5"/>
<line x1="493.5" y1="667.5" x2="524.5" y2="667.5"/>
<line x1="506.5" y1="667.5" x2="506.5" y2="705.5"/>
<line x1="517.5" y1="667.5" x2="517.5" y2="683.5"/>
<line x1="506.5" y1="690.5" x2="536.5" y2="690.5"/>
<line x1="509.5" y1="643.5" x2="536.5" y2="643.5"/>
<line x1="524.5" y1="643" x2="524.5" y2="705.5"/>
<line x1="536.5" y1="631.5" x2="536.5" y2="705.5"/>
<line x1="547" y1="631.5" x2="547" y2="676.5"/>
<line x1="550" y1="659.5" x2="550" y2="705.5"/>
<line x1="524.5" y1="659.5" x2="550" y2="659.5"/>
<line x1="524.5" y1="676.5" x2="547" y2="676.5"/>
<circle cx="487.5" cy="631.5" r="1.8" fill="#f0f028" stroke="none"/>
<circle cx="498.5" cy="631.5" r="1.8" fill="#f0f028" stroke="none"/>
<circle cx="509.5" cy="631.5" r="1.8" fill="#f0f028" stroke="none"/>
<circle cx="536.5" cy="631.5" r="1.8" fill="#f0f028" stroke="none"/>
<circle cx="487.5" cy="643.5" r="1.8" fill="#f0f028" stroke="none"/>
<circle cx="487.5" cy="654.5" r="1.8" fill="#f0f028" stroke="none"/>
<circle cx="509.5" cy="643.5" r="1.8" fill="#f0f028" stroke="none"/>
<circle cx="509.5" cy="648.5" r="1.8" fill="#f0f028" stroke="none"/>
<circle cx="524.5" cy="643.5" r="1.8" fill="#f0f028" stroke="none"/>
<circle cx="518" cy="643.5" r="1.8" fill="#f0f028" stroke="none"/>
<circle cx="493.5" cy="667.5" r="1.8" fill="#f0f028" stroke="none"/>
<circle cx="506.5" cy="667.5" r="1.8" fill="#f0f028" stroke="none"/>
<circle cx="524.5" cy="667.5" r="1.8" fill="#f0f028" stroke="none"/>
<circle cx="524.5" cy="659.5" r="1.8" fill="#f0f028" stroke="none"/>
<circle cx="536.5" cy="659.5" r="1.8" fill="#f0f028" stroke="none"/>
<circle cx="472.5" cy="669.5" r="1.8" fill="#f0f028" stroke="none"/>
<circle cx="484.5" cy="674.5" r="1.8" fill="#f0f028" stroke="none"/>
<circle cx="484.5" cy="683.5" r="1.8" fill="#f0f028" stroke="none"/>
<circle cx="506.5" cy="690.5" r="1.8" fill="#f0f028" stroke="none"/>
<circle cx="518" cy="690.5" r="1.8" fill="#f0f028" stroke="none"/>
<circle cx="524.5" cy="690.5" r="1.8" fill="#f0f028" stroke="none"/>
<circle cx="536.5" cy="705.5" r="1.8" fill="#f0f028" stroke="none"/>
<circle cx="536.5" cy="676.5" r="1.8" fill="#f0f028" stroke="none"/>
<circle cx="524.5" cy="676.5" r="1.8" fill="#f0f028" stroke="none"/>
<circle cx="517.5" cy="667.5" r="1.8" fill="#f0f028" stroke="none"/>
<circle cx="486.6" cy="668.2" r="3.3" fill="#35363c"/><circle cx="487.40000000000003" cy="668.5" r="1.8" fill="#f0f028" stroke="none"/>
<circle cx="508.9" cy="654.9" r="3.3" fill="#35363c"/><circle cx="509.7" cy="655.1999999999999" r="1.8" fill="#f0f028" stroke="none"/>
<circle cx="536.6" cy="641.6" r="3.3" fill="#35363c"/><circle cx="537.4" cy="641.9" r="1.8" fill="#f0f028" stroke="none"/>
<circle cx="536.6" cy="690.3" r="3.3" fill="#35363c"/><circle cx="537.4" cy="690.5999999999999" r="1.8" fill="#f0f028" stroke="none"/>
<circle cx="462.5" cy="684.7" r="2.6" fill="#35363c"/>
<circle cx="547" cy="644.9" r="2.8" fill="#35363c"/>
<circle cx="550" cy="688.1" r="2.8" fill="#35363c"/>
<rect x="479" y="653.2" width="6" height="2.6" rx="1.3" fill="#35363c" stroke-width="1"/>
<rect x="490" y="660.6" width="6" height="2.6" rx="1.3" fill="#35363c" stroke-width="1"/>
<rect x="490" y="673.2" width="6" height="2.6" rx="1.3" fill="#35363c" stroke-width="1"/>
<rect x="517.5" y="636.3000000000001" width="6" height="2.6" rx="1.3" fill="#35363c" stroke-width="1"/>
<rect x="510" y="647.0" width="6" height="2.6" rx="1.3" fill="#35363c" stroke-width="1"/>
<rect x="508" y="660.3000000000001" width="6" height="2.6" rx="1.3" fill="#35363c" stroke-width="1"/>
<rect x="537.5" y="649.3000000000001" width="6" height="2.6" rx="1.3" fill="#35363c" stroke-width="1"/>
<rect x="537.5" y="659.7" width="6" height="2.6" rx="1.3" fill="#35363c" stroke-width="1"/>
<rect x="537.5" y="671.2" width="6" height="2.6" rx="1.3" fill="#35363c" stroke-width="1"/>
<rect x="518" y="697.2" width="6" height="2.6" rx="1.3" fill="#35363c" stroke-width="1"/>
<path d="M487.5 633.5L489.5 634.5L485.5 636.5L489.5 638.5L487.5 639.5 M487.5 645.5L489.5 646.5L485.5 648.5L489.5 650.5L487.5 651.5 M509.5 633.5L511.5 634.5L507.5 636.5L511.5 638.5L509.5 639.5 M472.5 675.5L474.5 676.5L470.5 678.5L474.5 680.5L472.5 681.5 M484.5 676L486.5 677L482.5 679L486.5 681L484.5 682 M484.5 685L486.5 686L482.5 688L486.5 690L484.5 691 M506.5 696L508.5 697L504.5 699L508.5 701L506.5 702 M524.5 647L526.5 648L522.5 650L526.5 652L524.5 653 M524.5 670L526.5 671L522.5 673L526.5 675L524.5 676 M524.5 681L526.5 682L522.5 684L526.5 686L524.5 687 M536.5 649L538.5 650L534.5 652L538.5 654L536.5 655 M536.5 665L538.5 666L534.5 668L538.5 670L536.5 671 M536.5 679L538.5 680L534.5 682L538.5 684L536.5 685" fill="none"/>
<path d="M460.0 693.5H465.0L462.5 697Z" fill="none" stroke-width="1"/>
<path d="M470.0 693.5H475.0L472.5 697Z" fill="none" stroke-width="1"/>
<path d="M482.0 693.5H487.0L484.5 697Z" fill="none" stroke-width="1"/>
<path d="M523 629.5l2 4M526 629.5l2 4M523 703.5l2 4M526 703.5l2 4M468.5 667v5" fill="none" stroke-width="1"/></g>
<line x1="456" y1="627.5" x2="480" y2="627.5" stroke="#7a7a70" stroke-width="0.9" stroke-dasharray="1.5 1.5"/><line x1="456" y1="630.5" x2="476" y2="630.5" stroke="#7a7a70" stroke-width="0.9" stroke-dasharray="1.5 1.5"/><line x1="457" y1="643.5" x2="477" y2="643.5" stroke="#7a7a70" stroke-width="0.9" stroke-dasharray="1.5 1.5"/><line x1="457" y1="645.5" x2="477" y2="645.5" stroke="#7a7a70" stroke-width="0.9" stroke-dasharray="1.5 1.5"/><line x1="457" y1="647.5" x2="479" y2="647.5" stroke="#7a7a70" stroke-width="0.9" stroke-dasharray="1.5 1.5"/><line x1="457" y1="649.5" x2="475" y2="649.5" stroke="#7a7a70" stroke-width="0.9" stroke-dasharray="1.5 1.5"/><line x1="457" y1="651.5" x2="471" y2="651.5" stroke="#7a7a70" stroke-width="0.9" stroke-dasharray="1.5 1.5"/><line x1="457" y1="654.5" x2="473" y2="654.5" stroke="#7a7a70" stroke-width="0.9" stroke-dasharray="1.5 1.5"/><line x1="456" y1="657.5" x2="474" y2="657.5" stroke="#7a7a70" stroke-width="0.9" stroke-dasharray="1.5 1.5"/><line x1="456" y1="662.5" x2="472" y2="662.5" stroke="#7a7a70" stroke-width="0.9" stroke-dasharray="1.5 1.5"/><line x1="462" y1="665.5" x2="472" y2="665.5" stroke="#7a7a70" stroke-width="0.9" stroke-dasharray="1.5 1.5"/><line x1="476" y1="656.5" x2="484" y2="656.5" stroke="#7a7a70" stroke-width="0.9" stroke-dasharray="1.5 1.5"/><line x1="505" y1="646.5" x2="511" y2="646.5" stroke="#7a7a70" stroke-width="0.9" stroke-dasharray="1.5 1.5"/><line x1="540" y1="645.5" x2="546" y2="645.5" stroke="#7a7a70" stroke-width="0.9" stroke-dasharray="1.5 1.5"/><line x1="548" y1="651.5" x2="567" y2="651.5" stroke="#7a7a70" stroke-width="0.9" stroke-dasharray="1.5 1.5"/><line x1="548" y1="654.5" x2="570" y2="654.5" stroke="#7a7a70" stroke-width="0.9" stroke-dasharray="1.5 1.5"/><line x1="548" y1="657.5" x2="562" y2="657.5" stroke="#7a7a70" stroke-width="0.9" stroke-dasharray="1.5 1.5"/><line x1="554" y1="701.5" x2="600" y2="701.5" stroke="#7a7a70" stroke-width="0.9" stroke-dasharray="1.5 1.5"/><line x1="526" y1="646.5" x2="532" y2="646.5" stroke="#7a7a70" stroke-width="0.9" stroke-dasharray="1.5 1.5"/><line x1="528" y1="682.5" x2="536" y2="682.5" stroke="#7a7a70" stroke-width="0.9" stroke-dasharray="1.5 1.5"/>
</svg>
<div class="a" style="left:0;top:0"><div class="yl" style="top:179px">-5.2V</div><div class="yl" style="top:210px">-5.4V</div><div class="yl" style="top:242px">-5.6V</div><div class="yl" style="top:273px">-5.8V</div><div class="yl" style="top:304px">-6.0V</div><div class="yl" style="top:335px">-6.2V</div><div class="yl" style="top:367px">-6.4V</div><div class="yl" style="top:398px">-6.6V</div><div class="yl" style="top:429px">-6.8V</div><div class="yl" style="top:460px">-7.0V</div><div class="yl" style="top:492px">-7.2V</div><div class="yl" style="top:523px">-7.4V</div><div class="yl" style="top:554px">-7.6V</div></div>
<div class="a" style="left:0;top:138px"><div class="xl" style="left:18px">0.0ms</div><div class="xl" style="left:113px">0.5ms</div><div class="xl" style="left:208px">1.0ms</div><div class="xl" style="left:302px">1.5ms</div><div class="xl" style="left:397px">2.0ms</div><div class="xl" style="left:492px">2.5ms</div><div class="xl" style="left:587px">3.0ms</div><div class="xl" style="left:682px">3.5ms</div><div class="xl" style="left:776px">4.0ms</div><div class="xl" style="left:871px">4.5ms</div><div class="xl" style="left:966px">5.0ms</div></div>
<div id="status" class="a"><div class="a" style="left:2px;top:3px;font-size:11px;color:#fff;white-space:pre">x = 2.025ms    y = -5.512V</div></div>
</body></html>
